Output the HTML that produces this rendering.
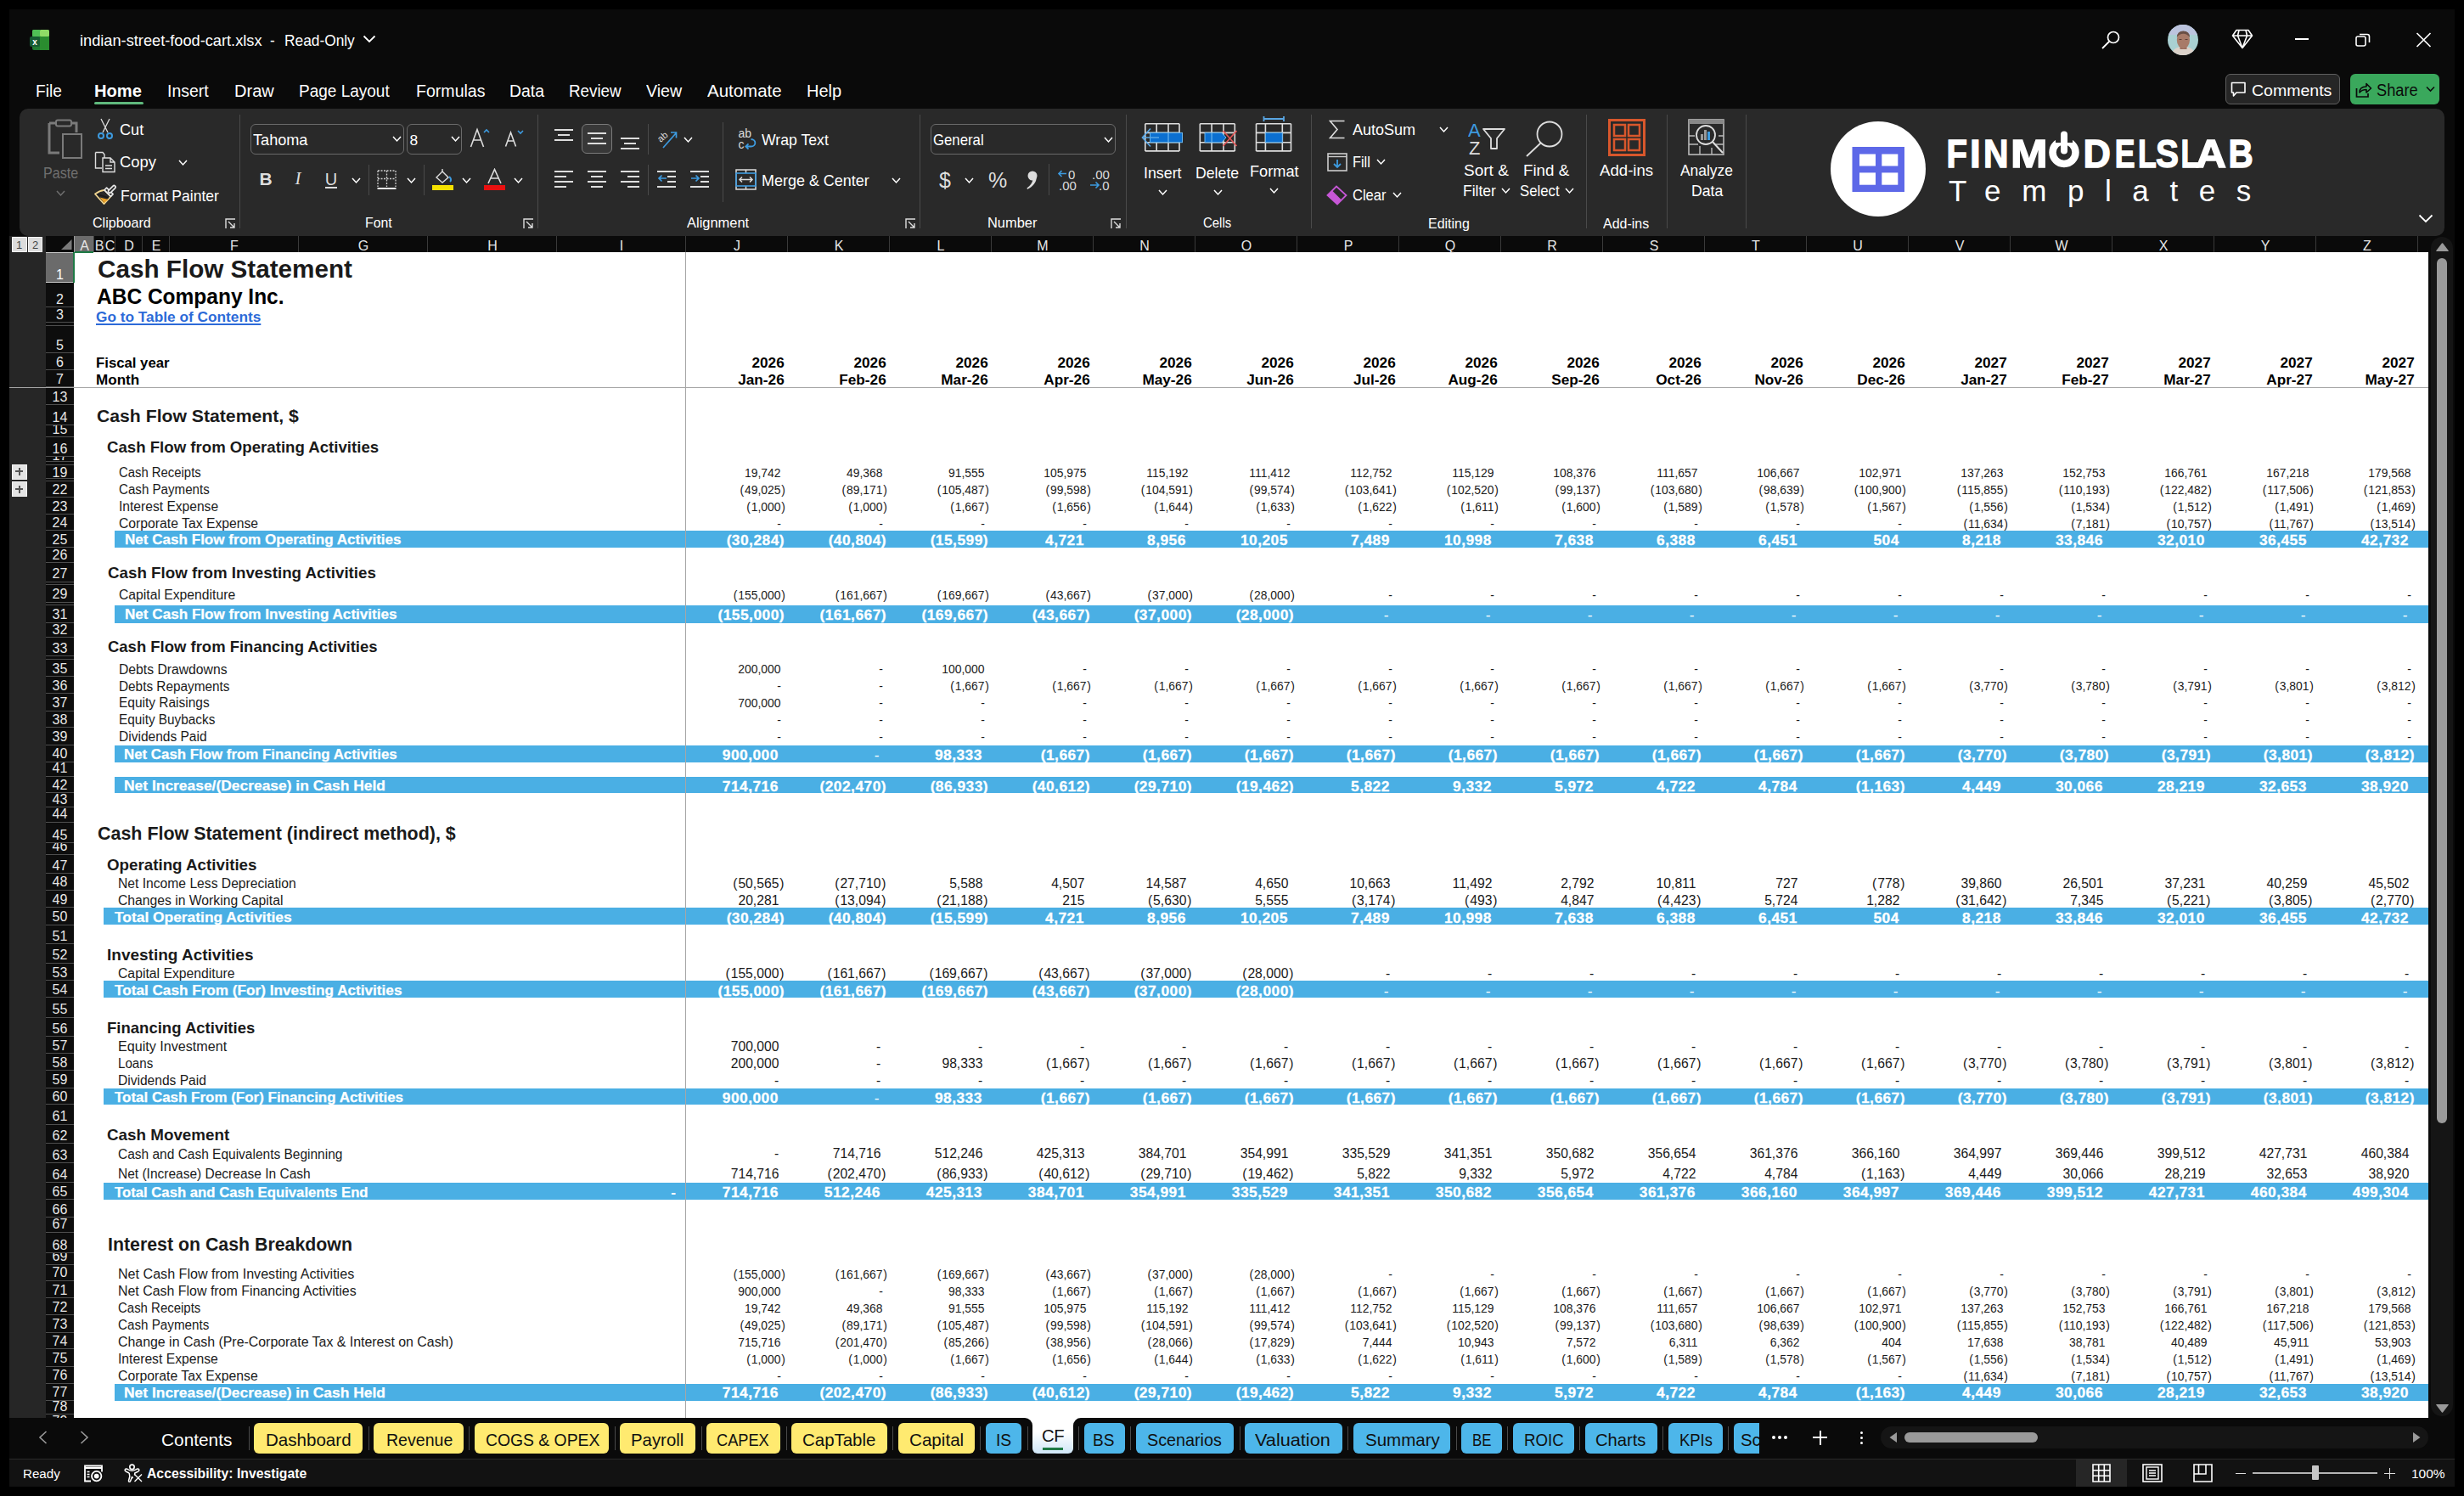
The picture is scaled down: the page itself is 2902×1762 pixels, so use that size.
<!DOCTYPE html>
<html><head><meta charset="utf-8"><title>Cash Flow Statement</title>
<style>
html,body{margin:0;padding:0;}
body{width:2902px;height:1762px;position:relative;overflow:hidden;background:#000;font-family:"Liberation Sans",sans-serif;}
body div, body svg{position:absolute;}
body div div{position:absolute;}
.t{white-space:nowrap;line-height:1;}
.p1{font-weight:400;margin-right:.9px}.p2{font-weight:400;margin-left:.9px}
</style></head><body>
<div style="left:0px;top:0px;width:2902px;height:1762px;background:#000;"></div>
<div style="left:11px;top:11px;width:2880px;height:1740px;background:#0a0a0a;"></div>
<svg style="left:35px;top:35px" width="24" height="24" viewBox="0 0 24 24">
<rect x="3" y="0" width="20" height="24" rx="2" fill="#1f7a32"/>
<rect x="3" y="0" width="10" height="8" rx="1.5" fill="#4fc056"/>
<rect x="12" y="0" width="11" height="8" rx="1.5" fill="#8fdc66"/>
<rect x="12" y="8" width="11" height="16" fill="#2a8c2f"/>
<rect x="0" y="8" width="12" height="12" rx="2" fill="#165c33"/>
<text x="6" y="18" font-family="Liberation Sans" font-weight="700" font-size="10" fill="#fff" text-anchor="middle">x</text>
</svg>
<div class="t" style="left:94.4px;top:39.0px;font-size:18.6px;font-weight:400;color:#fff;font-family:'Liberation Sans', sans-serif;transform:scaleX(0.9793);transform-origin:0 0;">indian-street-food-cart.xlsx</div>
<div class="t" style="left:318.4px;top:39.0px;font-size:18.6px;font-weight:400;color:#fff;font-family:'Liberation Sans', sans-serif;transform:scaleX(0.9204);transform-origin:0 0;">-</div>
<div class="t" style="left:335.0px;top:39.0px;font-size:18.6px;font-weight:400;color:#fff;font-family:'Liberation Sans', sans-serif;transform:scaleX(0.9314);transform-origin:0 0;">Read-Only</div>
<svg style="left:427px;top:41px" width="16" height="10" viewBox="0 0 16 10"><path d="M1.5 1.5 L8 8 L14.5 1.5" stroke="#fff" stroke-width="1.8" fill="none"/></svg>
<svg style="left:2474px;top:35px" width="24" height="24" viewBox="0 0 24 24"><circle cx="15" cy="9" r="6.5" stroke="#fff" stroke-width="1.7" fill="none"/><path d="M10.5 13.5 L2 22" stroke="#fff" stroke-width="1.8"/></svg>
<svg style="left:2553px;top:29px" width="36" height="36" viewBox="0 0 36 36">
<defs><clipPath id="av"><circle cx="18" cy="18" r="18"/></clipPath></defs>
<g clip-path="url(#av)"><rect width="36" height="36" fill="#a9d0d2"/><rect width="36" height="12" fill="#bcc4de"/>
<path d="M4 36 Q6 28 13 26.5 L24 26.5 Q31 28 33 36 Z" fill="#dcd2ca"/>
<rect x="14.5" y="24" width="8" height="5" fill="#9b6e5e"/>
<ellipse cx="18.4" cy="18" rx="7.6" ry="10.2" fill="#a87b69"/>
<path d="M10.8 15 Q11 7.5 18.4 7.5 Q26 7.5 26 15 Q22 10.5 18.4 10.8 Q14 10.8 10.8 15 Z" fill="#6a5046"/>
<path d="M13.5 17.5 H16.5 M20.5 17.5 H23.5" stroke="#5a3d35" stroke-width="1.2"/></g></svg>
<svg style="left:2628px;top:34px" width="26" height="24" viewBox="0 0 26 24"><path d="M6 1.5 H20 L24.5 8 L13 22.5 L1.5 8 Z M1.5 8 H24.5 M9 1.5 L7.5 8 L13 22.5 L18.5 8 L17 1.5" stroke="#fff" stroke-width="1.6" fill="none" stroke-linejoin="round"/></svg>
<div style="left:2703px;top:45px;width:16px;height:2px;background:#fff;"></div>
<svg style="left:2773px;top:38px" width="20" height="18" viewBox="0 0 20 18"><rect x="2" y="5" width="11" height="11" rx="2" stroke="#fff" stroke-width="1.6" fill="none"/><path d="M6 2.5 H15 a2.5 2.5 0 0 1 2.5 2.5 V12" stroke="#fff" stroke-width="1.6" fill="none"/></svg>
<svg style="left:2845px;top:38px" width="19" height="18" viewBox="0 0 19 18"><path d="M1.5 1 L17.5 17 M17.5 1 L1.5 17" stroke="#fff" stroke-width="1.7"/></svg>
<div style="left:2621px;top:87px;width:135px;height:36px;background:#262626;border:1px solid #5e5e5e;border-radius:6px;box-sizing:border-box"></div>
<svg style="left:2627px;top:96px" width="20" height="20" viewBox="0 0 20 20"><path d="M1.5 1.5 H17 V13 H7 L3.5 17 V13 H1.5 Z" stroke="#fff" stroke-width="1.6" fill="none" stroke-linejoin="round"/></svg>
<div class="t" style="left:2652.2px;top:97.0px;font-size:19.2px;font-weight:400;color:#fff;font-family:'Liberation Sans', sans-serif;transform:scaleX(1.0171);transform-origin:0 0;">Comments</div>
<div style="left:2768px;top:87px;width:105px;height:36px;background:#3aa85c;border-radius:6px"></div>
<svg style="left:2774px;top:96px" width="20" height="20" viewBox="0 0 20 20"><path d="M1.5 8 V18 H15 V14" stroke="#0b0b0b" stroke-width="1.7" fill="none"/><path d="M5 13 C5 8 8 6 13 6 V2.5 L18.5 8 L13 13 V9.5 C9 9.5 7 10.5 5 13 Z" stroke="#0b0b0b" stroke-width="1.6" fill="none" stroke-linejoin="round"/></svg>
<div class="t" style="left:2799.4px;top:97.0px;font-size:19.5px;font-weight:400;color:#0b0b0b;font-family:'Liberation Sans', sans-serif;transform:scaleX(0.9340);transform-origin:0 0;">Share</div>
<svg style="left:2857px;top:101px" width="11" height="8" viewBox="0 0 11 8"><path d="M1 1.5 L5.5 6 L10 1.5" stroke="#0b0b0b" stroke-width="1.6" fill="none"/></svg>
<div class="t" style="left:41.6px;top:98.0px;font-size:19.3px;font-weight:400;color:#fff;font-family:'Liberation Sans', sans-serif;transform:scaleX(0.9904);transform-origin:0 0;">File</div>
<div class="t" style="left:111.0px;top:98.0px;font-size:19.3px;font-weight:700;color:#fff;font-family:'Liberation Sans', sans-serif;transform:scaleX(1.0444);transform-origin:0 0;">Home</div>
<div class="t" style="left:197.4px;top:98.0px;font-size:19.3px;font-weight:400;color:#fff;font-family:'Liberation Sans', sans-serif;transform:scaleX(1.0090);transform-origin:0 0;">Insert</div>
<div class="t" style="left:276.4px;top:98.0px;font-size:19.3px;font-weight:400;color:#fff;font-family:'Liberation Sans', sans-serif;transform:scaleX(1.0392);transform-origin:0 0;">Draw</div>
<div class="t" style="left:352.4px;top:98.0px;font-size:19.3px;font-weight:400;color:#fff;font-family:'Liberation Sans', sans-serif;transform:scaleX(0.9855);transform-origin:0 0;">Page Layout</div>
<div class="t" style="left:490.4px;top:98.0px;font-size:19.3px;font-weight:400;color:#fff;font-family:'Liberation Sans', sans-serif;transform:scaleX(1.0146);transform-origin:0 0;">Formulas</div>
<div class="t" style="left:600.0px;top:98.0px;font-size:19.3px;font-weight:400;color:#fff;font-family:'Liberation Sans', sans-serif;transform:scaleX(1.0058);transform-origin:0 0;">Data</div>
<div class="t" style="left:670.3px;top:98.0px;font-size:19.3px;font-weight:400;color:#fff;font-family:'Liberation Sans', sans-serif;transform:scaleX(0.9735);transform-origin:0 0;">Review</div>
<div class="t" style="left:761.2px;top:98.0px;font-size:19.3px;font-weight:400;color:#fff;font-family:'Liberation Sans', sans-serif;transform:scaleX(1.0173);transform-origin:0 0;">View</div>
<div class="t" style="left:833.4px;top:98.0px;font-size:19.3px;font-weight:400;color:#fff;font-family:'Liberation Sans', sans-serif;transform:scaleX(1.0617);transform-origin:0 0;">Automate</div>
<div class="t" style="left:950.4px;top:98.0px;font-size:19.3px;font-weight:400;color:#fff;font-family:'Liberation Sans', sans-serif;transform:scaleX(1.0380);transform-origin:0 0;">Help</div>
<div style="left:111px;top:120px;width:58px;height:3px;background:#5fb97c;border-radius:2px"></div>
<div style="left:23px;top:128px;width:2856px;height:150px;background:#292929;border-radius:10px"></div>
<div style="left:282px;top:135px;width:1px;height:134px;background:#4a4a4a;"></div>
<div style="left:633px;top:135px;width:1px;height:134px;background:#4a4a4a;"></div>
<div style="left:1083px;top:135px;width:1px;height:134px;background:#4a4a4a;"></div>
<div style="left:1326px;top:135px;width:1px;height:134px;background:#4a4a4a;"></div>
<div style="left:1544px;top:135px;width:1px;height:134px;background:#4a4a4a;"></div>
<div style="left:1868px;top:135px;width:1px;height:134px;background:#4a4a4a;"></div>
<div style="left:1963px;top:135px;width:1px;height:134px;background:#4a4a4a;"></div>
<div style="left:2056px;top:135px;width:1px;height:134px;background:#4a4a4a;"></div>
<svg style="left:54px;top:140px" width="44" height="48" viewBox="0 0 44 48">
<path d="M4 5 H12 M30 5 H36 V16" stroke="#7a7a7a" stroke-width="3" fill="none"/>
<path d="M4 5 V40 H16" stroke="#7a7a7a" stroke-width="3" fill="none"/>
<rect x="12" y="1.5" width="18" height="7" rx="2" stroke="#7a7a7a" stroke-width="2" fill="#292929"/>
<rect x="20" y="18" width="22" height="28" stroke="#7a7a7a" stroke-width="2" fill="none"/>
</svg>
<div class="t" style="left:51.4px;top:196.0px;font-size:17.8px;font-weight:400;color:#6f6f6f;font-family:'Liberation Sans', sans-serif;transform:scaleX(0.9052);transform-origin:0 0;">Paste</div>
<svg style="left:66px;top:224px" width="11" height="8" viewBox="0 0 11 8"><path d="M1 1 L5.5 6 L10 1" stroke="#6f6f6f" stroke-width="1.5" fill="none"/></svg>
<svg style="left:114px;top:139px" width="20" height="26" viewBox="0 0 20 26"><path d="M5 1 L13 17 M15 1 L7 17" stroke="#ddd" stroke-width="1.3"/><circle cx="5" cy="21" r="3" stroke="#3d9be0" stroke-width="2" fill="none"/><circle cx="15" cy="21" r="3" stroke="#3d9be0" stroke-width="2" fill="none"/></svg>
<div class="t" style="left:141.4px;top:145.0px;font-size:17.8px;font-weight:400;color:#fff;font-family:'Liberation Sans', sans-serif;transform:scaleX(1.0181);transform-origin:0 0;">Cut</div>
<svg style="left:111px;top:178px" width="26" height="26" viewBox="0 0 26 26"><path d="M1.5 1.5 H10 L12 4 V8 M1.5 1.5 V20 H9" stroke="#ddd" stroke-width="1.4" fill="none"/><path d="M10 8 H19 L24 13 V24.5 H10 Z M19 8 V13 H24 M13 17 H21 M13 20.5 H21" stroke="#ddd" stroke-width="1.4" fill="none"/></svg>
<div class="t" style="left:141.4px;top:183.0px;font-size:17.8px;font-weight:400;color:#fff;font-family:'Liberation Sans', sans-serif;transform:scaleX(1.0349);transform-origin:0 0;">Copy</div>
<svg style="left:210px;top:188px" width="11" height="8" viewBox="0 0 11 8"><path d="M1 1 L5.5 6 L10 1" stroke="#fff" stroke-width="1.5" fill="none"/></svg>
<svg style="left:111px;top:217px" width="26" height="25" viewBox="0 0 26 25"><path d="M1 11.5 Q6 7.5 12 6.8 L19.5 14.3 Q16 18.5 11.5 23.2 Z" stroke="#f2d68f" stroke-width="1.7" fill="none" stroke-linejoin="round"/><path d="M6.5 15.5 L16.5 18 L11.5 22 Z" fill="#e8a028"/><path d="M4 12 L17 16" stroke="#1a1a1a" stroke-width="1.6"/><path d="M12 6.8 L14.6 4.2 L22.1 11.7 L19.5 14.3 Z" stroke="#e6e6e6" stroke-width="1.7" fill="#292929" stroke-linejoin="round"/><path d="M18.3 8.3 L23.3 3.3" stroke="#e6e6e6" stroke-width="5.2" stroke-linecap="round"/><path d="M18.3 8.3 L23.3 3.3" stroke="#292929" stroke-width="1.8" stroke-linecap="round"/></svg>
<div class="t" style="left:142.0px;top:223.0px;font-size:17.8px;font-weight:400;color:#fff;font-family:'Liberation Sans', sans-serif;transform:scaleX(0.9855);transform-origin:0 0;">Format Painter</div>
<div class="t" style="left:109.0px;top:254.0px;font-size:16.2px;font-weight:400;color:#fff;font-family:'Liberation Sans', sans-serif;transform:scaleX(0.9923);transform-origin:0 0;">Clipboard</div>
<svg style="left:265px;top:257px" width="13" height="13" viewBox="0 0 13 13"><path d="M1 12 V1 H12" stroke="#ddd" stroke-width="1.4" fill="none"/><path d="M4 4 L11 11 M6 11 H11 V6" stroke="#ddd" stroke-width="1.4" fill="none"/></svg>
<div style="left:295px;top:146px;width:181px;height:36px;background:transparent;border:1px solid #6a6a6a;border-radius:6px;box-sizing:border-box"></div>
<div class="t" style="left:297.9px;top:157.0px;font-size:17.8px;font-weight:400;color:#fff;font-family:'Liberation Sans', sans-serif;transform:scaleX(1.0186);transform-origin:0 0;">Tahoma</div>
<svg style="left:462px;top:160px" width="11" height="8" viewBox="0 0 11 8"><path d="M1 1 L5.5 6 L10 1" stroke="#fff" stroke-width="1.5" fill="none"/></svg>
<div style="left:479px;top:146px;width:65px;height:36px;background:transparent;border:1px solid #6a6a6a;border-radius:6px;box-sizing:border-box"></div>
<div class="t" style="left:482.5px;top:157.0px;font-size:17.4px;font-weight:400;color:#fff;font-family:'Liberation Sans', sans-serif;">8</div>
<svg style="left:531px;top:160px" width="11" height="8" viewBox="0 0 11 8"><path d="M1 1 L5.5 6 L10 1" stroke="#fff" stroke-width="1.5" fill="none"/></svg>
<svg style="left:553px;top:150px" width="26" height="24" viewBox="0 0 26 24"><path d="M1.5 23 L9 2.5 L16.5 23 M4.5 15 H13.5" stroke="#ddd" stroke-width="1.6" fill="none"/><path d="M17 6 L20 3 L23 6" stroke="#3d9be0" stroke-width="1.6" fill="none"/></svg>
<svg style="left:594px;top:152px" width="24" height="22" viewBox="0 0 24 22"><path d="M1.5 20.5 L7.5 4 L13.5 20.5 M4 14 H11" stroke="#ddd" stroke-width="1.6" fill="none"/><path d="M16 2 L19 5 L22 2" stroke="#3d9be0" stroke-width="1.6" fill="none"/></svg>
<div class="t" style="left:13.0px;width:600px;text-align:center;top:200.0px;font-size:21px;font-weight:700;color:#ddd;font-family:'Liberation Sans', sans-serif;">B</div>
<div class="t" style="left:51.0px;width:600px;text-align:center;top:200.0px;font-size:21px;font-weight:400;color:#ddd;font-family:'Liberation Sans', sans-serif;font-family:'Liberation Serif',serif"><i>I</i></div>
<div class="t" style="left:90.0px;width:600px;text-align:center;top:201.0px;font-size:20px;font-weight:400;color:#ddd;font-family:'Liberation Sans', sans-serif;">U</div>
<div style="left:383px;top:220px;width:14px;height:2px;background:#ddd;"></div>
<svg style="left:414px;top:209px" width="11" height="8" viewBox="0 0 11 8"><path d="M1 1 L5.5 6 L10 1" stroke="#fff" stroke-width="1.5" fill="none"/></svg>
<div style="left:434px;top:194px;width:1px;height:36px;background:#4a4a4a;"></div>
<svg style="left:443px;top:199px" width="25" height="25" viewBox="0 0 25 25"><path d="M2 2 H23 V21 M2 2 V21 M12.5 2 V21 M2 11.5 H23" stroke="#ccc" stroke-width="1.3" stroke-dasharray="2 1.5" fill="none"/><path d="M1.5 23 H23.5" stroke="#eee" stroke-width="2"/></svg>
<svg style="left:479px;top:209px" width="11" height="8" viewBox="0 0 11 8"><path d="M1 1 L5.5 6 L10 1" stroke="#fff" stroke-width="1.5" fill="none"/></svg>
<div style="left:499px;top:194px;width:1px;height:36px;background:#4a4a4a;"></div>
<svg style="left:508px;top:198px" width="27" height="27" viewBox="0 0 27 27"><path d="M6 11 L13 4 L20 11 L13 17 Z" stroke="#ddd" stroke-width="1.4" fill="none"/><path d="M13 4 V1" stroke="#ddd" stroke-width="1.4"/><path d="M21 10 C23 12 24 14 22 16" stroke="#3d9be0" stroke-width="2" fill="none"/><rect x="1" y="20" width="25" height="6" fill="#f5e100"/></svg>
<svg style="left:544px;top:209px" width="11" height="8" viewBox="0 0 11 8"><path d="M1 1 L5.5 6 L10 1" stroke="#fff" stroke-width="1.5" fill="none"/></svg>
<svg style="left:569px;top:198px" width="27" height="27" viewBox="0 0 27 27"><path d="M6 18 L13.5 1.5 L21 18 M9 12 H18" stroke="#ddd" stroke-width="1.6" fill="none"/><rect x="1" y="20" width="25" height="6" fill="#e81010"/></svg>
<svg style="left:605px;top:209px" width="11" height="8" viewBox="0 0 11 8"><path d="M1 1 L5.5 6 L10 1" stroke="#fff" stroke-width="1.5" fill="none"/></svg>
<div class="t" style="left:429.9px;top:254.0px;font-size:16.2px;font-weight:400;color:#fff;font-family:'Liberation Sans', sans-serif;transform:scaleX(0.9780);transform-origin:0 0;">Font</div>
<svg style="left:616px;top:257px" width="13" height="13" viewBox="0 0 13 13"><path d="M1 12 V1 H12" stroke="#ddd" stroke-width="1.4" fill="none"/><path d="M4 4 L11 11 M6 11 H11 V6" stroke="#ddd" stroke-width="1.4" fill="none"/></svg>
<div style="left:653px;top:152px;width:22px;height:2px;background:#ddd;"></div>
<div style="left:657px;top:158px;width:14px;height:2px;background:#ddd;"></div>
<div style="left:653px;top:164px;width:22px;height:2px;background:#ddd;"></div>
<div style="left:685px;top:146px;width:36px;height:35px;background:#383838;border:1px solid #7a7a7a;border-radius:6px;box-sizing:border-box"></div>
<div style="left:692px;top:156px;width:22px;height:2px;background:#ddd;"></div>
<div style="left:696px;top:162px;width:14px;height:2px;background:#ddd;"></div>
<div style="left:692px;top:168px;width:22px;height:2px;background:#ddd;"></div>
<div style="left:731px;top:162px;width:22px;height:2px;background:#ddd;"></div>
<div style="left:735px;top:168px;width:14px;height:2px;background:#ddd;"></div>
<div style="left:731px;top:174px;width:22px;height:2px;background:#ddd;"></div>
<div style="left:763px;top:146px;width:1px;height:36px;background:#4a4a4a;"></div>
<svg style="left:772px;top:151px" width="27" height="25" viewBox="0 0 27 25"><text x="2" y="14" transform="rotate(-40 8 10)" font-family="Liberation Sans" font-size="11" fill="#ddd">ab</text><path d="M9 23 L24 6 M18 5 H24.5 V11.5" stroke="#3d9be0" stroke-width="1.7" fill="none"/></svg>
<svg style="left:805px;top:161px" width="11" height="8" viewBox="0 0 11 8"><path d="M1 1 L5.5 6 L10 1" stroke="#fff" stroke-width="1.5" fill="none"/></svg>
<div style="left:851px;top:144px;width:1px;height:94px;background:#4a4a4a;"></div>
<div style="left:653px;top:201px;width:22px;height:2px;background:#ddd;"></div>
<div style="left:653px;top:207px;width:14px;height:2px;background:#ddd;"></div>
<div style="left:653px;top:213px;width:22px;height:2px;background:#ddd;"></div>
<div style="left:653px;top:219px;width:14px;height:2px;background:#ddd;"></div>
<div style="left:692px;top:201px;width:22px;height:2px;background:#ddd;"></div>
<div style="left:696px;top:207px;width:14px;height:2px;background:#ddd;"></div>
<div style="left:692px;top:213px;width:22px;height:2px;background:#ddd;"></div>
<div style="left:696px;top:219px;width:14px;height:2px;background:#ddd;"></div>
<div style="left:731px;top:201px;width:22px;height:2px;background:#ddd;"></div>
<div style="left:739px;top:207px;width:14px;height:2px;background:#ddd;"></div>
<div style="left:731px;top:213px;width:22px;height:2px;background:#ddd;"></div>
<div style="left:739px;top:219px;width:14px;height:2px;background:#ddd;"></div>
<div style="left:763px;top:194px;width:1px;height:36px;background:#4a4a4a;"></div>
<div style="left:774px;top:201px;width:22px;height:2px;background:#ddd;"></div>
<div style="left:786px;top:207px;width:10px;height:2px;background:#ddd;"></div>
<div style="left:786px;top:213px;width:10px;height:2px;background:#ddd;"></div>
<div style="left:774px;top:219px;width:22px;height:2px;background:#ddd;"></div>
<svg style="left:774px;top:204px" width="12" height="12" viewBox="0 0 12 12"><path d="M11 6 H2 M5.5 2.5 L2 6 L5.5 9.5" stroke="#3d9be0" stroke-width="1.7" fill="none"/></svg>
<div style="left:813px;top:201px;width:22px;height:2px;background:#ddd;"></div>
<div style="left:825px;top:207px;width:10px;height:2px;background:#ddd;"></div>
<div style="left:825px;top:213px;width:10px;height:2px;background:#ddd;"></div>
<div style="left:813px;top:219px;width:22px;height:2px;background:#ddd;"></div>
<svg style="left:813px;top:204px" width="12" height="12" viewBox="0 0 12 12"><path d="M1 6 H10 M6.5 2.5 L10 6 L6.5 9.5" stroke="#3d9be0" stroke-width="1.7" fill="none"/></svg>
<svg style="left:869px;top:151px" width="25" height="26" viewBox="0 0 25 26"><text x="0.5" y="11" font-family="Liberation Sans" font-size="14" fill="#ddd">ab</text><text x="0.5" y="23.5" font-family="Liberation Sans" font-size="14" fill="#ddd">c</text><path d="M15.5 13 C22 13 22 21.5 15.5 21.5 H9.5 M12.5 18.3 L9.3 21.5 L12.5 24.7" stroke="#3d9be0" stroke-width="1.8" fill="none"/></svg>
<div class="t" style="left:896.7px;top:157.0px;font-size:17.8px;font-weight:400;color:#fff;font-family:'Liberation Sans', sans-serif;transform:scaleX(0.9928);transform-origin:0 0;">Wrap Text</div>
<svg style="left:866px;top:199px" width="25" height="25" viewBox="0 0 25 25"><rect x="1" y="1" width="23" height="23" stroke="#ddd" stroke-width="1.5" fill="none"/><path d="M12.5 1 V5 M12.5 20 V24" stroke="#ddd" stroke-width="1.5"/><rect x="1" y="5" width="23" height="15" stroke="#3d9be0" stroke-width="1.6" fill="none"/><path d="M5 12.5 H20 M8 9.5 L5 12.5 L8 15.5 M17 9.5 L20 12.5 L17 15.5" stroke="#ddd" stroke-width="1.5" fill="none"/></svg>
<div class="t" style="left:896.7px;top:205.0px;font-size:17.8px;font-weight:400;color:#fff;font-family:'Liberation Sans', sans-serif;transform:scaleX(1.0101);transform-origin:0 0;">Merge &amp; Center</div>
<svg style="left:1050px;top:209px" width="11" height="8" viewBox="0 0 11 8"><path d="M1 1 L5.5 6 L10 1" stroke="#fff" stroke-width="1.5" fill="none"/></svg>
<div class="t" style="left:809.4px;top:254.0px;font-size:16.2px;font-weight:400;color:#fff;font-family:'Liberation Sans', sans-serif;transform:scaleX(1.0162);transform-origin:0 0;">Alignment</div>
<svg style="left:1066px;top:257px" width="13" height="13" viewBox="0 0 13 13"><path d="M1 12 V1 H12" stroke="#ddd" stroke-width="1.4" fill="none"/><path d="M4 4 L11 11 M6 11 H11 V6" stroke="#ddd" stroke-width="1.4" fill="none"/></svg>
<div style="left:1096px;top:146px;width:218px;height:36px;background:transparent;border:1px solid #6a6a6a;border-radius:6px;box-sizing:border-box"></div>
<div class="t" style="left:1098.9px;top:157.0px;font-size:17.8px;font-weight:400;color:#fff;font-family:'Liberation Sans', sans-serif;transform:scaleX(0.9428);transform-origin:0 0;">General</div>
<svg style="left:1300px;top:161px" width="11" height="8" viewBox="0 0 11 8"><path d="M1 1 L5.5 6 L10 1" stroke="#fff" stroke-width="1.5" fill="none"/></svg>
<div class="t" style="left:813.0px;width:600px;text-align:center;top:200.0px;font-size:25px;font-weight:400;color:#ddd;font-family:'Liberation Sans', sans-serif;">$</div>
<svg style="left:1136px;top:209px" width="11" height="8" viewBox="0 0 11 8"><path d="M1 1 L5.5 6 L10 1" stroke="#fff" stroke-width="1.5" fill="none"/></svg>
<div class="t" style="left:875.0px;width:600px;text-align:center;top:200.0px;font-size:25px;font-weight:400;color:#ddd;font-family:'Liberation Sans', sans-serif;">%</div>
<svg style="left:1208px;top:200px" width="14" height="24" viewBox="0 0 14 24"><circle cx="8" cy="7" r="5.5" fill="#ddd"/><path d="M12.8 8 C13 15 8 20 2 23 L1.5 21.5 C5.5 19 8 15 8.5 11" fill="#ddd"/></svg>
<div style="left:1235px;top:193px;width:1px;height:37px;background:#4a4a4a;"></div>
<svg style="left:1244px;top:199px" width="26" height="26" viewBox="0 0 26 26"><path d="M12 5.5 H3 M6.5 2 L3 5.5 L6.5 9" stroke="#3d9be0" stroke-width="1.6" fill="none"/><text x="14" y="12" font-family="Liberation Sans" font-size="15" fill="#ddd">0</text><text x="3" y="25" font-family="Liberation Sans" font-size="15" fill="#ddd">.00</text></svg>
<svg style="left:1283px;top:199px" width="26" height="26" viewBox="0 0 26 26"><text x="3" y="12" font-family="Liberation Sans" font-size="15" fill="#ddd">.00</text><path d="M1 19 H11 M7.5 15.5 L11 19 L7.5 22.5" stroke="#3d9be0" stroke-width="1.6" fill="none"/><text x="11" y="25" font-family="Liberation Sans" font-size="15" fill="#ddd">.0</text></svg>
<div class="t" style="left:1162.8px;top:254.0px;font-size:16.2px;font-weight:400;color:#fff;font-family:'Liberation Sans', sans-serif;transform:scaleX(1.0154);transform-origin:0 0;">Number</div>
<svg style="left:1308px;top:257px" width="13" height="13" viewBox="0 0 13 13"><path d="M1 12 V1 H12" stroke="#ddd" stroke-width="1.4" fill="none"/><path d="M4 4 L11 11 M6 11 H11 V6" stroke="#ddd" stroke-width="1.4" fill="none"/></svg>
<svg style="left:1335px;top:132px" width="200" height="53" viewBox="0 0 200 53"><path d="M13.8 13.8 V45.9 M27.2 13.8 V45.9 M41.0 13.8 V45.9 M54.0 13.8 V45.9 M13.8 13.8 H54.0 M13.8 24.4 H54.0 M13.8 35.7 H54.0 M13.8 45.9 H54.0 " stroke="#dedede" stroke-width="1.6" fill="none"/><rect x="19.5" y="24.4" width="38" height="11.3" fill="#0b6fd0" stroke="#6bb8f0" stroke-width="1"/><path d="M41 24.4 V35.7" stroke="#6bb8f0" stroke-width="1.2"/><path d="M30 30 H11 M20 19.5 L10.5 30 L20 40.5" stroke="#59a6e4" stroke-width="1.7" fill="none"/><path d="M78.3 13.8 V45.9 M92.1 13.8 V45.9 M106.0 13.8 V45.9 M119.3 13.8 V45.9 M78.3 13.8 H119.3 M78.3 24.4 H119.3 M78.3 35.7 H119.3 M78.3 45.9 H119.3 " stroke="#dedede" stroke-width="1.6" fill="none"/><path d="M84 24.4 H104 L109 30 L104 35.7 H84 Z" fill="#0b6fd0" stroke="#6bb8f0" stroke-width="1"/><path d="M92.1 24.4 V35.7" stroke="#6bb8f0" stroke-width="1.2"/><path d="M105.5 22 L121.5 40 M121.5 22 L105.5 40" stroke="#e25656" stroke-width="1.7"/><path d="M144.5 13.8 V45.9 M155.4 13.8 V45.9 M175.3 13.8 V45.9 M185.5 13.8 V45.9 M144.5 13.8 H185.5 M144.5 24.4 H185.5 M144.5 35.7 H185.5 M144.5 45.9 H185.5 " stroke="#dedede" stroke-width="1.6" fill="none"/><rect x="155.4" y="24.4" width="19.9" height="11.3" fill="#0b6fd0" stroke="#6bb8f0" stroke-width="1"/><path d="M153.5 8 H177 M153.5 5 V11 M177 5 V11" stroke="#59a6e4" stroke-width="1.8"/></svg>
<div class="t" style="left:1346.7px;top:196.0px;font-size:17.8px;font-weight:400;color:#fff;font-family:'Liberation Sans', sans-serif;transform:scaleX(1.0019);transform-origin:0 0;">Insert</div>
<svg style="left:1364px;top:223px" width="11" height="8" viewBox="0 0 11 8"><path d="M1 1 L5.5 6 L10 1" stroke="#fff" stroke-width="1.5" fill="none"/></svg>
<div class="t" style="left:1408.4px;top:196.0px;font-size:17.8px;font-weight:400;color:#fff;font-family:'Liberation Sans', sans-serif;transform:scaleX(0.9951);transform-origin:0 0;">Delete</div>
<svg style="left:1429px;top:223px" width="11" height="8" viewBox="0 0 11 8"><path d="M1 1 L5.5 6 L10 1" stroke="#fff" stroke-width="1.5" fill="none"/></svg>
<div class="t" style="left:1471.9px;top:194.0px;font-size:17.8px;font-weight:400;color:#fff;font-family:'Liberation Sans', sans-serif;transform:scaleX(1.0236);transform-origin:0 0;">Format</div>
<svg style="left:1495px;top:221px" width="11" height="8" viewBox="0 0 11 8"><path d="M1 1 L5.5 6 L10 1" stroke="#fff" stroke-width="1.5" fill="none"/></svg>
<div class="t" style="left:1417.4px;top:254.0px;font-size:16.2px;font-weight:400;color:#fff;font-family:'Liberation Sans', sans-serif;transform:scaleX(0.9220);transform-origin:0 0;">Cells</div>
<svg style="left:1565px;top:141px" width="20" height="23" viewBox="0 0 20 23"><path d="M18.5 1.5 H1.5 L10 11.5 L1.5 21.5 H18.5" stroke="#ddd" stroke-width="1.6" fill="none"/></svg>
<div class="t" style="left:1593.1px;top:145.0px;font-size:17.8px;font-weight:400;color:#fff;font-family:'Liberation Sans', sans-serif;transform:scaleX(1.0135);transform-origin:0 0;">AutoSum</div>
<svg style="left:1695px;top:148.5px" width="11" height="8" viewBox="0 0 11 8"><path d="M1 1 L5.5 6 L10 1" stroke="#fff" stroke-width="1.5" fill="none"/></svg>
<svg style="left:1563px;top:180px" width="24" height="22" viewBox="0 0 24 22"><rect x="1" y="1" width="22" height="20" stroke="#ccc" stroke-width="1.6" fill="none"/><path d="M1 4.5 H23" stroke="#ccc" stroke-width="1.4"/><path d="M12 8 V17 M8 13 L12 17 L16 13" stroke="#3d9be0" stroke-width="1.8" fill="none"/></svg>
<div class="t" style="left:1593.1px;top:183.0px;font-size:17.8px;font-weight:400;color:#fff;font-family:'Liberation Sans', sans-serif;transform:scaleX(0.9192);transform-origin:0 0;">Fill</div>
<svg style="left:1621px;top:186.5px" width="11" height="8" viewBox="0 0 11 8"><path d="M1 1 L5.5 6 L10 1" stroke="#fff" stroke-width="1.5" fill="none"/></svg>
<svg style="left:1562px;top:218px" width="25" height="24" viewBox="0 0 25 24"><path d="M1.5 12 L12 1.5 L23.5 12 L13 22.5 Z" stroke="#c657d6" stroke-width="1.8" fill="none"/><path d="M1.5 12 L7 6.5 L17.5 17 L13 22.5 Z" fill="#c657d6"/></svg>
<div class="t" style="left:1593.1px;top:222.0px;font-size:17.8px;font-weight:400;color:#fff;font-family:'Liberation Sans', sans-serif;transform:scaleX(0.9287);transform-origin:0 0;">Clear</div>
<svg style="left:1640px;top:225.5px" width="11" height="8" viewBox="0 0 11 8"><path d="M1 1 L5.5 6 L10 1" stroke="#fff" stroke-width="1.5" fill="none"/></svg>
<svg style="left:1729px;top:141px" width="45" height="42" viewBox="0 0 45 42"><text x="0" y="20" font-family="Liberation Sans" font-size="22" fill="#3d9be0">A</text><text x="1" y="41" font-family="Liberation Sans" font-size="22" fill="#ddd">Z</text><path d="M18 11 H43 L34 22 V34 H27 V22 Z" stroke="#ddd" stroke-width="1.8" fill="none" stroke-linejoin="round"/></svg>
<div class="t" style="left:1724.4px;top:193.0px;font-size:17.8px;font-weight:400;color:#fff;font-family:'Liberation Sans', sans-serif;transform:scaleX(1.0695);transform-origin:0 0;">Sort &amp;</div>
<div class="t" style="left:1723.4px;top:217.0px;font-size:17.8px;font-weight:400;color:#fff;font-family:'Liberation Sans', sans-serif;transform:scaleX(0.9860);transform-origin:0 0;">Filter</div>
<svg style="left:1768px;top:221px" width="11" height="8" viewBox="0 0 11 8"><path d="M1 1 L5.5 6 L10 1" stroke="#fff" stroke-width="1.5" fill="none"/></svg>
<svg style="left:1796px;top:141px" width="47" height="44" viewBox="0 0 47 44"><circle cx="29" cy="17" r="14.5" stroke="#ddd" stroke-width="1.8" fill="none"/><path d="M18.5 27.5 L2 43" stroke="#ddd" stroke-width="1.8"/></svg>
<div class="t" style="left:1794.4px;top:193.0px;font-size:17.8px;font-weight:400;color:#fff;font-family:'Liberation Sans', sans-serif;transform:scaleX(1.0536);transform-origin:0 0;">Find &amp;</div>
<div class="t" style="left:1789.9px;top:217.0px;font-size:17.8px;font-weight:400;color:#fff;font-family:'Liberation Sans', sans-serif;transform:scaleX(0.9420);transform-origin:0 0;">Select</div>
<svg style="left:1843px;top:221px" width="11" height="8" viewBox="0 0 11 8"><path d="M1 1 L5.5 6 L10 1" stroke="#fff" stroke-width="1.5" fill="none"/></svg>
<div class="t" style="left:1681.8px;top:255.0px;font-size:16.2px;font-weight:400;color:#fff;font-family:'Liberation Sans', sans-serif;transform:scaleX(0.9852);transform-origin:0 0;">Editing</div>
<svg style="left:1894px;top:140px" width="44" height="44" viewBox="0 0 44 44"><rect x="1.5" y="1.5" width="41" height="41" stroke="#d8572c" stroke-width="3" fill="none"/><rect x="7" y="7" width="13" height="13" stroke="#d8572c" stroke-width="2.5" fill="none"/><rect x="24" y="7" width="13" height="13" stroke="#d8572c" stroke-width="2.5" fill="none"/><rect x="7" y="24" width="13" height="13" stroke="#d8572c" stroke-width="2.5" fill="none"/><rect x="24" y="24" width="13" height="13" stroke="#d8572c" stroke-width="2.5" fill="none"/></svg>
<div class="t" style="left:1884.4px;top:193.0px;font-size:17.8px;font-weight:400;color:#fff;font-family:'Liberation Sans', sans-serif;transform:scaleX(1.0472);transform-origin:0 0;">Add-ins</div>
<div class="t" style="left:1887.9px;top:255.0px;font-size:16.2px;font-weight:400;color:#fff;font-family:'Liberation Sans', sans-serif;transform:scaleX(0.9868);transform-origin:0 0;">Add-ins</div>
<svg style="left:1988px;top:140px" width="44" height="44" viewBox="0 0 44 44">
<rect x="1" y="1" width="41" height="41" stroke="#bbb" stroke-width="1.6" fill="none"/><rect x="1" y="1" width="41" height="5" fill="#888"/>
<path d="M1 20 H8 M36 20 H42 M1 30 H12 M32 30 H42 M14 32 V42 M28 34 V42" stroke="#bbb" stroke-width="1.4"/>
<circle cx="21" cy="19" r="11" stroke="#ddd" stroke-width="1.8" fill="#292929"/><path d="M29 27 L41 40" stroke="#ddd" stroke-width="2"/>
<rect x="15" y="18" width="3" height="7" fill="#999"/><rect x="19" y="13" width="3" height="12" fill="#999"/><rect x="23" y="15" width="3" height="10" fill="#3d9be0"/></svg>
<div class="t" style="left:1979.4px;top:193.0px;font-size:17.8px;font-weight:400;color:#fff;font-family:'Liberation Sans', sans-serif;transform:scaleX(0.9791);transform-origin:0 0;">Analyze</div>
<div class="t" style="left:1992.0px;top:217.0px;font-size:17.8px;font-weight:400;color:#fff;font-family:'Liberation Sans', sans-serif;transform:scaleX(0.9921);transform-origin:0 0;">Data</div>
<svg style="left:2155px;top:142px" width="114" height="114" viewBox="0 0 114 114"><circle cx="57" cy="57" r="56" fill="#fff"/>
<rect x="26.5" y="31" width="61.5" height="53" fill="#5d68e8"/>
<rect x="35" y="39.5" width="19" height="14" fill="#fff"/><rect x="61.3" y="39.5" width="19" height="14" fill="#fff"/>
<rect x="35" y="61.4" width="19" height="14.3" fill="#fff"/><rect x="61.3" y="61.4" width="19" height="14.3" fill="#fff"/></svg>
<svg style="left:2280px;top:150px" width="390" height="52" viewBox="0 0 390 52"><text x="12.5" y="46.8" textLength="24.5" lengthAdjust="spacingAndGlyphs" font-family="Liberation Sans" font-weight="700" font-size="47" fill="#fff" stroke="#fff" stroke-width="1.4">F</text><text x="40.0" y="46.8" textLength="12.7" lengthAdjust="spacingAndGlyphs" font-family="Liberation Sans" font-weight="700" font-size="47" fill="#fff" stroke="#fff" stroke-width="1.4">I</text><text x="56.0" y="46.8" textLength="29.5" lengthAdjust="spacingAndGlyphs" font-family="Liberation Sans" font-weight="700" font-size="47" fill="#fff" stroke="#fff" stroke-width="1.4">N</text><text x="88.0" y="46.8" textLength="43.6" lengthAdjust="spacingAndGlyphs" font-family="Liberation Sans" font-weight="700" font-size="47" fill="#fff" stroke="#fff" stroke-width="1.4">M</text><text x="173.6" y="46.8" textLength="32.4" lengthAdjust="spacingAndGlyphs" font-family="Liberation Sans" font-weight="700" font-size="47" fill="#fff" stroke="#fff" stroke-width="1.4">D</text><text x="210.8" y="46.8" textLength="23.8" lengthAdjust="spacingAndGlyphs" font-family="Liberation Sans" font-weight="700" font-size="47" fill="#fff" stroke="#fff" stroke-width="1.4">E</text><text x="238.0" y="46.8" textLength="21.8" lengthAdjust="spacingAndGlyphs" font-family="Liberation Sans" font-weight="700" font-size="47" fill="#fff" stroke="#fff" stroke-width="1.4">L</text><text x="259.0" y="46.8" textLength="27.0" lengthAdjust="spacingAndGlyphs" font-family="Liberation Sans" font-weight="700" font-size="47" fill="#fff" stroke="#fff" stroke-width="1.4">S</text><text x="288.6" y="46.8" textLength="21.4" lengthAdjust="spacingAndGlyphs" font-family="Liberation Sans" font-weight="700" font-size="47" fill="#fff" stroke="#fff" stroke-width="1.4">L</text><text x="306.0" y="46.8" textLength="36.0" lengthAdjust="spacingAndGlyphs" font-family="Liberation Sans" font-weight="700" font-size="47" fill="#fff" stroke="#fff" stroke-width="1.4">A</text><text x="344.5" y="46.8" textLength="29.2" lengthAdjust="spacingAndGlyphs" font-family="Liberation Sans" font-weight="700" font-size="47" fill="#fff" stroke="#fff" stroke-width="1.4">B</text><circle cx="151" cy="29.5" r="13.5" stroke="#fff" stroke-width="8.5" fill="none"/><rect x="141" y="4" width="20" height="14" fill="#292929"/><rect x="147" y="4.5" width="8" height="27" rx="4" fill="#fff"/></svg>
<div class="t" style="left:2295.0px;top:207.0px;font-size:35px;font-weight:400;color:#fff;font-family:'Liberation Sans', sans-serif;letter-spacing:24.6px">Templates</div>
<svg style="left:2848px;top:252px" width="18" height="11" viewBox="0 0 18 11"><path d="M1.5 1.5 L9 9 L16.5 1.5" stroke="#fff" stroke-width="1.8" fill="none"/></svg>
<div style="left:11px;top:278px;width:43px;height:1392px;background:#262626;"></div>
<div style="left:54px;top:278px;width:2806px;height:19px;background:#0a0a0a;"></div>
<div style="left:54px;top:297px;width:33px;height:1373px;background:#0d0d0d;"></div>
<div style="left:87px;top:297px;width:2773px;height:1373px;background:#fff;"></div>
<div style="left:2860px;top:278px;width:31px;height:1392px;background:#0a0a0a;"></div>
<div style="left:2863px;top:279px;width:26px;height:1389px;background:#151515;border-radius:13px"></div>
<svg style="left:2869px;top:286px" width="15" height="10" viewBox="0 0 15 10"><path d="M1 9.5 L7.5 1 L14 9.5 Z" fill="#9a9a9a" stroke="#9a9a9a" stroke-width="1.5" stroke-linejoin="round"/></svg>
<div style="left:2870px;top:304px;width:12px;height:1019px;background:#9a9a9a;border-radius:6px"></div>
<svg style="left:2869px;top:1653.5px" width="15" height="10" viewBox="0 0 15 10"><path d="M1 0.5 L7.5 9 L14 0.5 Z" fill="#9a9a9a" stroke="#9a9a9a" stroke-width="1.5" stroke-linejoin="round"/></svg>
<svg style="left:72px;top:282px" width="13" height="12" viewBox="0 0 13 12"><path d="M12.5 0 V12 H0 Z" fill="#7a7a7a"/></svg>
<div style="left:87px;top:278px;width:23px;height:19px;background:#6b6b6b;"></div>
<div style="left:110px;top:278px;width:1px;height:19px;background:#3a3a3a;"></div>
<div class="t" style="left:-200.5px;width:600px;text-align:center;top:282.0px;font-size:16px;font-weight:400;color:#e6e6e6;font-family:'Liberation Sans', sans-serif;">A</div>
<div style="left:122px;top:278px;width:1px;height:19px;background:#3a3a3a;"></div>
<div class="t" style="left:-183.0px;width:600px;text-align:center;top:282.0px;font-size:16px;font-weight:400;color:#e6e6e6;font-family:'Liberation Sans', sans-serif;">B</div>
<div style="left:135px;top:278px;width:1px;height:19px;background:#3a3a3a;"></div>
<div class="t" style="left:-170.5px;width:600px;text-align:center;top:282.0px;font-size:16px;font-weight:400;color:#e6e6e6;font-family:'Liberation Sans', sans-serif;">C</div>
<div style="left:167px;top:278px;width:1px;height:19px;background:#3a3a3a;"></div>
<div class="t" style="left:-148.0px;width:600px;text-align:center;top:282.0px;font-size:16px;font-weight:400;color:#e6e6e6;font-family:'Liberation Sans', sans-serif;">D</div>
<div style="left:199px;top:278px;width:1px;height:19px;background:#3a3a3a;"></div>
<div class="t" style="left:-116.0px;width:600px;text-align:center;top:282.0px;font-size:16px;font-weight:400;color:#e6e6e6;font-family:'Liberation Sans', sans-serif;">E</div>
<div style="left:351px;top:278px;width:1px;height:19px;background:#3a3a3a;"></div>
<div class="t" style="left:-24.0px;width:600px;text-align:center;top:282.0px;font-size:16px;font-weight:400;color:#e6e6e6;font-family:'Liberation Sans', sans-serif;">F</div>
<div style="left:503px;top:278px;width:1px;height:19px;background:#3a3a3a;"></div>
<div class="t" style="left:128.0px;width:600px;text-align:center;top:282.0px;font-size:16px;font-weight:400;color:#e6e6e6;font-family:'Liberation Sans', sans-serif;">G</div>
<div style="left:655px;top:278px;width:1px;height:19px;background:#3a3a3a;"></div>
<div class="t" style="left:280.0px;width:600px;text-align:center;top:282.0px;font-size:16px;font-weight:400;color:#e6e6e6;font-family:'Liberation Sans', sans-serif;">H</div>
<div style="left:807px;top:278px;width:1px;height:19px;background:#3a3a3a;"></div>
<div class="t" style="left:432.0px;width:600px;text-align:center;top:282.0px;font-size:16px;font-weight:400;color:#e6e6e6;font-family:'Liberation Sans', sans-serif;">I</div>
<div style="left:927px;top:278px;width:1px;height:19px;background:#3a3a3a;"></div>
<div class="t" style="left:568.0px;width:600px;text-align:center;top:282.0px;font-size:16px;font-weight:400;color:#e6e6e6;font-family:'Liberation Sans', sans-serif;">J</div>
<div style="left:1047px;top:278px;width:1px;height:19px;background:#3a3a3a;"></div>
<div class="t" style="left:688.0px;width:600px;text-align:center;top:282.0px;font-size:16px;font-weight:400;color:#e6e6e6;font-family:'Liberation Sans', sans-serif;">K</div>
<div style="left:1167px;top:278px;width:1px;height:19px;background:#3a3a3a;"></div>
<div class="t" style="left:808.0px;width:600px;text-align:center;top:282.0px;font-size:16px;font-weight:400;color:#e6e6e6;font-family:'Liberation Sans', sans-serif;">L</div>
<div style="left:1287px;top:278px;width:1px;height:19px;background:#3a3a3a;"></div>
<div class="t" style="left:928.0px;width:600px;text-align:center;top:282.0px;font-size:16px;font-weight:400;color:#e6e6e6;font-family:'Liberation Sans', sans-serif;">M</div>
<div style="left:1407px;top:278px;width:1px;height:19px;background:#3a3a3a;"></div>
<div class="t" style="left:1048.0px;width:600px;text-align:center;top:282.0px;font-size:16px;font-weight:400;color:#e6e6e6;font-family:'Liberation Sans', sans-serif;">N</div>
<div style="left:1527px;top:278px;width:1px;height:19px;background:#3a3a3a;"></div>
<div class="t" style="left:1168.0px;width:600px;text-align:center;top:282.0px;font-size:16px;font-weight:400;color:#e6e6e6;font-family:'Liberation Sans', sans-serif;">O</div>
<div style="left:1647px;top:278px;width:1px;height:19px;background:#3a3a3a;"></div>
<div class="t" style="left:1288.0px;width:600px;text-align:center;top:282.0px;font-size:16px;font-weight:400;color:#e6e6e6;font-family:'Liberation Sans', sans-serif;">P</div>
<div style="left:1767px;top:278px;width:1px;height:19px;background:#3a3a3a;"></div>
<div class="t" style="left:1408.0px;width:600px;text-align:center;top:282.0px;font-size:16px;font-weight:400;color:#e6e6e6;font-family:'Liberation Sans', sans-serif;">Q</div>
<div style="left:1887px;top:278px;width:1px;height:19px;background:#3a3a3a;"></div>
<div class="t" style="left:1528.0px;width:600px;text-align:center;top:282.0px;font-size:16px;font-weight:400;color:#e6e6e6;font-family:'Liberation Sans', sans-serif;">R</div>
<div style="left:2007px;top:278px;width:1px;height:19px;background:#3a3a3a;"></div>
<div class="t" style="left:1648.0px;width:600px;text-align:center;top:282.0px;font-size:16px;font-weight:400;color:#e6e6e6;font-family:'Liberation Sans', sans-serif;">S</div>
<div style="left:2127px;top:278px;width:1px;height:19px;background:#3a3a3a;"></div>
<div class="t" style="left:1768.0px;width:600px;text-align:center;top:282.0px;font-size:16px;font-weight:400;color:#e6e6e6;font-family:'Liberation Sans', sans-serif;">T</div>
<div style="left:2247px;top:278px;width:1px;height:19px;background:#3a3a3a;"></div>
<div class="t" style="left:1888.0px;width:600px;text-align:center;top:282.0px;font-size:16px;font-weight:400;color:#e6e6e6;font-family:'Liberation Sans', sans-serif;">U</div>
<div style="left:2367px;top:278px;width:1px;height:19px;background:#3a3a3a;"></div>
<div class="t" style="left:2008.0px;width:600px;text-align:center;top:282.0px;font-size:16px;font-weight:400;color:#e6e6e6;font-family:'Liberation Sans', sans-serif;">V</div>
<div style="left:2487px;top:278px;width:1px;height:19px;background:#3a3a3a;"></div>
<div class="t" style="left:2128.0px;width:600px;text-align:center;top:282.0px;font-size:16px;font-weight:400;color:#e6e6e6;font-family:'Liberation Sans', sans-serif;">W</div>
<div style="left:2607px;top:278px;width:1px;height:19px;background:#3a3a3a;"></div>
<div class="t" style="left:2248.0px;width:600px;text-align:center;top:282.0px;font-size:16px;font-weight:400;color:#e6e6e6;font-family:'Liberation Sans', sans-serif;">X</div>
<div style="left:2727px;top:278px;width:1px;height:19px;background:#3a3a3a;"></div>
<div class="t" style="left:2368.0px;width:600px;text-align:center;top:282.0px;font-size:16px;font-weight:400;color:#e6e6e6;font-family:'Liberation Sans', sans-serif;">Y</div>
<div style="left:2847px;top:278px;width:1px;height:19px;background:#3a3a3a;"></div>
<div class="t" style="left:2488.0px;width:600px;text-align:center;top:282.0px;font-size:16px;font-weight:400;color:#e6e6e6;font-family:'Liberation Sans', sans-serif;">Z</div>
<div style="left:87px;top:296px;width:23px;height:2px;background:#1e7a45;"></div>
<div style="left:13.5px;top:279px;width:18.0px;height:17.5px;background:#dcdcdc;border:1px solid #f4f4f4;box-sizing:border-box"></div>
<div style="left:32.8px;top:279px;width:17.700000000000003px;height:17.5px;background:#dcdcdc;border:1px solid #f4f4f4;box-sizing:border-box"></div>
<div class="t" style="left:-277.5px;width:600px;text-align:center;top:282.0px;font-size:13px;font-weight:400;color:#444;font-family:'Liberation Sans', sans-serif;">1</div>
<div class="t" style="left:-258.4px;width:600px;text-align:center;top:282.0px;font-size:13px;font-weight:400;color:#444;font-family:'Liberation Sans', sans-serif;">2</div>
<div style="left:54px;top:297px;width:33px;height:36px;background:#6b6b6b;"></div>
<div style="left:54px;top:297px;width:33px;height:1373px;overflow:hidden">
<div style="left:0;top:35.0px;width:33px;height:1px;background:#4e4e4e"></div>
<div style="left:0;top:0.0px;width:33px;height:36.0px;overflow:hidden"><div class="t" style="left:0;width:33px;text-align:center;top:18.5px;font-size:16px;color:#fff;font-family:'Liberation Sans', sans-serif">1</div></div>
<div style="left:0;top:64.0px;width:33px;height:1px;background:#4e4e4e"></div>
<div style="left:0;top:36.0px;width:33px;height:29.0px;overflow:hidden"><div class="t" style="left:0;width:33px;text-align:center;top:11.5px;font-size:16px;color:#e6e6e6;font-family:'Liberation Sans', sans-serif">2</div></div>
<div style="left:0;top:82.0px;width:33px;height:1px;background:#4e4e4e"></div>
<div style="left:0;top:65.0px;width:33px;height:18.0px;overflow:hidden"><div class="t" style="left:0;width:33px;text-align:center;top:0.5px;font-size:16px;color:#e6e6e6;font-family:'Liberation Sans', sans-serif">3</div></div>
<div style="left:0;top:86.0px;width:33px;height:1px;background:#4e4e4e"></div>
<div style="left:0;top:83.0px;width:33px;height:4.0px;overflow:hidden"><div class="t" style="left:0;width:33px;text-align:center;top:-13.5px;font-size:16px;color:#e6e6e6;font-family:'Liberation Sans', sans-serif">4</div></div>
<div style="left:0;top:118.0px;width:33px;height:1px;background:#4e4e4e"></div>
<div style="left:0;top:87.0px;width:33px;height:32.0px;overflow:hidden"><div class="t" style="left:0;width:33px;text-align:center;top:14.5px;font-size:16px;color:#e6e6e6;font-family:'Liberation Sans', sans-serif">5</div></div>
<div style="left:0;top:138.0px;width:33px;height:1px;background:#4e4e4e"></div>
<div style="left:0;top:119.0px;width:33px;height:20.0px;overflow:hidden"><div class="t" style="left:0;width:33px;text-align:center;top:2.5px;font-size:16px;color:#e6e6e6;font-family:'Liberation Sans', sans-serif">6</div></div>
<div style="left:0;top:158.0px;width:33px;height:1px;background:#4e4e4e"></div>
<div style="left:0;top:139.0px;width:33px;height:20.0px;overflow:hidden"><div class="t" style="left:0;width:33px;text-align:center;top:2.5px;font-size:16px;color:#e6e6e6;font-family:'Liberation Sans', sans-serif">7</div></div>
<div style="left:0;top:179.0px;width:33px;height:1px;background:#4e4e4e"></div>
<div style="left:0;top:160.0px;width:33px;height:20.0px;overflow:hidden"><div class="t" style="left:0;width:33px;text-align:center;top:2.5px;font-size:16px;color:#e6e6e6;font-family:'Liberation Sans', sans-serif">13</div></div>
<div style="left:0;top:203.0px;width:33px;height:1px;background:#4e4e4e"></div>
<div style="left:0;top:180.0px;width:33px;height:24.0px;overflow:hidden"><div class="t" style="left:0;width:33px;text-align:center;top:6.5px;font-size:16px;color:#e6e6e6;font-family:'Liberation Sans', sans-serif">14</div></div>
<div style="left:0;top:217.0px;width:33px;height:1px;background:#4e4e4e"></div>
<div style="left:0;top:204.0px;width:33px;height:14.0px;overflow:hidden"><div class="t" style="left:0;width:33px;text-align:center;top:-3.5px;font-size:16px;color:#e6e6e6;font-family:'Liberation Sans', sans-serif">15</div></div>
<div style="left:0;top:240.0px;width:33px;height:1px;background:#4e4e4e"></div>
<div style="left:0;top:218.0px;width:33px;height:23.0px;overflow:hidden"><div class="t" style="left:0;width:33px;text-align:center;top:5.5px;font-size:16px;color:#e6e6e6;font-family:'Liberation Sans', sans-serif">16</div></div>
<div style="left:0;top:246.0px;width:33px;height:1px;background:#4e4e4e"></div>
<div style="left:0;top:241.0px;width:33px;height:6.0px;overflow:hidden"><div class="t" style="left:0;width:33px;text-align:center;top:-9.5px;font-size:16px;color:#e6e6e6;font-family:'Liberation Sans', sans-serif">17</div></div>
<div style="left:0;top:250.0px;width:33px;height:1px;background:#4e4e4e"></div>
<div style="left:0;top:266.0px;width:33px;height:1px;background:#4e4e4e"></div>
<div style="left:0;top:251.0px;width:33px;height:16.0px;overflow:hidden"><div class="t" style="left:0;width:33px;text-align:center;top:0.5px;font-size:16px;color:#e6e6e6;font-family:'Liberation Sans', sans-serif">19</div></div>
<div style="left:0;top:269.0px;width:33px;height:1px;background:#4e4e4e"></div>
<div style="left:0;top:288.0px;width:33px;height:1px;background:#4e4e4e"></div>
<div style="left:0;top:270.0px;width:33px;height:19.0px;overflow:hidden"><div class="t" style="left:0;width:33px;text-align:center;top:1.5px;font-size:16px;color:#e6e6e6;font-family:'Liberation Sans', sans-serif">22</div></div>
<div style="left:0;top:308.0px;width:33px;height:1px;background:#4e4e4e"></div>
<div style="left:0;top:289.0px;width:33px;height:20.0px;overflow:hidden"><div class="t" style="left:0;width:33px;text-align:center;top:2.5px;font-size:16px;color:#e6e6e6;font-family:'Liberation Sans', sans-serif">23</div></div>
<div style="left:0;top:327.0px;width:33px;height:1px;background:#4e4e4e"></div>
<div style="left:0;top:309.0px;width:33px;height:19.0px;overflow:hidden"><div class="t" style="left:0;width:33px;text-align:center;top:1.5px;font-size:16px;color:#e6e6e6;font-family:'Liberation Sans', sans-serif">24</div></div>
<div style="left:0;top:347.0px;width:33px;height:1px;background:#4e4e4e"></div>
<div style="left:0;top:328.0px;width:33px;height:20.0px;overflow:hidden"><div class="t" style="left:0;width:33px;text-align:center;top:2.5px;font-size:16px;color:#e6e6e6;font-family:'Liberation Sans', sans-serif">25</div></div>
<div style="left:0;top:365.0px;width:33px;height:1px;background:#4e4e4e"></div>
<div style="left:0;top:348.0px;width:33px;height:18.0px;overflow:hidden"><div class="t" style="left:0;width:33px;text-align:center;top:0.5px;font-size:16px;color:#e6e6e6;font-family:'Liberation Sans', sans-serif">26</div></div>
<div style="left:0;top:387.5px;width:33px;height:1px;background:#4e4e4e"></div>
<div style="left:0;top:366.0px;width:33px;height:22.5px;overflow:hidden"><div class="t" style="left:0;width:33px;text-align:center;top:5.0px;font-size:16px;color:#e6e6e6;font-family:'Liberation Sans', sans-serif">27</div></div>
<div style="left:0;top:391.0px;width:33px;height:1px;background:#4e4e4e"></div>
<div style="left:0;top:411.5px;width:33px;height:1px;background:#4e4e4e"></div>
<div style="left:0;top:392.0px;width:33px;height:20.5px;overflow:hidden"><div class="t" style="left:0;width:33px;text-align:center;top:3.0px;font-size:16px;color:#e6e6e6;font-family:'Liberation Sans', sans-serif">29</div></div>
<div style="left:0;top:415.0px;width:33px;height:1px;background:#4e4e4e"></div>
<div style="left:0;top:435.6px;width:33px;height:1px;background:#4e4e4e"></div>
<div style="left:0;top:416.0px;width:33px;height:20.6px;overflow:hidden"><div class="t" style="left:0;width:33px;text-align:center;top:3.1px;font-size:16px;color:#e6e6e6;font-family:'Liberation Sans', sans-serif">31</div></div>
<div style="left:0;top:453.0px;width:33px;height:1px;background:#4e4e4e"></div>
<div style="left:0;top:436.6px;width:33px;height:17.4px;overflow:hidden"><div class="t" style="left:0;width:33px;text-align:center;top:-0.1px;font-size:16px;color:#e6e6e6;font-family:'Liberation Sans', sans-serif">32</div></div>
<div style="left:0;top:475.4px;width:33px;height:1px;background:#4e4e4e"></div>
<div style="left:0;top:454.0px;width:33px;height:22.4px;overflow:hidden"><div class="t" style="left:0;width:33px;text-align:center;top:4.9px;font-size:16px;color:#e6e6e6;font-family:'Liberation Sans', sans-serif">33</div></div>
<div style="left:0;top:479.0px;width:33px;height:1px;background:#4e4e4e"></div>
<div style="left:0;top:499.0px;width:33px;height:1px;background:#4e4e4e"></div>
<div style="left:0;top:480.0px;width:33px;height:20.0px;overflow:hidden"><div class="t" style="left:0;width:33px;text-align:center;top:2.5px;font-size:16px;color:#e6e6e6;font-family:'Liberation Sans', sans-serif">35</div></div>
<div style="left:0;top:519.0px;width:33px;height:1px;background:#4e4e4e"></div>
<div style="left:0;top:500.0px;width:33px;height:20.0px;overflow:hidden"><div class="t" style="left:0;width:33px;text-align:center;top:2.5px;font-size:16px;color:#e6e6e6;font-family:'Liberation Sans', sans-serif">36</div></div>
<div style="left:0;top:539.6px;width:33px;height:1px;background:#4e4e4e"></div>
<div style="left:0;top:520.0px;width:33px;height:20.6px;overflow:hidden"><div class="t" style="left:0;width:33px;text-align:center;top:3.1px;font-size:16px;color:#e6e6e6;font-family:'Liberation Sans', sans-serif">37</div></div>
<div style="left:0;top:559.4px;width:33px;height:1px;background:#4e4e4e"></div>
<div style="left:0;top:540.6px;width:33px;height:19.8px;overflow:hidden"><div class="t" style="left:0;width:33px;text-align:center;top:2.3px;font-size:16px;color:#e6e6e6;font-family:'Liberation Sans', sans-serif">38</div></div>
<div style="left:0;top:579.5px;width:33px;height:1px;background:#4e4e4e"></div>
<div style="left:0;top:560.4px;width:33px;height:20.1px;overflow:hidden"><div class="t" style="left:0;width:33px;text-align:center;top:2.6px;font-size:16px;color:#e6e6e6;font-family:'Liberation Sans', sans-serif">39</div></div>
<div style="left:0;top:599.5px;width:33px;height:1px;background:#4e4e4e"></div>
<div style="left:0;top:580.5px;width:33px;height:20.0px;overflow:hidden"><div class="t" style="left:0;width:33px;text-align:center;top:2.5px;font-size:16px;color:#e6e6e6;font-family:'Liberation Sans', sans-serif">40</div></div>
<div style="left:0;top:616.5px;width:33px;height:1px;background:#4e4e4e"></div>
<div style="left:0;top:600.5px;width:33px;height:17.0px;overflow:hidden"><div class="t" style="left:0;width:33px;text-align:center;top:-0.5px;font-size:16px;color:#e6e6e6;font-family:'Liberation Sans', sans-serif">41</div></div>
<div style="left:0;top:636.3px;width:33px;height:1px;background:#4e4e4e"></div>
<div style="left:0;top:617.5px;width:33px;height:19.8px;overflow:hidden"><div class="t" style="left:0;width:33px;text-align:center;top:2.3px;font-size:16px;color:#e6e6e6;font-family:'Liberation Sans', sans-serif">42</div></div>
<div style="left:0;top:653.4px;width:33px;height:1px;background:#4e4e4e"></div>
<div style="left:0;top:637.3px;width:33px;height:17.1px;overflow:hidden"><div class="t" style="left:0;width:33px;text-align:center;top:-0.4px;font-size:16px;color:#e6e6e6;font-family:'Liberation Sans', sans-serif">43</div></div>
<div style="left:0;top:670.8px;width:33px;height:1px;background:#4e4e4e"></div>
<div style="left:0;top:654.4px;width:33px;height:17.4px;overflow:hidden"><div class="t" style="left:0;width:33px;text-align:center;top:-0.1px;font-size:16px;color:#e6e6e6;font-family:'Liberation Sans', sans-serif">44</div></div>
<div style="left:0;top:695.1px;width:33px;height:1px;background:#4e4e4e"></div>
<div style="left:0;top:671.8px;width:33px;height:24.3px;overflow:hidden"><div class="t" style="left:0;width:33px;text-align:center;top:6.8px;font-size:16px;color:#e6e6e6;font-family:'Liberation Sans', sans-serif">45</div></div>
<div style="left:0;top:708.5px;width:33px;height:1px;background:#4e4e4e"></div>
<div style="left:0;top:696.1px;width:33px;height:13.4px;overflow:hidden"><div class="t" style="left:0;width:33px;text-align:center;top:-4.1px;font-size:16px;color:#e6e6e6;font-family:'Liberation Sans', sans-serif">46</div></div>
<div style="left:0;top:731.4px;width:33px;height:1px;background:#4e4e4e"></div>
<div style="left:0;top:709.5px;width:33px;height:22.9px;overflow:hidden"><div class="t" style="left:0;width:33px;text-align:center;top:5.4px;font-size:16px;color:#e6e6e6;font-family:'Liberation Sans', sans-serif">47</div></div>
<div style="left:0;top:750.7px;width:33px;height:1px;background:#4e4e4e"></div>
<div style="left:0;top:732.4px;width:33px;height:19.3px;overflow:hidden"><div class="t" style="left:0;width:33px;text-align:center;top:1.8px;font-size:16px;color:#e6e6e6;font-family:'Liberation Sans', sans-serif">48</div></div>
<div style="left:0;top:771.2px;width:33px;height:1px;background:#4e4e4e"></div>
<div style="left:0;top:751.7px;width:33px;height:20.5px;overflow:hidden"><div class="t" style="left:0;width:33px;text-align:center;top:3.0px;font-size:16px;color:#e6e6e6;font-family:'Liberation Sans', sans-serif">49</div></div>
<div style="left:0;top:791.5px;width:33px;height:1px;background:#4e4e4e"></div>
<div style="left:0;top:772.2px;width:33px;height:20.3px;overflow:hidden"><div class="t" style="left:0;width:33px;text-align:center;top:2.8px;font-size:16px;color:#e6e6e6;font-family:'Liberation Sans', sans-serif">50</div></div>
<div style="left:0;top:814.2px;width:33px;height:1px;background:#4e4e4e"></div>
<div style="left:0;top:792.5px;width:33px;height:22.7px;overflow:hidden"><div class="t" style="left:0;width:33px;text-align:center;top:5.2px;font-size:16px;color:#e6e6e6;font-family:'Liberation Sans', sans-serif">51</div></div>
<div style="left:0;top:837.0px;width:33px;height:1px;background:#4e4e4e"></div>
<div style="left:0;top:815.2px;width:33px;height:22.8px;overflow:hidden"><div class="t" style="left:0;width:33px;text-align:center;top:5.3px;font-size:16px;color:#e6e6e6;font-family:'Liberation Sans', sans-serif">52</div></div>
<div style="left:0;top:857.3px;width:33px;height:1px;background:#4e4e4e"></div>
<div style="left:0;top:838.0px;width:33px;height:20.3px;overflow:hidden"><div class="t" style="left:0;width:33px;text-align:center;top:2.8px;font-size:16px;color:#e6e6e6;font-family:'Liberation Sans', sans-serif">53</div></div>
<div style="left:0;top:877.3px;width:33px;height:1px;background:#4e4e4e"></div>
<div style="left:0;top:858.3px;width:33px;height:20.0px;overflow:hidden"><div class="t" style="left:0;width:33px;text-align:center;top:2.5px;font-size:16px;color:#e6e6e6;font-family:'Liberation Sans', sans-serif">54</div></div>
<div style="left:0;top:900.5px;width:33px;height:1px;background:#4e4e4e"></div>
<div style="left:0;top:878.3px;width:33px;height:23.2px;overflow:hidden"><div class="t" style="left:0;width:33px;text-align:center;top:5.7px;font-size:16px;color:#e6e6e6;font-family:'Liberation Sans', sans-serif">55</div></div>
<div style="left:0;top:923.4px;width:33px;height:1px;background:#4e4e4e"></div>
<div style="left:0;top:901.5px;width:33px;height:22.9px;overflow:hidden"><div class="t" style="left:0;width:33px;text-align:center;top:5.4px;font-size:16px;color:#e6e6e6;font-family:'Liberation Sans', sans-serif">56</div></div>
<div style="left:0;top:943.1px;width:33px;height:1px;background:#4e4e4e"></div>
<div style="left:0;top:924.4px;width:33px;height:19.7px;overflow:hidden"><div class="t" style="left:0;width:33px;text-align:center;top:2.2px;font-size:16px;color:#e6e6e6;font-family:'Liberation Sans', sans-serif">57</div></div>
<div style="left:0;top:963.2px;width:33px;height:1px;background:#4e4e4e"></div>
<div style="left:0;top:944.1px;width:33px;height:20.1px;overflow:hidden"><div class="t" style="left:0;width:33px;text-align:center;top:2.6px;font-size:16px;color:#e6e6e6;font-family:'Liberation Sans', sans-serif">58</div></div>
<div style="left:0;top:983.5px;width:33px;height:1px;background:#4e4e4e"></div>
<div style="left:0;top:964.2px;width:33px;height:20.3px;overflow:hidden"><div class="t" style="left:0;width:33px;text-align:center;top:2.8px;font-size:16px;color:#e6e6e6;font-family:'Liberation Sans', sans-serif">59</div></div>
<div style="left:0;top:1003.3px;width:33px;height:1px;background:#4e4e4e"></div>
<div style="left:0;top:984.5px;width:33px;height:19.8px;overflow:hidden"><div class="t" style="left:0;width:33px;text-align:center;top:2.3px;font-size:16px;color:#e6e6e6;font-family:'Liberation Sans', sans-serif">60</div></div>
<div style="left:0;top:1026.7px;width:33px;height:1px;background:#4e4e4e"></div>
<div style="left:0;top:1004.3px;width:33px;height:23.4px;overflow:hidden"><div class="t" style="left:0;width:33px;text-align:center;top:5.9px;font-size:16px;color:#e6e6e6;font-family:'Liberation Sans', sans-serif">61</div></div>
<div style="left:0;top:1049.4px;width:33px;height:1px;background:#4e4e4e"></div>
<div style="left:0;top:1027.7px;width:33px;height:22.7px;overflow:hidden"><div class="t" style="left:0;width:33px;text-align:center;top:5.2px;font-size:16px;color:#e6e6e6;font-family:'Liberation Sans', sans-serif">62</div></div>
<div style="left:0;top:1072.2px;width:33px;height:1px;background:#4e4e4e"></div>
<div style="left:0;top:1050.4px;width:33px;height:22.8px;overflow:hidden"><div class="t" style="left:0;width:33px;text-align:center;top:5.3px;font-size:16px;color:#e6e6e6;font-family:'Liberation Sans', sans-serif">63</div></div>
<div style="left:0;top:1095.3px;width:33px;height:1px;background:#4e4e4e"></div>
<div style="left:0;top:1073.2px;width:33px;height:23.1px;overflow:hidden"><div class="t" style="left:0;width:33px;text-align:center;top:5.6px;font-size:16px;color:#e6e6e6;font-family:'Liberation Sans', sans-serif">64</div></div>
<div style="left:0;top:1115.4px;width:33px;height:1px;background:#4e4e4e"></div>
<div style="left:0;top:1096.3px;width:33px;height:20.1px;overflow:hidden"><div class="t" style="left:0;width:33px;text-align:center;top:2.6px;font-size:16px;color:#e6e6e6;font-family:'Liberation Sans', sans-serif">65</div></div>
<div style="left:0;top:1136.1px;width:33px;height:1px;background:#4e4e4e"></div>
<div style="left:0;top:1116.4px;width:33px;height:20.7px;overflow:hidden"><div class="t" style="left:0;width:33px;text-align:center;top:3.2px;font-size:16px;color:#e6e6e6;font-family:'Liberation Sans', sans-serif">66</div></div>
<div style="left:0;top:1153.5px;width:33px;height:1px;background:#4e4e4e"></div>
<div style="left:0;top:1137.1px;width:33px;height:17.4px;overflow:hidden"><div class="t" style="left:0;width:33px;text-align:center;top:-0.1px;font-size:16px;color:#e6e6e6;font-family:'Liberation Sans', sans-serif">67</div></div>
<div style="left:0;top:1178.0px;width:33px;height:1px;background:#4e4e4e"></div>
<div style="left:0;top:1154.5px;width:33px;height:24.5px;overflow:hidden"><div class="t" style="left:0;width:33px;text-align:center;top:7.0px;font-size:16px;color:#e6e6e6;font-family:'Liberation Sans', sans-serif">68</div></div>
<div style="left:0;top:1191.6px;width:33px;height:1px;background:#4e4e4e"></div>
<div style="left:0;top:1179.0px;width:33px;height:13.6px;overflow:hidden"><div class="t" style="left:0;width:33px;text-align:center;top:-3.9px;font-size:16px;color:#e6e6e6;font-family:'Liberation Sans', sans-serif">69</div></div>
<div style="left:0;top:1211.0px;width:33px;height:1px;background:#4e4e4e"></div>
<div style="left:0;top:1192.6px;width:33px;height:19.4px;overflow:hidden"><div class="t" style="left:0;width:33px;text-align:center;top:1.9px;font-size:16px;color:#e6e6e6;font-family:'Liberation Sans', sans-serif">70</div></div>
<div style="left:0;top:1231.4px;width:33px;height:1px;background:#4e4e4e"></div>
<div style="left:0;top:1212.0px;width:33px;height:20.4px;overflow:hidden"><div class="t" style="left:0;width:33px;text-align:center;top:2.9px;font-size:16px;color:#e6e6e6;font-family:'Liberation Sans', sans-serif">71</div></div>
<div style="left:0;top:1251.4px;width:33px;height:1px;background:#4e4e4e"></div>
<div style="left:0;top:1232.4px;width:33px;height:20.0px;overflow:hidden"><div class="t" style="left:0;width:33px;text-align:center;top:2.5px;font-size:16px;color:#e6e6e6;font-family:'Liberation Sans', sans-serif">72</div></div>
<div style="left:0;top:1271.8px;width:33px;height:1px;background:#4e4e4e"></div>
<div style="left:0;top:1252.4px;width:33px;height:20.4px;overflow:hidden"><div class="t" style="left:0;width:33px;text-align:center;top:2.9px;font-size:16px;color:#e6e6e6;font-family:'Liberation Sans', sans-serif">73</div></div>
<div style="left:0;top:1291.2px;width:33px;height:1px;background:#4e4e4e"></div>
<div style="left:0;top:1272.8px;width:33px;height:19.4px;overflow:hidden"><div class="t" style="left:0;width:33px;text-align:center;top:1.9px;font-size:16px;color:#e6e6e6;font-family:'Liberation Sans', sans-serif">74</div></div>
<div style="left:0;top:1311.5px;width:33px;height:1px;background:#4e4e4e"></div>
<div style="left:0;top:1292.2px;width:33px;height:20.3px;overflow:hidden"><div class="t" style="left:0;width:33px;text-align:center;top:2.8px;font-size:16px;color:#e6e6e6;font-family:'Liberation Sans', sans-serif">75</div></div>
<div style="left:0;top:1331.7px;width:33px;height:1px;background:#4e4e4e"></div>
<div style="left:0;top:1312.5px;width:33px;height:20.2px;overflow:hidden"><div class="t" style="left:0;width:33px;text-align:center;top:2.7px;font-size:16px;color:#e6e6e6;font-family:'Liberation Sans', sans-serif">76</div></div>
<div style="left:0;top:1351.6px;width:33px;height:1px;background:#4e4e4e"></div>
<div style="left:0;top:1332.7px;width:33px;height:19.9px;overflow:hidden"><div class="t" style="left:0;width:33px;text-align:center;top:2.4px;font-size:16px;color:#e6e6e6;font-family:'Liberation Sans', sans-serif">77</div></div>
<div style="left:0;top:1368.0px;width:33px;height:1px;background:#4e4e4e"></div>
<div style="left:0;top:1352.6px;width:33px;height:16.4px;overflow:hidden"><div class="t" style="left:0;width:33px;text-align:center;top:-1.1px;font-size:16px;color:#e6e6e6;font-family:'Liberation Sans', sans-serif">78</div></div>
<div style="left:0;top:1385.0px;width:33px;height:1px;background:#4e4e4e"></div>
<div style="left:0;top:1369.0px;width:33px;height:17.0px;overflow:hidden"><div class="t" style="left:0;width:33px;text-align:center;top:-0.5px;font-size:16px;color:#e6e6e6;font-family:'Liberation Sans', sans-serif">79</div></div>
</div>
<div style="left:54px;top:332px;width:33px;height:1px;background:#c8c8c8;"></div>
<div style="left:54px;top:297px;width:33px;height:1px;background:#c8c8c8;"></div>
<div style="left:87px;top:278px;width:1px;height:19px;background:#9a9a9a;"></div>
<div style="left:86px;top:297px;width:2px;height:36px;background:#1e7a45;"></div>
<div style="left:13.5px;top:546.5px;width:18.0px;height:18.0px;background:#e4e4e4;border:1px solid #f6f6f6;box-sizing:border-box"></div>
<div style="left:18px;top:554px;width:9px;height:2px;background:#555;"></div>
<div style="left:21.5px;top:550.5px;width:2.0px;height:9.0px;background:#555;"></div>
<div style="left:13.5px;top:567px;width:18.0px;height:18px;background:#e4e4e4;border:1px solid #f6f6f6;box-sizing:border-box"></div>
<div style="left:18px;top:575px;width:9px;height:2px;background:#555;"></div>
<div style="left:21.5px;top:571.5px;width:2.0px;height:9.0px;background:#555;"></div>
<div style="left:807px;top:297px;width:1px;height:1373px;background:#a6a6a6;"></div>
<div style="left:11px;top:456px;width:2849px;height:1px;background:#a6a6a6;"></div>
<div style="left:135px;top:625px;width:2725px;height:20px;background:#4aafe4;"></div>
<div style="left:135px;top:713px;width:2725px;height:20.600000000000023px;background:#4aafe4;"></div>
<div style="left:135px;top:877.5px;width:2725px;height:20.0px;background:#4aafe4;"></div>
<div style="left:135px;top:914.5px;width:2725px;height:19.799999999999955px;background:#4aafe4;"></div>
<div style="left:135px;top:1629.7px;width:2725px;height:19.899999999999864px;background:#4aafe4;"></div>
<div style="left:122px;top:1069.2px;width:2738px;height:20.299999999999955px;background:#4aafe4;"></div>
<div style="left:122px;top:1155.3px;width:2738px;height:20.0px;background:#4aafe4;"></div>
<div style="left:122px;top:1281.5px;width:2738px;height:19.799999999999955px;background:#4aafe4;"></div>
<div style="left:122px;top:1393.3px;width:2738px;height:20.100000000000136px;background:#4aafe4;"></div>
<div style="left:807px;top:297px;width:1px;height:1373px;background:#a6a6a6;"></div>
<div class="t" style="left:115.0px;top:303.0px;font-size:29.2px;font-weight:700;color:#1a1a1a;font-family:'Liberation Sans', sans-serif;transform:scaleX(1.0163);transform-origin:0 0;">Cash Flow Statement</div>
<div class="t" style="left:114.0px;top:337.0px;font-size:25.6px;font-weight:700;color:#000;font-family:'Liberation Sans', sans-serif;transform:scaleX(0.9574);transform-origin:0 0;">ABC Company Inc.</div>
<div class="t" style="left:113.0px;top:365.0px;font-size:17.2px;font-weight:700;color:#2c6ad8;font-family:'Liberation Sans', sans-serif;text-decoration:underline;text-decoration-thickness:2px;text-underline-offset:1.5px;transform:scaleX(1.0040);transform-origin:0 0;">Go to Table of Contents</div>
<div class="t" style="left:113.0px;top:420.0px;font-size:16.6px;font-weight:700;color:#000;font-family:'Liberation Sans', sans-serif;transform:scaleX(1.0091);transform-origin:0 0;">Fiscal year</div>
<div class="t" style="left:113.0px;top:440.0px;font-size:16.6px;font-weight:700;color:#000;font-family:'Liberation Sans', sans-serif;transform:scaleX(1.0287);transform-origin:0 0;">Month</div>
<div class="t" style="right:1978.3px;top:419.0px;font-size:17.2px;font-weight:700;color:#000;font-family:'Liberation Sans', sans-serif;">2026</div>
<div class="t" style="right:1978.3px;top:439.0px;font-size:17.2px;font-weight:700;color:#000;font-family:'Liberation Sans', sans-serif;">Jan-26</div>
<div class="t" style="right:1858.3px;top:419.0px;font-size:17.2px;font-weight:700;color:#000;font-family:'Liberation Sans', sans-serif;">2026</div>
<div class="t" style="right:1858.3px;top:439.0px;font-size:17.2px;font-weight:700;color:#000;font-family:'Liberation Sans', sans-serif;">Feb-26</div>
<div class="t" style="right:1738.3px;top:419.0px;font-size:17.2px;font-weight:700;color:#000;font-family:'Liberation Sans', sans-serif;">2026</div>
<div class="t" style="right:1738.3px;top:439.0px;font-size:17.2px;font-weight:700;color:#000;font-family:'Liberation Sans', sans-serif;">Mar-26</div>
<div class="t" style="right:1618.3px;top:419.0px;font-size:17.2px;font-weight:700;color:#000;font-family:'Liberation Sans', sans-serif;">2026</div>
<div class="t" style="right:1618.3px;top:439.0px;font-size:17.2px;font-weight:700;color:#000;font-family:'Liberation Sans', sans-serif;">Apr-26</div>
<div class="t" style="right:1498.3px;top:419.0px;font-size:17.2px;font-weight:700;color:#000;font-family:'Liberation Sans', sans-serif;">2026</div>
<div class="t" style="right:1498.3px;top:439.0px;font-size:17.2px;font-weight:700;color:#000;font-family:'Liberation Sans', sans-serif;">May-26</div>
<div class="t" style="right:1378.3px;top:419.0px;font-size:17.2px;font-weight:700;color:#000;font-family:'Liberation Sans', sans-serif;">2026</div>
<div class="t" style="right:1378.3px;top:439.0px;font-size:17.2px;font-weight:700;color:#000;font-family:'Liberation Sans', sans-serif;">Jun-26</div>
<div class="t" style="right:1258.3px;top:419.0px;font-size:17.2px;font-weight:700;color:#000;font-family:'Liberation Sans', sans-serif;">2026</div>
<div class="t" style="right:1258.3px;top:439.0px;font-size:17.2px;font-weight:700;color:#000;font-family:'Liberation Sans', sans-serif;">Jul-26</div>
<div class="t" style="right:1138.3px;top:419.0px;font-size:17.2px;font-weight:700;color:#000;font-family:'Liberation Sans', sans-serif;">2026</div>
<div class="t" style="right:1138.3px;top:439.0px;font-size:17.2px;font-weight:700;color:#000;font-family:'Liberation Sans', sans-serif;">Aug-26</div>
<div class="t" style="right:1018.3px;top:419.0px;font-size:17.2px;font-weight:700;color:#000;font-family:'Liberation Sans', sans-serif;">2026</div>
<div class="t" style="right:1018.3px;top:439.0px;font-size:17.2px;font-weight:700;color:#000;font-family:'Liberation Sans', sans-serif;">Sep-26</div>
<div class="t" style="right:898.3px;top:419.0px;font-size:17.2px;font-weight:700;color:#000;font-family:'Liberation Sans', sans-serif;">2026</div>
<div class="t" style="right:898.3px;top:439.0px;font-size:17.2px;font-weight:700;color:#000;font-family:'Liberation Sans', sans-serif;">Oct-26</div>
<div class="t" style="right:778.3px;top:419.0px;font-size:17.2px;font-weight:700;color:#000;font-family:'Liberation Sans', sans-serif;">2026</div>
<div class="t" style="right:778.3px;top:439.0px;font-size:17.2px;font-weight:700;color:#000;font-family:'Liberation Sans', sans-serif;">Nov-26</div>
<div class="t" style="right:658.3px;top:419.0px;font-size:17.2px;font-weight:700;color:#000;font-family:'Liberation Sans', sans-serif;">2026</div>
<div class="t" style="right:658.3px;top:439.0px;font-size:17.2px;font-weight:700;color:#000;font-family:'Liberation Sans', sans-serif;">Dec-26</div>
<div class="t" style="right:538.3px;top:419.0px;font-size:17.2px;font-weight:700;color:#000;font-family:'Liberation Sans', sans-serif;">2027</div>
<div class="t" style="right:538.3px;top:439.0px;font-size:17.2px;font-weight:700;color:#000;font-family:'Liberation Sans', sans-serif;">Jan-27</div>
<div class="t" style="right:418.3px;top:419.0px;font-size:17.2px;font-weight:700;color:#000;font-family:'Liberation Sans', sans-serif;">2027</div>
<div class="t" style="right:418.3px;top:439.0px;font-size:17.2px;font-weight:700;color:#000;font-family:'Liberation Sans', sans-serif;">Feb-27</div>
<div class="t" style="right:298.3px;top:419.0px;font-size:17.2px;font-weight:700;color:#000;font-family:'Liberation Sans', sans-serif;">2027</div>
<div class="t" style="right:298.3px;top:439.0px;font-size:17.2px;font-weight:700;color:#000;font-family:'Liberation Sans', sans-serif;">Mar-27</div>
<div class="t" style="right:178.3px;top:419.0px;font-size:17.2px;font-weight:700;color:#000;font-family:'Liberation Sans', sans-serif;">2027</div>
<div class="t" style="right:178.3px;top:439.0px;font-size:17.2px;font-weight:700;color:#000;font-family:'Liberation Sans', sans-serif;">Apr-27</div>
<div class="t" style="right:58.3px;top:419.0px;font-size:17.2px;font-weight:700;color:#000;font-family:'Liberation Sans', sans-serif;">2027</div>
<div class="t" style="right:58.3px;top:439.0px;font-size:17.2px;font-weight:700;color:#000;font-family:'Liberation Sans', sans-serif;">May-27</div>
<div class="t" style="left:114.0px;top:479.0px;font-size:21.1px;font-weight:700;color:#1a1a1a;font-family:'Liberation Sans', sans-serif;transform:scaleX(1.0045);transform-origin:0 0;">Cash Flow Statement, $</div>
<div class="t" style="left:126.0px;top:518.0px;font-size:18.6px;font-weight:700;color:#1a1a1a;font-family:'Liberation Sans', sans-serif;transform:scaleX(1.0016);transform-origin:0 0;">Cash Flow from Operating Activities</div>
<div class="t" style="left:139.5px;top:549.0px;font-size:16.0px;font-weight:400;color:#1b1b1b;font-family:'Liberation Sans', sans-serif;transform:scaleX(0.9294);transform-origin:0 0;">Cash Receipts</div>
<div class="t" style="right:1982.5px;top:551.0px;font-size:13.9px;font-weight:400;color:#1b1b1b;font-family:'Liberation Sans', sans-serif;">19,742</div>
<div class="t" style="right:1862.5px;top:551.0px;font-size:13.9px;font-weight:400;color:#1b1b1b;font-family:'Liberation Sans', sans-serif;">49,368</div>
<div class="t" style="right:1742.5px;top:551.0px;font-size:13.9px;font-weight:400;color:#1b1b1b;font-family:'Liberation Sans', sans-serif;">91,555</div>
<div class="t" style="right:1622.5px;top:551.0px;font-size:13.9px;font-weight:400;color:#1b1b1b;font-family:'Liberation Sans', sans-serif;">105,975</div>
<div class="t" style="right:1502.5px;top:551.0px;font-size:13.9px;font-weight:400;color:#1b1b1b;font-family:'Liberation Sans', sans-serif;">115,192</div>
<div class="t" style="right:1382.5px;top:551.0px;font-size:13.9px;font-weight:400;color:#1b1b1b;font-family:'Liberation Sans', sans-serif;">111,412</div>
<div class="t" style="right:1262.5px;top:551.0px;font-size:13.9px;font-weight:400;color:#1b1b1b;font-family:'Liberation Sans', sans-serif;">112,752</div>
<div class="t" style="right:1142.5px;top:551.0px;font-size:13.9px;font-weight:400;color:#1b1b1b;font-family:'Liberation Sans', sans-serif;">115,129</div>
<div class="t" style="right:1022.5px;top:551.0px;font-size:13.9px;font-weight:400;color:#1b1b1b;font-family:'Liberation Sans', sans-serif;">108,376</div>
<div class="t" style="right:902.5px;top:551.0px;font-size:13.9px;font-weight:400;color:#1b1b1b;font-family:'Liberation Sans', sans-serif;">111,657</div>
<div class="t" style="right:782.5px;top:551.0px;font-size:13.9px;font-weight:400;color:#1b1b1b;font-family:'Liberation Sans', sans-serif;">106,667</div>
<div class="t" style="right:662.5px;top:551.0px;font-size:13.9px;font-weight:400;color:#1b1b1b;font-family:'Liberation Sans', sans-serif;">102,971</div>
<div class="t" style="right:542.5px;top:551.0px;font-size:13.9px;font-weight:400;color:#1b1b1b;font-family:'Liberation Sans', sans-serif;">137,263</div>
<div class="t" style="right:422.5px;top:551.0px;font-size:13.9px;font-weight:400;color:#1b1b1b;font-family:'Liberation Sans', sans-serif;">152,753</div>
<div class="t" style="right:302.5px;top:551.0px;font-size:13.9px;font-weight:400;color:#1b1b1b;font-family:'Liberation Sans', sans-serif;">166,761</div>
<div class="t" style="right:182.5px;top:551.0px;font-size:13.9px;font-weight:400;color:#1b1b1b;font-family:'Liberation Sans', sans-serif;">167,218</div>
<div class="t" style="right:62.5px;top:551.0px;font-size:13.9px;font-weight:400;color:#1b1b1b;font-family:'Liberation Sans', sans-serif;">179,568</div>
<div class="t" style="left:139.5px;top:569.0px;font-size:16.0px;font-weight:400;color:#1b1b1b;font-family:'Liberation Sans', sans-serif;transform:scaleX(0.9448);transform-origin:0 0;">Cash Payments</div>
<div class="t" style="right:1977.0px;top:571.0px;font-size:13.9px;font-weight:400;color:#1b1b1b;font-family:'Liberation Sans', sans-serif;"><b class="p1">(</b>49,025<b class="p2">)</b></div>
<div class="t" style="right:1857.0px;top:571.0px;font-size:13.9px;font-weight:400;color:#1b1b1b;font-family:'Liberation Sans', sans-serif;"><b class="p1">(</b>89,171<b class="p2">)</b></div>
<div class="t" style="right:1737.0px;top:571.0px;font-size:13.9px;font-weight:400;color:#1b1b1b;font-family:'Liberation Sans', sans-serif;"><b class="p1">(</b>105,487<b class="p2">)</b></div>
<div class="t" style="right:1617.0px;top:571.0px;font-size:13.9px;font-weight:400;color:#1b1b1b;font-family:'Liberation Sans', sans-serif;"><b class="p1">(</b>99,598<b class="p2">)</b></div>
<div class="t" style="right:1497.0px;top:571.0px;font-size:13.9px;font-weight:400;color:#1b1b1b;font-family:'Liberation Sans', sans-serif;"><b class="p1">(</b>104,591<b class="p2">)</b></div>
<div class="t" style="right:1377.0px;top:571.0px;font-size:13.9px;font-weight:400;color:#1b1b1b;font-family:'Liberation Sans', sans-serif;"><b class="p1">(</b>99,574<b class="p2">)</b></div>
<div class="t" style="right:1257.0px;top:571.0px;font-size:13.9px;font-weight:400;color:#1b1b1b;font-family:'Liberation Sans', sans-serif;"><b class="p1">(</b>103,641<b class="p2">)</b></div>
<div class="t" style="right:1137.0px;top:571.0px;font-size:13.9px;font-weight:400;color:#1b1b1b;font-family:'Liberation Sans', sans-serif;"><b class="p1">(</b>102,520<b class="p2">)</b></div>
<div class="t" style="right:1017.0px;top:571.0px;font-size:13.9px;font-weight:400;color:#1b1b1b;font-family:'Liberation Sans', sans-serif;"><b class="p1">(</b>99,137<b class="p2">)</b></div>
<div class="t" style="right:897.0px;top:571.0px;font-size:13.9px;font-weight:400;color:#1b1b1b;font-family:'Liberation Sans', sans-serif;"><b class="p1">(</b>103,680<b class="p2">)</b></div>
<div class="t" style="right:777.0px;top:571.0px;font-size:13.9px;font-weight:400;color:#1b1b1b;font-family:'Liberation Sans', sans-serif;"><b class="p1">(</b>98,639<b class="p2">)</b></div>
<div class="t" style="right:657.0px;top:571.0px;font-size:13.9px;font-weight:400;color:#1b1b1b;font-family:'Liberation Sans', sans-serif;"><b class="p1">(</b>100,900<b class="p2">)</b></div>
<div class="t" style="right:537.0px;top:571.0px;font-size:13.9px;font-weight:400;color:#1b1b1b;font-family:'Liberation Sans', sans-serif;"><b class="p1">(</b>115,855<b class="p2">)</b></div>
<div class="t" style="right:417.0px;top:571.0px;font-size:13.9px;font-weight:400;color:#1b1b1b;font-family:'Liberation Sans', sans-serif;"><b class="p1">(</b>110,193<b class="p2">)</b></div>
<div class="t" style="right:297.0px;top:571.0px;font-size:13.9px;font-weight:400;color:#1b1b1b;font-family:'Liberation Sans', sans-serif;"><b class="p1">(</b>122,482<b class="p2">)</b></div>
<div class="t" style="right:177.0px;top:571.0px;font-size:13.9px;font-weight:400;color:#1b1b1b;font-family:'Liberation Sans', sans-serif;"><b class="p1">(</b>117,506<b class="p2">)</b></div>
<div class="t" style="right:57.0px;top:571.0px;font-size:13.9px;font-weight:400;color:#1b1b1b;font-family:'Liberation Sans', sans-serif;"><b class="p1">(</b>121,853<b class="p2">)</b></div>
<div class="t" style="left:139.5px;top:589.0px;font-size:16.0px;font-weight:400;color:#1b1b1b;font-family:'Liberation Sans', sans-serif;transform:scaleX(0.9753);transform-origin:0 0;">Interest Expense</div>
<div class="t" style="right:1977.0px;top:591.0px;font-size:13.9px;font-weight:400;color:#1b1b1b;font-family:'Liberation Sans', sans-serif;"><b class="p1">(</b>1,000<b class="p2">)</b></div>
<div class="t" style="right:1857.0px;top:591.0px;font-size:13.9px;font-weight:400;color:#1b1b1b;font-family:'Liberation Sans', sans-serif;"><b class="p1">(</b>1,000<b class="p2">)</b></div>
<div class="t" style="right:1737.0px;top:591.0px;font-size:13.9px;font-weight:400;color:#1b1b1b;font-family:'Liberation Sans', sans-serif;"><b class="p1">(</b>1,667<b class="p2">)</b></div>
<div class="t" style="right:1617.0px;top:591.0px;font-size:13.9px;font-weight:400;color:#1b1b1b;font-family:'Liberation Sans', sans-serif;"><b class="p1">(</b>1,656<b class="p2">)</b></div>
<div class="t" style="right:1497.0px;top:591.0px;font-size:13.9px;font-weight:400;color:#1b1b1b;font-family:'Liberation Sans', sans-serif;"><b class="p1">(</b>1,644<b class="p2">)</b></div>
<div class="t" style="right:1377.0px;top:591.0px;font-size:13.9px;font-weight:400;color:#1b1b1b;font-family:'Liberation Sans', sans-serif;"><b class="p1">(</b>1,633<b class="p2">)</b></div>
<div class="t" style="right:1257.0px;top:591.0px;font-size:13.9px;font-weight:400;color:#1b1b1b;font-family:'Liberation Sans', sans-serif;"><b class="p1">(</b>1,622<b class="p2">)</b></div>
<div class="t" style="right:1137.0px;top:591.0px;font-size:13.9px;font-weight:400;color:#1b1b1b;font-family:'Liberation Sans', sans-serif;"><b class="p1">(</b>1,611<b class="p2">)</b></div>
<div class="t" style="right:1017.0px;top:591.0px;font-size:13.9px;font-weight:400;color:#1b1b1b;font-family:'Liberation Sans', sans-serif;"><b class="p1">(</b>1,600<b class="p2">)</b></div>
<div class="t" style="right:897.0px;top:591.0px;font-size:13.9px;font-weight:400;color:#1b1b1b;font-family:'Liberation Sans', sans-serif;"><b class="p1">(</b>1,589<b class="p2">)</b></div>
<div class="t" style="right:777.0px;top:591.0px;font-size:13.9px;font-weight:400;color:#1b1b1b;font-family:'Liberation Sans', sans-serif;"><b class="p1">(</b>1,578<b class="p2">)</b></div>
<div class="t" style="right:657.0px;top:591.0px;font-size:13.9px;font-weight:400;color:#1b1b1b;font-family:'Liberation Sans', sans-serif;"><b class="p1">(</b>1,567<b class="p2">)</b></div>
<div class="t" style="right:537.0px;top:591.0px;font-size:13.9px;font-weight:400;color:#1b1b1b;font-family:'Liberation Sans', sans-serif;"><b class="p1">(</b>1,556<b class="p2">)</b></div>
<div class="t" style="right:417.0px;top:591.0px;font-size:13.9px;font-weight:400;color:#1b1b1b;font-family:'Liberation Sans', sans-serif;"><b class="p1">(</b>1,534<b class="p2">)</b></div>
<div class="t" style="right:297.0px;top:591.0px;font-size:13.9px;font-weight:400;color:#1b1b1b;font-family:'Liberation Sans', sans-serif;"><b class="p1">(</b>1,512<b class="p2">)</b></div>
<div class="t" style="right:177.0px;top:591.0px;font-size:13.9px;font-weight:400;color:#1b1b1b;font-family:'Liberation Sans', sans-serif;"><b class="p1">(</b>1,491<b class="p2">)</b></div>
<div class="t" style="right:57.0px;top:591.0px;font-size:13.9px;font-weight:400;color:#1b1b1b;font-family:'Liberation Sans', sans-serif;"><b class="p1">(</b>1,469<b class="p2">)</b></div>
<div class="t" style="left:139.5px;top:609.0px;font-size:16.0px;font-weight:400;color:#1b1b1b;font-family:'Liberation Sans', sans-serif;transform:scaleX(0.9832);transform-origin:0 0;">Corporate Tax Expense</div>
<div class="t" style="right:1982.0px;top:611.0px;font-size:13.9px;font-weight:400;color:#1b1b1b;font-family:'Liberation Sans', sans-serif;">-</div>
<div class="t" style="right:1862.0px;top:611.0px;font-size:13.9px;font-weight:400;color:#1b1b1b;font-family:'Liberation Sans', sans-serif;">-</div>
<div class="t" style="right:1742.0px;top:611.0px;font-size:13.9px;font-weight:400;color:#1b1b1b;font-family:'Liberation Sans', sans-serif;">-</div>
<div class="t" style="right:1622.0px;top:611.0px;font-size:13.9px;font-weight:400;color:#1b1b1b;font-family:'Liberation Sans', sans-serif;">-</div>
<div class="t" style="right:1502.0px;top:611.0px;font-size:13.9px;font-weight:400;color:#1b1b1b;font-family:'Liberation Sans', sans-serif;">-</div>
<div class="t" style="right:1382.0px;top:611.0px;font-size:13.9px;font-weight:400;color:#1b1b1b;font-family:'Liberation Sans', sans-serif;">-</div>
<div class="t" style="right:1262.0px;top:611.0px;font-size:13.9px;font-weight:400;color:#1b1b1b;font-family:'Liberation Sans', sans-serif;">-</div>
<div class="t" style="right:1142.0px;top:611.0px;font-size:13.9px;font-weight:400;color:#1b1b1b;font-family:'Liberation Sans', sans-serif;">-</div>
<div class="t" style="right:1022.0px;top:611.0px;font-size:13.9px;font-weight:400;color:#1b1b1b;font-family:'Liberation Sans', sans-serif;">-</div>
<div class="t" style="right:902.0px;top:611.0px;font-size:13.9px;font-weight:400;color:#1b1b1b;font-family:'Liberation Sans', sans-serif;">-</div>
<div class="t" style="right:782.0px;top:611.0px;font-size:13.9px;font-weight:400;color:#1b1b1b;font-family:'Liberation Sans', sans-serif;">-</div>
<div class="t" style="right:662.0px;top:611.0px;font-size:13.9px;font-weight:400;color:#1b1b1b;font-family:'Liberation Sans', sans-serif;">-</div>
<div class="t" style="right:537.0px;top:611.0px;font-size:13.9px;font-weight:400;color:#1b1b1b;font-family:'Liberation Sans', sans-serif;"><b class="p1">(</b>11,634<b class="p2">)</b></div>
<div class="t" style="right:417.0px;top:611.0px;font-size:13.9px;font-weight:400;color:#1b1b1b;font-family:'Liberation Sans', sans-serif;"><b class="p1">(</b>7,181<b class="p2">)</b></div>
<div class="t" style="right:297.0px;top:611.0px;font-size:13.9px;font-weight:400;color:#1b1b1b;font-family:'Liberation Sans', sans-serif;"><b class="p1">(</b>10,757<b class="p2">)</b></div>
<div class="t" style="right:177.0px;top:611.0px;font-size:13.9px;font-weight:400;color:#1b1b1b;font-family:'Liberation Sans', sans-serif;"><b class="p1">(</b>11,767<b class="p2">)</b></div>
<div class="t" style="right:57.0px;top:611.0px;font-size:13.9px;font-weight:400;color:#1b1b1b;font-family:'Liberation Sans', sans-serif;"><b class="p1">(</b>13,514<b class="p2">)</b></div>
<div class="t" style="left:146.6px;top:627.0px;font-size:16.3px;font-weight:700;color:#fff;font-family:'Liberation Sans', sans-serif;-webkit-text-stroke:0.25px #fff;transform:scaleX(1.0481);transform-origin:0 0;">Net Cash Flow from Operating Activities</div>
<div class="t" style="right:1978.0px;top:628.0px;font-size:17.4px;font-weight:700;color:#fff;font-family:'Liberation Sans', sans-serif;letter-spacing:0.45px;-webkit-text-stroke:0.3px #fff">(30,284)</div>
<div class="t" style="right:1858.0px;top:628.0px;font-size:17.4px;font-weight:700;color:#fff;font-family:'Liberation Sans', sans-serif;letter-spacing:0.45px;-webkit-text-stroke:0.3px #fff">(40,804)</div>
<div class="t" style="right:1738.0px;top:628.0px;font-size:17.4px;font-weight:700;color:#fff;font-family:'Liberation Sans', sans-serif;letter-spacing:0.45px;-webkit-text-stroke:0.3px #fff">(15,599)</div>
<div class="t" style="right:1625.2px;top:628.0px;font-size:17.4px;font-weight:700;color:#fff;font-family:'Liberation Sans', sans-serif;letter-spacing:0.45px;-webkit-text-stroke:0.3px #fff">4,721</div>
<div class="t" style="right:1505.2px;top:628.0px;font-size:17.4px;font-weight:700;color:#fff;font-family:'Liberation Sans', sans-serif;letter-spacing:0.45px;-webkit-text-stroke:0.3px #fff">8,956</div>
<div class="t" style="right:1385.2px;top:628.0px;font-size:17.4px;font-weight:700;color:#fff;font-family:'Liberation Sans', sans-serif;letter-spacing:0.45px;-webkit-text-stroke:0.3px #fff">10,205</div>
<div class="t" style="right:1265.2px;top:628.0px;font-size:17.4px;font-weight:700;color:#fff;font-family:'Liberation Sans', sans-serif;letter-spacing:0.45px;-webkit-text-stroke:0.3px #fff">7,489</div>
<div class="t" style="right:1145.2px;top:628.0px;font-size:17.4px;font-weight:700;color:#fff;font-family:'Liberation Sans', sans-serif;letter-spacing:0.45px;-webkit-text-stroke:0.3px #fff">10,998</div>
<div class="t" style="right:1025.2px;top:628.0px;font-size:17.4px;font-weight:700;color:#fff;font-family:'Liberation Sans', sans-serif;letter-spacing:0.45px;-webkit-text-stroke:0.3px #fff">7,638</div>
<div class="t" style="right:905.2px;top:628.0px;font-size:17.4px;font-weight:700;color:#fff;font-family:'Liberation Sans', sans-serif;letter-spacing:0.45px;-webkit-text-stroke:0.3px #fff">6,388</div>
<div class="t" style="right:785.2px;top:628.0px;font-size:17.4px;font-weight:700;color:#fff;font-family:'Liberation Sans', sans-serif;letter-spacing:0.45px;-webkit-text-stroke:0.3px #fff">6,451</div>
<div class="t" style="right:665.2px;top:628.0px;font-size:17.4px;font-weight:700;color:#fff;font-family:'Liberation Sans', sans-serif;letter-spacing:0.45px;-webkit-text-stroke:0.3px #fff">504</div>
<div class="t" style="right:545.2px;top:628.0px;font-size:17.4px;font-weight:700;color:#fff;font-family:'Liberation Sans', sans-serif;letter-spacing:0.45px;-webkit-text-stroke:0.3px #fff">8,218</div>
<div class="t" style="right:425.2px;top:628.0px;font-size:17.4px;font-weight:700;color:#fff;font-family:'Liberation Sans', sans-serif;letter-spacing:0.45px;-webkit-text-stroke:0.3px #fff">33,846</div>
<div class="t" style="right:305.2px;top:628.0px;font-size:17.4px;font-weight:700;color:#fff;font-family:'Liberation Sans', sans-serif;letter-spacing:0.45px;-webkit-text-stroke:0.3px #fff">32,010</div>
<div class="t" style="right:185.2px;top:628.0px;font-size:17.4px;font-weight:700;color:#fff;font-family:'Liberation Sans', sans-serif;letter-spacing:0.45px;-webkit-text-stroke:0.3px #fff">36,455</div>
<div class="t" style="right:65.2px;top:628.0px;font-size:17.4px;font-weight:700;color:#fff;font-family:'Liberation Sans', sans-serif;letter-spacing:0.45px;-webkit-text-stroke:0.3px #fff">42,732</div>
<div class="t" style="left:126.6px;top:666.0px;font-size:18.6px;font-weight:700;color:#1a1a1a;font-family:'Liberation Sans', sans-serif;transform:scaleX(1.0080);transform-origin:0 0;">Cash Flow from Investing Activities</div>
<div class="t" style="left:139.5px;top:693.0px;font-size:16.0px;font-weight:400;color:#1b1b1b;font-family:'Liberation Sans', sans-serif;transform:scaleX(0.9819);transform-origin:0 0;">Capital Expenditure</div>
<div class="t" style="right:1977.0px;top:695.0px;font-size:13.9px;font-weight:400;color:#1b1b1b;font-family:'Liberation Sans', sans-serif;"><b class="p1">(</b>155,000<b class="p2">)</b></div>
<div class="t" style="right:1857.0px;top:695.0px;font-size:13.9px;font-weight:400;color:#1b1b1b;font-family:'Liberation Sans', sans-serif;"><b class="p1">(</b>161,667<b class="p2">)</b></div>
<div class="t" style="right:1737.0px;top:695.0px;font-size:13.9px;font-weight:400;color:#1b1b1b;font-family:'Liberation Sans', sans-serif;"><b class="p1">(</b>169,667<b class="p2">)</b></div>
<div class="t" style="right:1617.0px;top:695.0px;font-size:13.9px;font-weight:400;color:#1b1b1b;font-family:'Liberation Sans', sans-serif;"><b class="p1">(</b>43,667<b class="p2">)</b></div>
<div class="t" style="right:1497.0px;top:695.0px;font-size:13.9px;font-weight:400;color:#1b1b1b;font-family:'Liberation Sans', sans-serif;"><b class="p1">(</b>37,000<b class="p2">)</b></div>
<div class="t" style="right:1377.0px;top:695.0px;font-size:13.9px;font-weight:400;color:#1b1b1b;font-family:'Liberation Sans', sans-serif;"><b class="p1">(</b>28,000<b class="p2">)</b></div>
<div class="t" style="right:1262.0px;top:695.0px;font-size:13.9px;font-weight:400;color:#1b1b1b;font-family:'Liberation Sans', sans-serif;">-</div>
<div class="t" style="right:1142.0px;top:695.0px;font-size:13.9px;font-weight:400;color:#1b1b1b;font-family:'Liberation Sans', sans-serif;">-</div>
<div class="t" style="right:1022.0px;top:695.0px;font-size:13.9px;font-weight:400;color:#1b1b1b;font-family:'Liberation Sans', sans-serif;">-</div>
<div class="t" style="right:902.0px;top:695.0px;font-size:13.9px;font-weight:400;color:#1b1b1b;font-family:'Liberation Sans', sans-serif;">-</div>
<div class="t" style="right:782.0px;top:695.0px;font-size:13.9px;font-weight:400;color:#1b1b1b;font-family:'Liberation Sans', sans-serif;">-</div>
<div class="t" style="right:662.0px;top:695.0px;font-size:13.9px;font-weight:400;color:#1b1b1b;font-family:'Liberation Sans', sans-serif;">-</div>
<div class="t" style="right:542.0px;top:695.0px;font-size:13.9px;font-weight:400;color:#1b1b1b;font-family:'Liberation Sans', sans-serif;">-</div>
<div class="t" style="right:422.0px;top:695.0px;font-size:13.9px;font-weight:400;color:#1b1b1b;font-family:'Liberation Sans', sans-serif;">-</div>
<div class="t" style="right:302.0px;top:695.0px;font-size:13.9px;font-weight:400;color:#1b1b1b;font-family:'Liberation Sans', sans-serif;">-</div>
<div class="t" style="right:182.0px;top:695.0px;font-size:13.9px;font-weight:400;color:#1b1b1b;font-family:'Liberation Sans', sans-serif;">-</div>
<div class="t" style="right:62.0px;top:695.0px;font-size:13.9px;font-weight:400;color:#1b1b1b;font-family:'Liberation Sans', sans-serif;">-</div>
<div class="t" style="left:146.6px;top:715.0px;font-size:16.3px;font-weight:700;color:#fff;font-family:'Liberation Sans', sans-serif;-webkit-text-stroke:0.25px #fff;transform:scaleX(1.0504);transform-origin:0 0;">Net Cash Flow from Investing Activities</div>
<div class="t" style="right:1978.0px;top:716.0px;font-size:17.4px;font-weight:700;color:#fff;font-family:'Liberation Sans', sans-serif;letter-spacing:0.45px;-webkit-text-stroke:0.3px #fff">(155,000)</div>
<div class="t" style="right:1858.0px;top:716.0px;font-size:17.4px;font-weight:700;color:#fff;font-family:'Liberation Sans', sans-serif;letter-spacing:0.45px;-webkit-text-stroke:0.3px #fff">(161,667)</div>
<div class="t" style="right:1738.0px;top:716.0px;font-size:17.4px;font-weight:700;color:#fff;font-family:'Liberation Sans', sans-serif;letter-spacing:0.45px;-webkit-text-stroke:0.3px #fff">(169,667)</div>
<div class="t" style="right:1618.0px;top:716.0px;font-size:17.4px;font-weight:700;color:#fff;font-family:'Liberation Sans', sans-serif;letter-spacing:0.45px;-webkit-text-stroke:0.3px #fff">(43,667)</div>
<div class="t" style="right:1498.0px;top:716.0px;font-size:17.4px;font-weight:700;color:#fff;font-family:'Liberation Sans', sans-serif;letter-spacing:0.45px;-webkit-text-stroke:0.3px #fff">(37,000)</div>
<div class="t" style="right:1378.0px;top:716.0px;font-size:17.4px;font-weight:700;color:#fff;font-family:'Liberation Sans', sans-serif;letter-spacing:0.45px;-webkit-text-stroke:0.3px #fff">(28,000)</div>
<div class="t" style="right:1266.0px;top:716.0px;font-size:17.4px;font-weight:400;color:#fff;font-family:'Liberation Sans', sans-serif;letter-spacing:0.45px">-</div>
<div class="t" style="right:1146.0px;top:716.0px;font-size:17.4px;font-weight:400;color:#fff;font-family:'Liberation Sans', sans-serif;letter-spacing:0.45px">-</div>
<div class="t" style="right:1026.0px;top:716.0px;font-size:17.4px;font-weight:400;color:#fff;font-family:'Liberation Sans', sans-serif;letter-spacing:0.45px">-</div>
<div class="t" style="right:906.0px;top:716.0px;font-size:17.4px;font-weight:400;color:#fff;font-family:'Liberation Sans', sans-serif;letter-spacing:0.45px">-</div>
<div class="t" style="right:786.0px;top:716.0px;font-size:17.4px;font-weight:400;color:#fff;font-family:'Liberation Sans', sans-serif;letter-spacing:0.45px">-</div>
<div class="t" style="right:666.0px;top:716.0px;font-size:17.4px;font-weight:400;color:#fff;font-family:'Liberation Sans', sans-serif;letter-spacing:0.45px">-</div>
<div class="t" style="right:546.0px;top:716.0px;font-size:17.4px;font-weight:400;color:#fff;font-family:'Liberation Sans', sans-serif;letter-spacing:0.45px">-</div>
<div class="t" style="right:426.0px;top:716.0px;font-size:17.4px;font-weight:400;color:#fff;font-family:'Liberation Sans', sans-serif;letter-spacing:0.45px">-</div>
<div class="t" style="right:306.0px;top:716.0px;font-size:17.4px;font-weight:400;color:#fff;font-family:'Liberation Sans', sans-serif;letter-spacing:0.45px">-</div>
<div class="t" style="right:186.0px;top:716.0px;font-size:17.4px;font-weight:400;color:#fff;font-family:'Liberation Sans', sans-serif;letter-spacing:0.45px">-</div>
<div class="t" style="right:66.0px;top:716.0px;font-size:17.4px;font-weight:400;color:#fff;font-family:'Liberation Sans', sans-serif;letter-spacing:0.45px">-</div>
<div class="t" style="left:126.6px;top:753.0px;font-size:18.6px;font-weight:700;color:#1a1a1a;font-family:'Liberation Sans', sans-serif;transform:scaleX(0.9935);transform-origin:0 0;">Cash Flow from Financing Activities</div>
<div class="t" style="left:139.5px;top:781.0px;font-size:16.0px;font-weight:400;color:#1b1b1b;font-family:'Liberation Sans', sans-serif;transform:scaleX(0.9821);transform-origin:0 0;">Debts Drawdowns</div>
<div class="t" style="right:1982.5px;top:782.0px;font-size:13.9px;font-weight:400;color:#1b1b1b;font-family:'Liberation Sans', sans-serif;">200,000</div>
<div class="t" style="right:1862.0px;top:782.0px;font-size:13.9px;font-weight:400;color:#1b1b1b;font-family:'Liberation Sans', sans-serif;">-</div>
<div class="t" style="right:1742.5px;top:782.0px;font-size:13.9px;font-weight:400;color:#1b1b1b;font-family:'Liberation Sans', sans-serif;">100,000</div>
<div class="t" style="right:1622.0px;top:782.0px;font-size:13.9px;font-weight:400;color:#1b1b1b;font-family:'Liberation Sans', sans-serif;">-</div>
<div class="t" style="right:1502.0px;top:782.0px;font-size:13.9px;font-weight:400;color:#1b1b1b;font-family:'Liberation Sans', sans-serif;">-</div>
<div class="t" style="right:1382.0px;top:782.0px;font-size:13.9px;font-weight:400;color:#1b1b1b;font-family:'Liberation Sans', sans-serif;">-</div>
<div class="t" style="right:1262.0px;top:782.0px;font-size:13.9px;font-weight:400;color:#1b1b1b;font-family:'Liberation Sans', sans-serif;">-</div>
<div class="t" style="right:1142.0px;top:782.0px;font-size:13.9px;font-weight:400;color:#1b1b1b;font-family:'Liberation Sans', sans-serif;">-</div>
<div class="t" style="right:1022.0px;top:782.0px;font-size:13.9px;font-weight:400;color:#1b1b1b;font-family:'Liberation Sans', sans-serif;">-</div>
<div class="t" style="right:902.0px;top:782.0px;font-size:13.9px;font-weight:400;color:#1b1b1b;font-family:'Liberation Sans', sans-serif;">-</div>
<div class="t" style="right:782.0px;top:782.0px;font-size:13.9px;font-weight:400;color:#1b1b1b;font-family:'Liberation Sans', sans-serif;">-</div>
<div class="t" style="right:662.0px;top:782.0px;font-size:13.9px;font-weight:400;color:#1b1b1b;font-family:'Liberation Sans', sans-serif;">-</div>
<div class="t" style="right:542.0px;top:782.0px;font-size:13.9px;font-weight:400;color:#1b1b1b;font-family:'Liberation Sans', sans-serif;">-</div>
<div class="t" style="right:422.0px;top:782.0px;font-size:13.9px;font-weight:400;color:#1b1b1b;font-family:'Liberation Sans', sans-serif;">-</div>
<div class="t" style="right:302.0px;top:782.0px;font-size:13.9px;font-weight:400;color:#1b1b1b;font-family:'Liberation Sans', sans-serif;">-</div>
<div class="t" style="right:182.0px;top:782.0px;font-size:13.9px;font-weight:400;color:#1b1b1b;font-family:'Liberation Sans', sans-serif;">-</div>
<div class="t" style="right:62.0px;top:782.0px;font-size:13.9px;font-weight:400;color:#1b1b1b;font-family:'Liberation Sans', sans-serif;">-</div>
<div class="t" style="left:139.5px;top:801.0px;font-size:16.0px;font-weight:400;color:#1b1b1b;font-family:'Liberation Sans', sans-serif;transform:scaleX(0.9592);transform-origin:0 0;">Debts Repayments</div>
<div class="t" style="right:1982.0px;top:802.0px;font-size:13.9px;font-weight:400;color:#1b1b1b;font-family:'Liberation Sans', sans-serif;">-</div>
<div class="t" style="right:1862.0px;top:802.0px;font-size:13.9px;font-weight:400;color:#1b1b1b;font-family:'Liberation Sans', sans-serif;">-</div>
<div class="t" style="right:1737.0px;top:802.0px;font-size:13.9px;font-weight:400;color:#1b1b1b;font-family:'Liberation Sans', sans-serif;"><b class="p1">(</b>1,667<b class="p2">)</b></div>
<div class="t" style="right:1617.0px;top:802.0px;font-size:13.9px;font-weight:400;color:#1b1b1b;font-family:'Liberation Sans', sans-serif;"><b class="p1">(</b>1,667<b class="p2">)</b></div>
<div class="t" style="right:1497.0px;top:802.0px;font-size:13.9px;font-weight:400;color:#1b1b1b;font-family:'Liberation Sans', sans-serif;"><b class="p1">(</b>1,667<b class="p2">)</b></div>
<div class="t" style="right:1377.0px;top:802.0px;font-size:13.9px;font-weight:400;color:#1b1b1b;font-family:'Liberation Sans', sans-serif;"><b class="p1">(</b>1,667<b class="p2">)</b></div>
<div class="t" style="right:1257.0px;top:802.0px;font-size:13.9px;font-weight:400;color:#1b1b1b;font-family:'Liberation Sans', sans-serif;"><b class="p1">(</b>1,667<b class="p2">)</b></div>
<div class="t" style="right:1137.0px;top:802.0px;font-size:13.9px;font-weight:400;color:#1b1b1b;font-family:'Liberation Sans', sans-serif;"><b class="p1">(</b>1,667<b class="p2">)</b></div>
<div class="t" style="right:1017.0px;top:802.0px;font-size:13.9px;font-weight:400;color:#1b1b1b;font-family:'Liberation Sans', sans-serif;"><b class="p1">(</b>1,667<b class="p2">)</b></div>
<div class="t" style="right:897.0px;top:802.0px;font-size:13.9px;font-weight:400;color:#1b1b1b;font-family:'Liberation Sans', sans-serif;"><b class="p1">(</b>1,667<b class="p2">)</b></div>
<div class="t" style="right:777.0px;top:802.0px;font-size:13.9px;font-weight:400;color:#1b1b1b;font-family:'Liberation Sans', sans-serif;"><b class="p1">(</b>1,667<b class="p2">)</b></div>
<div class="t" style="right:657.0px;top:802.0px;font-size:13.9px;font-weight:400;color:#1b1b1b;font-family:'Liberation Sans', sans-serif;"><b class="p1">(</b>1,667<b class="p2">)</b></div>
<div class="t" style="right:537.0px;top:802.0px;font-size:13.9px;font-weight:400;color:#1b1b1b;font-family:'Liberation Sans', sans-serif;"><b class="p1">(</b>3,770<b class="p2">)</b></div>
<div class="t" style="right:417.0px;top:802.0px;font-size:13.9px;font-weight:400;color:#1b1b1b;font-family:'Liberation Sans', sans-serif;"><b class="p1">(</b>3,780<b class="p2">)</b></div>
<div class="t" style="right:297.0px;top:802.0px;font-size:13.9px;font-weight:400;color:#1b1b1b;font-family:'Liberation Sans', sans-serif;"><b class="p1">(</b>3,791<b class="p2">)</b></div>
<div class="t" style="right:177.0px;top:802.0px;font-size:13.9px;font-weight:400;color:#1b1b1b;font-family:'Liberation Sans', sans-serif;"><b class="p1">(</b>3,801<b class="p2">)</b></div>
<div class="t" style="right:57.0px;top:802.0px;font-size:13.9px;font-weight:400;color:#1b1b1b;font-family:'Liberation Sans', sans-serif;"><b class="p1">(</b>3,812<b class="p2">)</b></div>
<div class="t" style="left:139.5px;top:820.0px;font-size:16.0px;font-weight:400;color:#1b1b1b;font-family:'Liberation Sans', sans-serif;transform:scaleX(0.9676);transform-origin:0 0;">Equity Raisings</div>
<div class="t" style="right:1982.5px;top:822.0px;font-size:13.9px;font-weight:400;color:#1b1b1b;font-family:'Liberation Sans', sans-serif;">700,000</div>
<div class="t" style="right:1862.0px;top:822.0px;font-size:13.9px;font-weight:400;color:#1b1b1b;font-family:'Liberation Sans', sans-serif;">-</div>
<div class="t" style="right:1742.0px;top:822.0px;font-size:13.9px;font-weight:400;color:#1b1b1b;font-family:'Liberation Sans', sans-serif;">-</div>
<div class="t" style="right:1622.0px;top:822.0px;font-size:13.9px;font-weight:400;color:#1b1b1b;font-family:'Liberation Sans', sans-serif;">-</div>
<div class="t" style="right:1502.0px;top:822.0px;font-size:13.9px;font-weight:400;color:#1b1b1b;font-family:'Liberation Sans', sans-serif;">-</div>
<div class="t" style="right:1382.0px;top:822.0px;font-size:13.9px;font-weight:400;color:#1b1b1b;font-family:'Liberation Sans', sans-serif;">-</div>
<div class="t" style="right:1262.0px;top:822.0px;font-size:13.9px;font-weight:400;color:#1b1b1b;font-family:'Liberation Sans', sans-serif;">-</div>
<div class="t" style="right:1142.0px;top:822.0px;font-size:13.9px;font-weight:400;color:#1b1b1b;font-family:'Liberation Sans', sans-serif;">-</div>
<div class="t" style="right:1022.0px;top:822.0px;font-size:13.9px;font-weight:400;color:#1b1b1b;font-family:'Liberation Sans', sans-serif;">-</div>
<div class="t" style="right:902.0px;top:822.0px;font-size:13.9px;font-weight:400;color:#1b1b1b;font-family:'Liberation Sans', sans-serif;">-</div>
<div class="t" style="right:782.0px;top:822.0px;font-size:13.9px;font-weight:400;color:#1b1b1b;font-family:'Liberation Sans', sans-serif;">-</div>
<div class="t" style="right:662.0px;top:822.0px;font-size:13.9px;font-weight:400;color:#1b1b1b;font-family:'Liberation Sans', sans-serif;">-</div>
<div class="t" style="right:542.0px;top:822.0px;font-size:13.9px;font-weight:400;color:#1b1b1b;font-family:'Liberation Sans', sans-serif;">-</div>
<div class="t" style="right:422.0px;top:822.0px;font-size:13.9px;font-weight:400;color:#1b1b1b;font-family:'Liberation Sans', sans-serif;">-</div>
<div class="t" style="right:302.0px;top:822.0px;font-size:13.9px;font-weight:400;color:#1b1b1b;font-family:'Liberation Sans', sans-serif;">-</div>
<div class="t" style="right:182.0px;top:822.0px;font-size:13.9px;font-weight:400;color:#1b1b1b;font-family:'Liberation Sans', sans-serif;">-</div>
<div class="t" style="right:62.0px;top:822.0px;font-size:13.9px;font-weight:400;color:#1b1b1b;font-family:'Liberation Sans', sans-serif;">-</div>
<div class="t" style="left:139.5px;top:840.0px;font-size:16.0px;font-weight:400;color:#1b1b1b;font-family:'Liberation Sans', sans-serif;transform:scaleX(0.9579);transform-origin:0 0;">Equity Buybacks</div>
<div class="t" style="right:1982.0px;top:842.0px;font-size:13.9px;font-weight:400;color:#1b1b1b;font-family:'Liberation Sans', sans-serif;">-</div>
<div class="t" style="right:1862.0px;top:842.0px;font-size:13.9px;font-weight:400;color:#1b1b1b;font-family:'Liberation Sans', sans-serif;">-</div>
<div class="t" style="right:1742.0px;top:842.0px;font-size:13.9px;font-weight:400;color:#1b1b1b;font-family:'Liberation Sans', sans-serif;">-</div>
<div class="t" style="right:1622.0px;top:842.0px;font-size:13.9px;font-weight:400;color:#1b1b1b;font-family:'Liberation Sans', sans-serif;">-</div>
<div class="t" style="right:1502.0px;top:842.0px;font-size:13.9px;font-weight:400;color:#1b1b1b;font-family:'Liberation Sans', sans-serif;">-</div>
<div class="t" style="right:1382.0px;top:842.0px;font-size:13.9px;font-weight:400;color:#1b1b1b;font-family:'Liberation Sans', sans-serif;">-</div>
<div class="t" style="right:1262.0px;top:842.0px;font-size:13.9px;font-weight:400;color:#1b1b1b;font-family:'Liberation Sans', sans-serif;">-</div>
<div class="t" style="right:1142.0px;top:842.0px;font-size:13.9px;font-weight:400;color:#1b1b1b;font-family:'Liberation Sans', sans-serif;">-</div>
<div class="t" style="right:1022.0px;top:842.0px;font-size:13.9px;font-weight:400;color:#1b1b1b;font-family:'Liberation Sans', sans-serif;">-</div>
<div class="t" style="right:902.0px;top:842.0px;font-size:13.9px;font-weight:400;color:#1b1b1b;font-family:'Liberation Sans', sans-serif;">-</div>
<div class="t" style="right:782.0px;top:842.0px;font-size:13.9px;font-weight:400;color:#1b1b1b;font-family:'Liberation Sans', sans-serif;">-</div>
<div class="t" style="right:662.0px;top:842.0px;font-size:13.9px;font-weight:400;color:#1b1b1b;font-family:'Liberation Sans', sans-serif;">-</div>
<div class="t" style="right:542.0px;top:842.0px;font-size:13.9px;font-weight:400;color:#1b1b1b;font-family:'Liberation Sans', sans-serif;">-</div>
<div class="t" style="right:422.0px;top:842.0px;font-size:13.9px;font-weight:400;color:#1b1b1b;font-family:'Liberation Sans', sans-serif;">-</div>
<div class="t" style="right:302.0px;top:842.0px;font-size:13.9px;font-weight:400;color:#1b1b1b;font-family:'Liberation Sans', sans-serif;">-</div>
<div class="t" style="right:182.0px;top:842.0px;font-size:13.9px;font-weight:400;color:#1b1b1b;font-family:'Liberation Sans', sans-serif;">-</div>
<div class="t" style="right:62.0px;top:842.0px;font-size:13.9px;font-weight:400;color:#1b1b1b;font-family:'Liberation Sans', sans-serif;">-</div>
<div class="t" style="left:139.5px;top:860.0px;font-size:16.0px;font-weight:400;color:#1b1b1b;font-family:'Liberation Sans', sans-serif;transform:scaleX(0.9707);transform-origin:0 0;">Dividends Paid</div>
<div class="t" style="right:1982.0px;top:862.0px;font-size:13.9px;font-weight:400;color:#1b1b1b;font-family:'Liberation Sans', sans-serif;">-</div>
<div class="t" style="right:1862.0px;top:862.0px;font-size:13.9px;font-weight:400;color:#1b1b1b;font-family:'Liberation Sans', sans-serif;">-</div>
<div class="t" style="right:1742.0px;top:862.0px;font-size:13.9px;font-weight:400;color:#1b1b1b;font-family:'Liberation Sans', sans-serif;">-</div>
<div class="t" style="right:1622.0px;top:862.0px;font-size:13.9px;font-weight:400;color:#1b1b1b;font-family:'Liberation Sans', sans-serif;">-</div>
<div class="t" style="right:1502.0px;top:862.0px;font-size:13.9px;font-weight:400;color:#1b1b1b;font-family:'Liberation Sans', sans-serif;">-</div>
<div class="t" style="right:1382.0px;top:862.0px;font-size:13.9px;font-weight:400;color:#1b1b1b;font-family:'Liberation Sans', sans-serif;">-</div>
<div class="t" style="right:1262.0px;top:862.0px;font-size:13.9px;font-weight:400;color:#1b1b1b;font-family:'Liberation Sans', sans-serif;">-</div>
<div class="t" style="right:1142.0px;top:862.0px;font-size:13.9px;font-weight:400;color:#1b1b1b;font-family:'Liberation Sans', sans-serif;">-</div>
<div class="t" style="right:1022.0px;top:862.0px;font-size:13.9px;font-weight:400;color:#1b1b1b;font-family:'Liberation Sans', sans-serif;">-</div>
<div class="t" style="right:902.0px;top:862.0px;font-size:13.9px;font-weight:400;color:#1b1b1b;font-family:'Liberation Sans', sans-serif;">-</div>
<div class="t" style="right:782.0px;top:862.0px;font-size:13.9px;font-weight:400;color:#1b1b1b;font-family:'Liberation Sans', sans-serif;">-</div>
<div class="t" style="right:662.0px;top:862.0px;font-size:13.9px;font-weight:400;color:#1b1b1b;font-family:'Liberation Sans', sans-serif;">-</div>
<div class="t" style="right:542.0px;top:862.0px;font-size:13.9px;font-weight:400;color:#1b1b1b;font-family:'Liberation Sans', sans-serif;">-</div>
<div class="t" style="right:422.0px;top:862.0px;font-size:13.9px;font-weight:400;color:#1b1b1b;font-family:'Liberation Sans', sans-serif;">-</div>
<div class="t" style="right:302.0px;top:862.0px;font-size:13.9px;font-weight:400;color:#1b1b1b;font-family:'Liberation Sans', sans-serif;">-</div>
<div class="t" style="right:182.0px;top:862.0px;font-size:13.9px;font-weight:400;color:#1b1b1b;font-family:'Liberation Sans', sans-serif;">-</div>
<div class="t" style="right:62.0px;top:862.0px;font-size:13.9px;font-weight:400;color:#1b1b1b;font-family:'Liberation Sans', sans-serif;">-</div>
<div class="t" style="left:146.3px;top:880.0px;font-size:16.3px;font-weight:700;color:#fff;font-family:'Liberation Sans', sans-serif;-webkit-text-stroke:0.25px #fff;transform:scaleX(1.0356);transform-origin:0 0;">Net Cash Flow from Financing Activities</div>
<div class="t" style="right:1985.2px;top:881.0px;font-size:17.4px;font-weight:700;color:#fff;font-family:'Liberation Sans', sans-serif;letter-spacing:0.45px;-webkit-text-stroke:0.3px #fff">900,000</div>
<div class="t" style="right:1866.0px;top:881.0px;font-size:17.4px;font-weight:400;color:#fff;font-family:'Liberation Sans', sans-serif;letter-spacing:0.45px">-</div>
<div class="t" style="right:1745.2px;top:881.0px;font-size:17.4px;font-weight:700;color:#fff;font-family:'Liberation Sans', sans-serif;letter-spacing:0.45px;-webkit-text-stroke:0.3px #fff">98,333</div>
<div class="t" style="right:1618.0px;top:881.0px;font-size:17.4px;font-weight:700;color:#fff;font-family:'Liberation Sans', sans-serif;letter-spacing:0.45px;-webkit-text-stroke:0.3px #fff">(1,667)</div>
<div class="t" style="right:1498.0px;top:881.0px;font-size:17.4px;font-weight:700;color:#fff;font-family:'Liberation Sans', sans-serif;letter-spacing:0.45px;-webkit-text-stroke:0.3px #fff">(1,667)</div>
<div class="t" style="right:1378.0px;top:881.0px;font-size:17.4px;font-weight:700;color:#fff;font-family:'Liberation Sans', sans-serif;letter-spacing:0.45px;-webkit-text-stroke:0.3px #fff">(1,667)</div>
<div class="t" style="right:1258.0px;top:881.0px;font-size:17.4px;font-weight:700;color:#fff;font-family:'Liberation Sans', sans-serif;letter-spacing:0.45px;-webkit-text-stroke:0.3px #fff">(1,667)</div>
<div class="t" style="right:1138.0px;top:881.0px;font-size:17.4px;font-weight:700;color:#fff;font-family:'Liberation Sans', sans-serif;letter-spacing:0.45px;-webkit-text-stroke:0.3px #fff">(1,667)</div>
<div class="t" style="right:1018.0px;top:881.0px;font-size:17.4px;font-weight:700;color:#fff;font-family:'Liberation Sans', sans-serif;letter-spacing:0.45px;-webkit-text-stroke:0.3px #fff">(1,667)</div>
<div class="t" style="right:898.0px;top:881.0px;font-size:17.4px;font-weight:700;color:#fff;font-family:'Liberation Sans', sans-serif;letter-spacing:0.45px;-webkit-text-stroke:0.3px #fff">(1,667)</div>
<div class="t" style="right:778.0px;top:881.0px;font-size:17.4px;font-weight:700;color:#fff;font-family:'Liberation Sans', sans-serif;letter-spacing:0.45px;-webkit-text-stroke:0.3px #fff">(1,667)</div>
<div class="t" style="right:658.0px;top:881.0px;font-size:17.4px;font-weight:700;color:#fff;font-family:'Liberation Sans', sans-serif;letter-spacing:0.45px;-webkit-text-stroke:0.3px #fff">(1,667)</div>
<div class="t" style="right:538.0px;top:881.0px;font-size:17.4px;font-weight:700;color:#fff;font-family:'Liberation Sans', sans-serif;letter-spacing:0.45px;-webkit-text-stroke:0.3px #fff">(3,770)</div>
<div class="t" style="right:418.0px;top:881.0px;font-size:17.4px;font-weight:700;color:#fff;font-family:'Liberation Sans', sans-serif;letter-spacing:0.45px;-webkit-text-stroke:0.3px #fff">(3,780)</div>
<div class="t" style="right:298.0px;top:881.0px;font-size:17.4px;font-weight:700;color:#fff;font-family:'Liberation Sans', sans-serif;letter-spacing:0.45px;-webkit-text-stroke:0.3px #fff">(3,791)</div>
<div class="t" style="right:178.0px;top:881.0px;font-size:17.4px;font-weight:700;color:#fff;font-family:'Liberation Sans', sans-serif;letter-spacing:0.45px;-webkit-text-stroke:0.3px #fff">(3,801)</div>
<div class="t" style="right:58.0px;top:881.0px;font-size:17.4px;font-weight:700;color:#fff;font-family:'Liberation Sans', sans-serif;letter-spacing:0.45px;-webkit-text-stroke:0.3px #fff">(3,812)</div>
<div class="t" style="left:146.3px;top:917.0px;font-size:16.3px;font-weight:700;color:#fff;font-family:'Liberation Sans', sans-serif;-webkit-text-stroke:0.25px #fff;transform:scaleX(1.0699);transform-origin:0 0;">Net Increase/(Decrease) in Cash Held</div>
<div class="t" style="right:1985.2px;top:918.0px;font-size:17.4px;font-weight:700;color:#fff;font-family:'Liberation Sans', sans-serif;letter-spacing:0.45px;-webkit-text-stroke:0.3px #fff">714,716</div>
<div class="t" style="right:1858.0px;top:918.0px;font-size:17.4px;font-weight:700;color:#fff;font-family:'Liberation Sans', sans-serif;letter-spacing:0.45px;-webkit-text-stroke:0.3px #fff">(202,470)</div>
<div class="t" style="right:1738.0px;top:918.0px;font-size:17.4px;font-weight:700;color:#fff;font-family:'Liberation Sans', sans-serif;letter-spacing:0.45px;-webkit-text-stroke:0.3px #fff">(86,933)</div>
<div class="t" style="right:1618.0px;top:918.0px;font-size:17.4px;font-weight:700;color:#fff;font-family:'Liberation Sans', sans-serif;letter-spacing:0.45px;-webkit-text-stroke:0.3px #fff">(40,612)</div>
<div class="t" style="right:1498.0px;top:918.0px;font-size:17.4px;font-weight:700;color:#fff;font-family:'Liberation Sans', sans-serif;letter-spacing:0.45px;-webkit-text-stroke:0.3px #fff">(29,710)</div>
<div class="t" style="right:1378.0px;top:918.0px;font-size:17.4px;font-weight:700;color:#fff;font-family:'Liberation Sans', sans-serif;letter-spacing:0.45px;-webkit-text-stroke:0.3px #fff">(19,462)</div>
<div class="t" style="right:1265.2px;top:918.0px;font-size:17.4px;font-weight:700;color:#fff;font-family:'Liberation Sans', sans-serif;letter-spacing:0.45px;-webkit-text-stroke:0.3px #fff">5,822</div>
<div class="t" style="right:1145.2px;top:918.0px;font-size:17.4px;font-weight:700;color:#fff;font-family:'Liberation Sans', sans-serif;letter-spacing:0.45px;-webkit-text-stroke:0.3px #fff">9,332</div>
<div class="t" style="right:1025.2px;top:918.0px;font-size:17.4px;font-weight:700;color:#fff;font-family:'Liberation Sans', sans-serif;letter-spacing:0.45px;-webkit-text-stroke:0.3px #fff">5,972</div>
<div class="t" style="right:905.2px;top:918.0px;font-size:17.4px;font-weight:700;color:#fff;font-family:'Liberation Sans', sans-serif;letter-spacing:0.45px;-webkit-text-stroke:0.3px #fff">4,722</div>
<div class="t" style="right:785.2px;top:918.0px;font-size:17.4px;font-weight:700;color:#fff;font-family:'Liberation Sans', sans-serif;letter-spacing:0.45px;-webkit-text-stroke:0.3px #fff">4,784</div>
<div class="t" style="right:658.0px;top:918.0px;font-size:17.4px;font-weight:700;color:#fff;font-family:'Liberation Sans', sans-serif;letter-spacing:0.45px;-webkit-text-stroke:0.3px #fff">(1,163)</div>
<div class="t" style="right:545.2px;top:918.0px;font-size:17.4px;font-weight:700;color:#fff;font-family:'Liberation Sans', sans-serif;letter-spacing:0.45px;-webkit-text-stroke:0.3px #fff">4,449</div>
<div class="t" style="right:425.2px;top:918.0px;font-size:17.4px;font-weight:700;color:#fff;font-family:'Liberation Sans', sans-serif;letter-spacing:0.45px;-webkit-text-stroke:0.3px #fff">30,066</div>
<div class="t" style="right:305.2px;top:918.0px;font-size:17.4px;font-weight:700;color:#fff;font-family:'Liberation Sans', sans-serif;letter-spacing:0.45px;-webkit-text-stroke:0.3px #fff">28,219</div>
<div class="t" style="right:185.2px;top:918.0px;font-size:17.4px;font-weight:700;color:#fff;font-family:'Liberation Sans', sans-serif;letter-spacing:0.45px;-webkit-text-stroke:0.3px #fff">32,653</div>
<div class="t" style="right:65.2px;top:918.0px;font-size:17.4px;font-weight:700;color:#fff;font-family:'Liberation Sans', sans-serif;letter-spacing:0.45px;-webkit-text-stroke:0.3px #fff">38,920</div>
<div class="t" style="left:114.6px;top:972.0px;font-size:21.4px;font-weight:700;color:#1a1a1a;font-family:'Liberation Sans', sans-serif;transform:scaleX(1.0024);transform-origin:0 0;">Cash Flow Statement (indirect method), $</div>
<div class="t" style="left:126.3px;top:1010.0px;font-size:18.6px;font-weight:700;color:#1a1a1a;font-family:'Liberation Sans', sans-serif;transform:scaleX(1.0085);transform-origin:0 0;">Operating Activities</div>
<div class="t" style="left:139.2px;top:1033.0px;font-size:16.0px;font-weight:400;color:#1b1b1b;font-family:'Liberation Sans', sans-serif;transform:scaleX(0.9785);transform-origin:0 0;">Net Income Less Depreciation</div>
<div class="t" style="right:1978.5px;top:1033.0px;font-size:15.7px;font-weight:400;color:#1b1b1b;font-family:'Liberation Sans', sans-serif;"><b class="p1">(</b>50,565<b class="p2">)</b></div>
<div class="t" style="right:1858.5px;top:1033.0px;font-size:15.7px;font-weight:400;color:#1b1b1b;font-family:'Liberation Sans', sans-serif;"><b class="p1">(</b>27,710<b class="p2">)</b></div>
<div class="t" style="right:1744.6px;top:1033.0px;font-size:15.7px;font-weight:400;color:#1b1b1b;font-family:'Liberation Sans', sans-serif;">5,588</div>
<div class="t" style="right:1624.6px;top:1033.0px;font-size:15.7px;font-weight:400;color:#1b1b1b;font-family:'Liberation Sans', sans-serif;">4,507</div>
<div class="t" style="right:1504.6px;top:1033.0px;font-size:15.7px;font-weight:400;color:#1b1b1b;font-family:'Liberation Sans', sans-serif;">14,587</div>
<div class="t" style="right:1384.6px;top:1033.0px;font-size:15.7px;font-weight:400;color:#1b1b1b;font-family:'Liberation Sans', sans-serif;">4,650</div>
<div class="t" style="right:1264.6px;top:1033.0px;font-size:15.7px;font-weight:400;color:#1b1b1b;font-family:'Liberation Sans', sans-serif;">10,663</div>
<div class="t" style="right:1144.6px;top:1033.0px;font-size:15.7px;font-weight:400;color:#1b1b1b;font-family:'Liberation Sans', sans-serif;">11,492</div>
<div class="t" style="right:1024.6px;top:1033.0px;font-size:15.7px;font-weight:400;color:#1b1b1b;font-family:'Liberation Sans', sans-serif;">2,792</div>
<div class="t" style="right:904.6px;top:1033.0px;font-size:15.7px;font-weight:400;color:#1b1b1b;font-family:'Liberation Sans', sans-serif;">10,811</div>
<div class="t" style="right:784.6px;top:1033.0px;font-size:15.7px;font-weight:400;color:#1b1b1b;font-family:'Liberation Sans', sans-serif;">727</div>
<div class="t" style="right:658.5px;top:1033.0px;font-size:15.7px;font-weight:400;color:#1b1b1b;font-family:'Liberation Sans', sans-serif;"><b class="p1">(</b>778<b class="p2">)</b></div>
<div class="t" style="right:544.6px;top:1033.0px;font-size:15.7px;font-weight:400;color:#1b1b1b;font-family:'Liberation Sans', sans-serif;">39,860</div>
<div class="t" style="right:424.6px;top:1033.0px;font-size:15.7px;font-weight:400;color:#1b1b1b;font-family:'Liberation Sans', sans-serif;">26,501</div>
<div class="t" style="right:304.6px;top:1033.0px;font-size:15.7px;font-weight:400;color:#1b1b1b;font-family:'Liberation Sans', sans-serif;">37,231</div>
<div class="t" style="right:184.6px;top:1033.0px;font-size:15.7px;font-weight:400;color:#1b1b1b;font-family:'Liberation Sans', sans-serif;">40,259</div>
<div class="t" style="right:64.6px;top:1033.0px;font-size:15.7px;font-weight:400;color:#1b1b1b;font-family:'Liberation Sans', sans-serif;">45,502</div>
<div class="t" style="left:139.2px;top:1053.0px;font-size:16.0px;font-weight:400;color:#1b1b1b;font-family:'Liberation Sans', sans-serif;transform:scaleX(0.9817);transform-origin:0 0;">Changes in Working Capital</div>
<div class="t" style="right:1984.6px;top:1053.0px;font-size:15.7px;font-weight:400;color:#1b1b1b;font-family:'Liberation Sans', sans-serif;">20,281</div>
<div class="t" style="right:1858.5px;top:1053.0px;font-size:15.7px;font-weight:400;color:#1b1b1b;font-family:'Liberation Sans', sans-serif;"><b class="p1">(</b>13,094<b class="p2">)</b></div>
<div class="t" style="right:1738.5px;top:1053.0px;font-size:15.7px;font-weight:400;color:#1b1b1b;font-family:'Liberation Sans', sans-serif;"><b class="p1">(</b>21,188<b class="p2">)</b></div>
<div class="t" style="right:1624.6px;top:1053.0px;font-size:15.7px;font-weight:400;color:#1b1b1b;font-family:'Liberation Sans', sans-serif;">215</div>
<div class="t" style="right:1498.5px;top:1053.0px;font-size:15.7px;font-weight:400;color:#1b1b1b;font-family:'Liberation Sans', sans-serif;"><b class="p1">(</b>5,630<b class="p2">)</b></div>
<div class="t" style="right:1384.6px;top:1053.0px;font-size:15.7px;font-weight:400;color:#1b1b1b;font-family:'Liberation Sans', sans-serif;">5,555</div>
<div class="t" style="right:1258.5px;top:1053.0px;font-size:15.7px;font-weight:400;color:#1b1b1b;font-family:'Liberation Sans', sans-serif;"><b class="p1">(</b>3,174<b class="p2">)</b></div>
<div class="t" style="right:1138.5px;top:1053.0px;font-size:15.7px;font-weight:400;color:#1b1b1b;font-family:'Liberation Sans', sans-serif;"><b class="p1">(</b>493<b class="p2">)</b></div>
<div class="t" style="right:1024.6px;top:1053.0px;font-size:15.7px;font-weight:400;color:#1b1b1b;font-family:'Liberation Sans', sans-serif;">4,847</div>
<div class="t" style="right:898.5px;top:1053.0px;font-size:15.7px;font-weight:400;color:#1b1b1b;font-family:'Liberation Sans', sans-serif;"><b class="p1">(</b>4,423<b class="p2">)</b></div>
<div class="t" style="right:784.6px;top:1053.0px;font-size:15.7px;font-weight:400;color:#1b1b1b;font-family:'Liberation Sans', sans-serif;">5,724</div>
<div class="t" style="right:664.6px;top:1053.0px;font-size:15.7px;font-weight:400;color:#1b1b1b;font-family:'Liberation Sans', sans-serif;">1,282</div>
<div class="t" style="right:538.5px;top:1053.0px;font-size:15.7px;font-weight:400;color:#1b1b1b;font-family:'Liberation Sans', sans-serif;"><b class="p1">(</b>31,642<b class="p2">)</b></div>
<div class="t" style="right:424.6px;top:1053.0px;font-size:15.7px;font-weight:400;color:#1b1b1b;font-family:'Liberation Sans', sans-serif;">7,345</div>
<div class="t" style="right:298.5px;top:1053.0px;font-size:15.7px;font-weight:400;color:#1b1b1b;font-family:'Liberation Sans', sans-serif;"><b class="p1">(</b>5,221<b class="p2">)</b></div>
<div class="t" style="right:178.5px;top:1053.0px;font-size:15.7px;font-weight:400;color:#1b1b1b;font-family:'Liberation Sans', sans-serif;"><b class="p1">(</b>3,805<b class="p2">)</b></div>
<div class="t" style="right:58.5px;top:1053.0px;font-size:15.7px;font-weight:400;color:#1b1b1b;font-family:'Liberation Sans', sans-serif;"><b class="p1">(</b>2,770<b class="p2">)</b></div>
<div class="t" style="left:134.6px;top:1072.0px;font-size:16.3px;font-weight:700;color:#fff;font-family:'Liberation Sans', sans-serif;-webkit-text-stroke:0.25px #fff;transform:scaleX(1.0674);transform-origin:0 0;">Total Operating Activities</div>
<div class="t" style="right:1978.0px;top:1073.0px;font-size:17.4px;font-weight:700;color:#fff;font-family:'Liberation Sans', sans-serif;letter-spacing:0.45px;-webkit-text-stroke:0.3px #fff">(30,284)</div>
<div class="t" style="right:1858.0px;top:1073.0px;font-size:17.4px;font-weight:700;color:#fff;font-family:'Liberation Sans', sans-serif;letter-spacing:0.45px;-webkit-text-stroke:0.3px #fff">(40,804)</div>
<div class="t" style="right:1738.0px;top:1073.0px;font-size:17.4px;font-weight:700;color:#fff;font-family:'Liberation Sans', sans-serif;letter-spacing:0.45px;-webkit-text-stroke:0.3px #fff">(15,599)</div>
<div class="t" style="right:1625.2px;top:1073.0px;font-size:17.4px;font-weight:700;color:#fff;font-family:'Liberation Sans', sans-serif;letter-spacing:0.45px;-webkit-text-stroke:0.3px #fff">4,721</div>
<div class="t" style="right:1505.2px;top:1073.0px;font-size:17.4px;font-weight:700;color:#fff;font-family:'Liberation Sans', sans-serif;letter-spacing:0.45px;-webkit-text-stroke:0.3px #fff">8,956</div>
<div class="t" style="right:1385.2px;top:1073.0px;font-size:17.4px;font-weight:700;color:#fff;font-family:'Liberation Sans', sans-serif;letter-spacing:0.45px;-webkit-text-stroke:0.3px #fff">10,205</div>
<div class="t" style="right:1265.2px;top:1073.0px;font-size:17.4px;font-weight:700;color:#fff;font-family:'Liberation Sans', sans-serif;letter-spacing:0.45px;-webkit-text-stroke:0.3px #fff">7,489</div>
<div class="t" style="right:1145.2px;top:1073.0px;font-size:17.4px;font-weight:700;color:#fff;font-family:'Liberation Sans', sans-serif;letter-spacing:0.45px;-webkit-text-stroke:0.3px #fff">10,998</div>
<div class="t" style="right:1025.2px;top:1073.0px;font-size:17.4px;font-weight:700;color:#fff;font-family:'Liberation Sans', sans-serif;letter-spacing:0.45px;-webkit-text-stroke:0.3px #fff">7,638</div>
<div class="t" style="right:905.2px;top:1073.0px;font-size:17.4px;font-weight:700;color:#fff;font-family:'Liberation Sans', sans-serif;letter-spacing:0.45px;-webkit-text-stroke:0.3px #fff">6,388</div>
<div class="t" style="right:785.2px;top:1073.0px;font-size:17.4px;font-weight:700;color:#fff;font-family:'Liberation Sans', sans-serif;letter-spacing:0.45px;-webkit-text-stroke:0.3px #fff">6,451</div>
<div class="t" style="right:665.2px;top:1073.0px;font-size:17.4px;font-weight:700;color:#fff;font-family:'Liberation Sans', sans-serif;letter-spacing:0.45px;-webkit-text-stroke:0.3px #fff">504</div>
<div class="t" style="right:545.2px;top:1073.0px;font-size:17.4px;font-weight:700;color:#fff;font-family:'Liberation Sans', sans-serif;letter-spacing:0.45px;-webkit-text-stroke:0.3px #fff">8,218</div>
<div class="t" style="right:425.2px;top:1073.0px;font-size:17.4px;font-weight:700;color:#fff;font-family:'Liberation Sans', sans-serif;letter-spacing:0.45px;-webkit-text-stroke:0.3px #fff">33,846</div>
<div class="t" style="right:305.2px;top:1073.0px;font-size:17.4px;font-weight:700;color:#fff;font-family:'Liberation Sans', sans-serif;letter-spacing:0.45px;-webkit-text-stroke:0.3px #fff">32,010</div>
<div class="t" style="right:185.2px;top:1073.0px;font-size:17.4px;font-weight:700;color:#fff;font-family:'Liberation Sans', sans-serif;letter-spacing:0.45px;-webkit-text-stroke:0.3px #fff">36,455</div>
<div class="t" style="right:65.2px;top:1073.0px;font-size:17.4px;font-weight:700;color:#fff;font-family:'Liberation Sans', sans-serif;letter-spacing:0.45px;-webkit-text-stroke:0.3px #fff">42,732</div>
<div class="t" style="left:126.3px;top:1116.0px;font-size:18.6px;font-weight:700;color:#1a1a1a;font-family:'Liberation Sans', sans-serif;transform:scaleX(1.0218);transform-origin:0 0;">Investing Activities</div>
<div class="t" style="left:139.2px;top:1139.0px;font-size:16.0px;font-weight:400;color:#1b1b1b;font-family:'Liberation Sans', sans-serif;transform:scaleX(0.9840);transform-origin:0 0;">Capital Expenditure</div>
<div class="t" style="right:1978.5px;top:1139.0px;font-size:15.7px;font-weight:400;color:#1b1b1b;font-family:'Liberation Sans', sans-serif;"><b class="p1">(</b>155,000<b class="p2">)</b></div>
<div class="t" style="right:1858.5px;top:1139.0px;font-size:15.7px;font-weight:400;color:#1b1b1b;font-family:'Liberation Sans', sans-serif;"><b class="p1">(</b>161,667<b class="p2">)</b></div>
<div class="t" style="right:1738.5px;top:1139.0px;font-size:15.7px;font-weight:400;color:#1b1b1b;font-family:'Liberation Sans', sans-serif;"><b class="p1">(</b>169,667<b class="p2">)</b></div>
<div class="t" style="right:1618.5px;top:1139.0px;font-size:15.7px;font-weight:400;color:#1b1b1b;font-family:'Liberation Sans', sans-serif;"><b class="p1">(</b>43,667<b class="p2">)</b></div>
<div class="t" style="right:1498.5px;top:1139.0px;font-size:15.7px;font-weight:400;color:#1b1b1b;font-family:'Liberation Sans', sans-serif;"><b class="p1">(</b>37,000<b class="p2">)</b></div>
<div class="t" style="right:1378.5px;top:1139.0px;font-size:15.7px;font-weight:400;color:#1b1b1b;font-family:'Liberation Sans', sans-serif;"><b class="p1">(</b>28,000<b class="p2">)</b></div>
<div class="t" style="right:1264.8px;top:1139.0px;font-size:15.7px;font-weight:400;color:#1b1b1b;font-family:'Liberation Sans', sans-serif;">-</div>
<div class="t" style="right:1144.8px;top:1139.0px;font-size:15.7px;font-weight:400;color:#1b1b1b;font-family:'Liberation Sans', sans-serif;">-</div>
<div class="t" style="right:1024.8px;top:1139.0px;font-size:15.7px;font-weight:400;color:#1b1b1b;font-family:'Liberation Sans', sans-serif;">-</div>
<div class="t" style="right:904.8px;top:1139.0px;font-size:15.7px;font-weight:400;color:#1b1b1b;font-family:'Liberation Sans', sans-serif;">-</div>
<div class="t" style="right:784.8px;top:1139.0px;font-size:15.7px;font-weight:400;color:#1b1b1b;font-family:'Liberation Sans', sans-serif;">-</div>
<div class="t" style="right:664.8px;top:1139.0px;font-size:15.7px;font-weight:400;color:#1b1b1b;font-family:'Liberation Sans', sans-serif;">-</div>
<div class="t" style="right:544.8px;top:1139.0px;font-size:15.7px;font-weight:400;color:#1b1b1b;font-family:'Liberation Sans', sans-serif;">-</div>
<div class="t" style="right:424.8px;top:1139.0px;font-size:15.7px;font-weight:400;color:#1b1b1b;font-family:'Liberation Sans', sans-serif;">-</div>
<div class="t" style="right:304.8px;top:1139.0px;font-size:15.7px;font-weight:400;color:#1b1b1b;font-family:'Liberation Sans', sans-serif;">-</div>
<div class="t" style="right:184.8px;top:1139.0px;font-size:15.7px;font-weight:400;color:#1b1b1b;font-family:'Liberation Sans', sans-serif;">-</div>
<div class="t" style="right:64.8px;top:1139.0px;font-size:15.7px;font-weight:400;color:#1b1b1b;font-family:'Liberation Sans', sans-serif;">-</div>
<div class="t" style="left:134.6px;top:1158.0px;font-size:16.3px;font-weight:700;color:#fff;font-family:'Liberation Sans', sans-serif;-webkit-text-stroke:0.25px #fff;transform:scaleX(1.0538);transform-origin:0 0;">Total Cash From (For) Investing Activities</div>
<div class="t" style="right:1978.0px;top:1159.0px;font-size:17.4px;font-weight:700;color:#fff;font-family:'Liberation Sans', sans-serif;letter-spacing:0.45px;-webkit-text-stroke:0.3px #fff">(155,000)</div>
<div class="t" style="right:1858.0px;top:1159.0px;font-size:17.4px;font-weight:700;color:#fff;font-family:'Liberation Sans', sans-serif;letter-spacing:0.45px;-webkit-text-stroke:0.3px #fff">(161,667)</div>
<div class="t" style="right:1738.0px;top:1159.0px;font-size:17.4px;font-weight:700;color:#fff;font-family:'Liberation Sans', sans-serif;letter-spacing:0.45px;-webkit-text-stroke:0.3px #fff">(169,667)</div>
<div class="t" style="right:1618.0px;top:1159.0px;font-size:17.4px;font-weight:700;color:#fff;font-family:'Liberation Sans', sans-serif;letter-spacing:0.45px;-webkit-text-stroke:0.3px #fff">(43,667)</div>
<div class="t" style="right:1498.0px;top:1159.0px;font-size:17.4px;font-weight:700;color:#fff;font-family:'Liberation Sans', sans-serif;letter-spacing:0.45px;-webkit-text-stroke:0.3px #fff">(37,000)</div>
<div class="t" style="right:1378.0px;top:1159.0px;font-size:17.4px;font-weight:700;color:#fff;font-family:'Liberation Sans', sans-serif;letter-spacing:0.45px;-webkit-text-stroke:0.3px #fff">(28,000)</div>
<div class="t" style="right:1266.0px;top:1159.0px;font-size:17.4px;font-weight:400;color:#fff;font-family:'Liberation Sans', sans-serif;letter-spacing:0.45px">-</div>
<div class="t" style="right:1146.0px;top:1159.0px;font-size:17.4px;font-weight:400;color:#fff;font-family:'Liberation Sans', sans-serif;letter-spacing:0.45px">-</div>
<div class="t" style="right:1026.0px;top:1159.0px;font-size:17.4px;font-weight:400;color:#fff;font-family:'Liberation Sans', sans-serif;letter-spacing:0.45px">-</div>
<div class="t" style="right:906.0px;top:1159.0px;font-size:17.4px;font-weight:400;color:#fff;font-family:'Liberation Sans', sans-serif;letter-spacing:0.45px">-</div>
<div class="t" style="right:786.0px;top:1159.0px;font-size:17.4px;font-weight:400;color:#fff;font-family:'Liberation Sans', sans-serif;letter-spacing:0.45px">-</div>
<div class="t" style="right:666.0px;top:1159.0px;font-size:17.4px;font-weight:400;color:#fff;font-family:'Liberation Sans', sans-serif;letter-spacing:0.45px">-</div>
<div class="t" style="right:546.0px;top:1159.0px;font-size:17.4px;font-weight:400;color:#fff;font-family:'Liberation Sans', sans-serif;letter-spacing:0.45px">-</div>
<div class="t" style="right:426.0px;top:1159.0px;font-size:17.4px;font-weight:400;color:#fff;font-family:'Liberation Sans', sans-serif;letter-spacing:0.45px">-</div>
<div class="t" style="right:306.0px;top:1159.0px;font-size:17.4px;font-weight:400;color:#fff;font-family:'Liberation Sans', sans-serif;letter-spacing:0.45px">-</div>
<div class="t" style="right:186.0px;top:1159.0px;font-size:17.4px;font-weight:400;color:#fff;font-family:'Liberation Sans', sans-serif;letter-spacing:0.45px">-</div>
<div class="t" style="right:66.0px;top:1159.0px;font-size:17.4px;font-weight:400;color:#fff;font-family:'Liberation Sans', sans-serif;letter-spacing:0.45px">-</div>
<div class="t" style="left:126.3px;top:1202.0px;font-size:18.6px;font-weight:700;color:#1a1a1a;font-family:'Liberation Sans', sans-serif;transform:scaleX(0.9960);transform-origin:0 0;">Financing Activities</div>
<div class="t" style="left:139.2px;top:1225.0px;font-size:16.0px;font-weight:400;color:#1b1b1b;font-family:'Liberation Sans', sans-serif;transform:scaleX(1.0081);transform-origin:0 0;">Equity Investment</div>
<div class="t" style="right:1984.6px;top:1225.0px;font-size:15.7px;font-weight:400;color:#1b1b1b;font-family:'Liberation Sans', sans-serif;">700,000</div>
<div class="t" style="right:1864.8px;top:1225.0px;font-size:15.7px;font-weight:400;color:#1b1b1b;font-family:'Liberation Sans', sans-serif;">-</div>
<div class="t" style="right:1744.8px;top:1225.0px;font-size:15.7px;font-weight:400;color:#1b1b1b;font-family:'Liberation Sans', sans-serif;">-</div>
<div class="t" style="right:1624.8px;top:1225.0px;font-size:15.7px;font-weight:400;color:#1b1b1b;font-family:'Liberation Sans', sans-serif;">-</div>
<div class="t" style="right:1504.8px;top:1225.0px;font-size:15.7px;font-weight:400;color:#1b1b1b;font-family:'Liberation Sans', sans-serif;">-</div>
<div class="t" style="right:1384.8px;top:1225.0px;font-size:15.7px;font-weight:400;color:#1b1b1b;font-family:'Liberation Sans', sans-serif;">-</div>
<div class="t" style="right:1264.8px;top:1225.0px;font-size:15.7px;font-weight:400;color:#1b1b1b;font-family:'Liberation Sans', sans-serif;">-</div>
<div class="t" style="right:1144.8px;top:1225.0px;font-size:15.7px;font-weight:400;color:#1b1b1b;font-family:'Liberation Sans', sans-serif;">-</div>
<div class="t" style="right:1024.8px;top:1225.0px;font-size:15.7px;font-weight:400;color:#1b1b1b;font-family:'Liberation Sans', sans-serif;">-</div>
<div class="t" style="right:904.8px;top:1225.0px;font-size:15.7px;font-weight:400;color:#1b1b1b;font-family:'Liberation Sans', sans-serif;">-</div>
<div class="t" style="right:784.8px;top:1225.0px;font-size:15.7px;font-weight:400;color:#1b1b1b;font-family:'Liberation Sans', sans-serif;">-</div>
<div class="t" style="right:664.8px;top:1225.0px;font-size:15.7px;font-weight:400;color:#1b1b1b;font-family:'Liberation Sans', sans-serif;">-</div>
<div class="t" style="right:544.8px;top:1225.0px;font-size:15.7px;font-weight:400;color:#1b1b1b;font-family:'Liberation Sans', sans-serif;">-</div>
<div class="t" style="right:424.8px;top:1225.0px;font-size:15.7px;font-weight:400;color:#1b1b1b;font-family:'Liberation Sans', sans-serif;">-</div>
<div class="t" style="right:304.8px;top:1225.0px;font-size:15.7px;font-weight:400;color:#1b1b1b;font-family:'Liberation Sans', sans-serif;">-</div>
<div class="t" style="right:184.8px;top:1225.0px;font-size:15.7px;font-weight:400;color:#1b1b1b;font-family:'Liberation Sans', sans-serif;">-</div>
<div class="t" style="right:64.8px;top:1225.0px;font-size:15.7px;font-weight:400;color:#1b1b1b;font-family:'Liberation Sans', sans-serif;">-</div>
<div class="t" style="left:139.2px;top:1245.0px;font-size:16.0px;font-weight:400;color:#1b1b1b;font-family:'Liberation Sans', sans-serif;transform:scaleX(0.9452);transform-origin:0 0;">Loans</div>
<div class="t" style="right:1984.6px;top:1245.0px;font-size:15.7px;font-weight:400;color:#1b1b1b;font-family:'Liberation Sans', sans-serif;">200,000</div>
<div class="t" style="right:1864.8px;top:1245.0px;font-size:15.7px;font-weight:400;color:#1b1b1b;font-family:'Liberation Sans', sans-serif;">-</div>
<div class="t" style="right:1744.6px;top:1245.0px;font-size:15.7px;font-weight:400;color:#1b1b1b;font-family:'Liberation Sans', sans-serif;">98,333</div>
<div class="t" style="right:1618.5px;top:1245.0px;font-size:15.7px;font-weight:400;color:#1b1b1b;font-family:'Liberation Sans', sans-serif;"><b class="p1">(</b>1,667<b class="p2">)</b></div>
<div class="t" style="right:1498.5px;top:1245.0px;font-size:15.7px;font-weight:400;color:#1b1b1b;font-family:'Liberation Sans', sans-serif;"><b class="p1">(</b>1,667<b class="p2">)</b></div>
<div class="t" style="right:1378.5px;top:1245.0px;font-size:15.7px;font-weight:400;color:#1b1b1b;font-family:'Liberation Sans', sans-serif;"><b class="p1">(</b>1,667<b class="p2">)</b></div>
<div class="t" style="right:1258.5px;top:1245.0px;font-size:15.7px;font-weight:400;color:#1b1b1b;font-family:'Liberation Sans', sans-serif;"><b class="p1">(</b>1,667<b class="p2">)</b></div>
<div class="t" style="right:1138.5px;top:1245.0px;font-size:15.7px;font-weight:400;color:#1b1b1b;font-family:'Liberation Sans', sans-serif;"><b class="p1">(</b>1,667<b class="p2">)</b></div>
<div class="t" style="right:1018.5px;top:1245.0px;font-size:15.7px;font-weight:400;color:#1b1b1b;font-family:'Liberation Sans', sans-serif;"><b class="p1">(</b>1,667<b class="p2">)</b></div>
<div class="t" style="right:898.5px;top:1245.0px;font-size:15.7px;font-weight:400;color:#1b1b1b;font-family:'Liberation Sans', sans-serif;"><b class="p1">(</b>1,667<b class="p2">)</b></div>
<div class="t" style="right:778.5px;top:1245.0px;font-size:15.7px;font-weight:400;color:#1b1b1b;font-family:'Liberation Sans', sans-serif;"><b class="p1">(</b>1,667<b class="p2">)</b></div>
<div class="t" style="right:658.5px;top:1245.0px;font-size:15.7px;font-weight:400;color:#1b1b1b;font-family:'Liberation Sans', sans-serif;"><b class="p1">(</b>1,667<b class="p2">)</b></div>
<div class="t" style="right:538.5px;top:1245.0px;font-size:15.7px;font-weight:400;color:#1b1b1b;font-family:'Liberation Sans', sans-serif;"><b class="p1">(</b>3,770<b class="p2">)</b></div>
<div class="t" style="right:418.5px;top:1245.0px;font-size:15.7px;font-weight:400;color:#1b1b1b;font-family:'Liberation Sans', sans-serif;"><b class="p1">(</b>3,780<b class="p2">)</b></div>
<div class="t" style="right:298.5px;top:1245.0px;font-size:15.7px;font-weight:400;color:#1b1b1b;font-family:'Liberation Sans', sans-serif;"><b class="p1">(</b>3,791<b class="p2">)</b></div>
<div class="t" style="right:178.5px;top:1245.0px;font-size:15.7px;font-weight:400;color:#1b1b1b;font-family:'Liberation Sans', sans-serif;"><b class="p1">(</b>3,801<b class="p2">)</b></div>
<div class="t" style="right:58.5px;top:1245.0px;font-size:15.7px;font-weight:400;color:#1b1b1b;font-family:'Liberation Sans', sans-serif;"><b class="p1">(</b>3,812<b class="p2">)</b></div>
<div class="t" style="left:139.2px;top:1265.0px;font-size:16.0px;font-weight:400;color:#1b1b1b;font-family:'Liberation Sans', sans-serif;transform:scaleX(0.9736);transform-origin:0 0;">Dividends Paid</div>
<div class="t" style="right:1984.8px;top:1265.0px;font-size:15.7px;font-weight:400;color:#1b1b1b;font-family:'Liberation Sans', sans-serif;">-</div>
<div class="t" style="right:1864.8px;top:1265.0px;font-size:15.7px;font-weight:400;color:#1b1b1b;font-family:'Liberation Sans', sans-serif;">-</div>
<div class="t" style="right:1744.8px;top:1265.0px;font-size:15.7px;font-weight:400;color:#1b1b1b;font-family:'Liberation Sans', sans-serif;">-</div>
<div class="t" style="right:1624.8px;top:1265.0px;font-size:15.7px;font-weight:400;color:#1b1b1b;font-family:'Liberation Sans', sans-serif;">-</div>
<div class="t" style="right:1504.8px;top:1265.0px;font-size:15.7px;font-weight:400;color:#1b1b1b;font-family:'Liberation Sans', sans-serif;">-</div>
<div class="t" style="right:1384.8px;top:1265.0px;font-size:15.7px;font-weight:400;color:#1b1b1b;font-family:'Liberation Sans', sans-serif;">-</div>
<div class="t" style="right:1264.8px;top:1265.0px;font-size:15.7px;font-weight:400;color:#1b1b1b;font-family:'Liberation Sans', sans-serif;">-</div>
<div class="t" style="right:1144.8px;top:1265.0px;font-size:15.7px;font-weight:400;color:#1b1b1b;font-family:'Liberation Sans', sans-serif;">-</div>
<div class="t" style="right:1024.8px;top:1265.0px;font-size:15.7px;font-weight:400;color:#1b1b1b;font-family:'Liberation Sans', sans-serif;">-</div>
<div class="t" style="right:904.8px;top:1265.0px;font-size:15.7px;font-weight:400;color:#1b1b1b;font-family:'Liberation Sans', sans-serif;">-</div>
<div class="t" style="right:784.8px;top:1265.0px;font-size:15.7px;font-weight:400;color:#1b1b1b;font-family:'Liberation Sans', sans-serif;">-</div>
<div class="t" style="right:664.8px;top:1265.0px;font-size:15.7px;font-weight:400;color:#1b1b1b;font-family:'Liberation Sans', sans-serif;">-</div>
<div class="t" style="right:544.8px;top:1265.0px;font-size:15.7px;font-weight:400;color:#1b1b1b;font-family:'Liberation Sans', sans-serif;">-</div>
<div class="t" style="right:424.8px;top:1265.0px;font-size:15.7px;font-weight:400;color:#1b1b1b;font-family:'Liberation Sans', sans-serif;">-</div>
<div class="t" style="right:304.8px;top:1265.0px;font-size:15.7px;font-weight:400;color:#1b1b1b;font-family:'Liberation Sans', sans-serif;">-</div>
<div class="t" style="right:184.8px;top:1265.0px;font-size:15.7px;font-weight:400;color:#1b1b1b;font-family:'Liberation Sans', sans-serif;">-</div>
<div class="t" style="right:64.8px;top:1265.0px;font-size:15.7px;font-weight:400;color:#1b1b1b;font-family:'Liberation Sans', sans-serif;">-</div>
<div class="t" style="left:134.6px;top:1284.0px;font-size:16.3px;font-weight:700;color:#fff;font-family:'Liberation Sans', sans-serif;-webkit-text-stroke:0.25px #fff;transform:scaleX(1.0413);transform-origin:0 0;">Total Cash From (For) Financing Activities</div>
<div class="t" style="right:1985.2px;top:1285.0px;font-size:17.4px;font-weight:700;color:#fff;font-family:'Liberation Sans', sans-serif;letter-spacing:0.45px;-webkit-text-stroke:0.3px #fff">900,000</div>
<div class="t" style="right:1866.0px;top:1285.0px;font-size:17.4px;font-weight:400;color:#fff;font-family:'Liberation Sans', sans-serif;letter-spacing:0.45px">-</div>
<div class="t" style="right:1745.2px;top:1285.0px;font-size:17.4px;font-weight:700;color:#fff;font-family:'Liberation Sans', sans-serif;letter-spacing:0.45px;-webkit-text-stroke:0.3px #fff">98,333</div>
<div class="t" style="right:1618.0px;top:1285.0px;font-size:17.4px;font-weight:700;color:#fff;font-family:'Liberation Sans', sans-serif;letter-spacing:0.45px;-webkit-text-stroke:0.3px #fff">(1,667)</div>
<div class="t" style="right:1498.0px;top:1285.0px;font-size:17.4px;font-weight:700;color:#fff;font-family:'Liberation Sans', sans-serif;letter-spacing:0.45px;-webkit-text-stroke:0.3px #fff">(1,667)</div>
<div class="t" style="right:1378.0px;top:1285.0px;font-size:17.4px;font-weight:700;color:#fff;font-family:'Liberation Sans', sans-serif;letter-spacing:0.45px;-webkit-text-stroke:0.3px #fff">(1,667)</div>
<div class="t" style="right:1258.0px;top:1285.0px;font-size:17.4px;font-weight:700;color:#fff;font-family:'Liberation Sans', sans-serif;letter-spacing:0.45px;-webkit-text-stroke:0.3px #fff">(1,667)</div>
<div class="t" style="right:1138.0px;top:1285.0px;font-size:17.4px;font-weight:700;color:#fff;font-family:'Liberation Sans', sans-serif;letter-spacing:0.45px;-webkit-text-stroke:0.3px #fff">(1,667)</div>
<div class="t" style="right:1018.0px;top:1285.0px;font-size:17.4px;font-weight:700;color:#fff;font-family:'Liberation Sans', sans-serif;letter-spacing:0.45px;-webkit-text-stroke:0.3px #fff">(1,667)</div>
<div class="t" style="right:898.0px;top:1285.0px;font-size:17.4px;font-weight:700;color:#fff;font-family:'Liberation Sans', sans-serif;letter-spacing:0.45px;-webkit-text-stroke:0.3px #fff">(1,667)</div>
<div class="t" style="right:778.0px;top:1285.0px;font-size:17.4px;font-weight:700;color:#fff;font-family:'Liberation Sans', sans-serif;letter-spacing:0.45px;-webkit-text-stroke:0.3px #fff">(1,667)</div>
<div class="t" style="right:658.0px;top:1285.0px;font-size:17.4px;font-weight:700;color:#fff;font-family:'Liberation Sans', sans-serif;letter-spacing:0.45px;-webkit-text-stroke:0.3px #fff">(1,667)</div>
<div class="t" style="right:538.0px;top:1285.0px;font-size:17.4px;font-weight:700;color:#fff;font-family:'Liberation Sans', sans-serif;letter-spacing:0.45px;-webkit-text-stroke:0.3px #fff">(3,770)</div>
<div class="t" style="right:418.0px;top:1285.0px;font-size:17.4px;font-weight:700;color:#fff;font-family:'Liberation Sans', sans-serif;letter-spacing:0.45px;-webkit-text-stroke:0.3px #fff">(3,780)</div>
<div class="t" style="right:298.0px;top:1285.0px;font-size:17.4px;font-weight:700;color:#fff;font-family:'Liberation Sans', sans-serif;letter-spacing:0.45px;-webkit-text-stroke:0.3px #fff">(3,791)</div>
<div class="t" style="right:178.0px;top:1285.0px;font-size:17.4px;font-weight:700;color:#fff;font-family:'Liberation Sans', sans-serif;letter-spacing:0.45px;-webkit-text-stroke:0.3px #fff">(3,801)</div>
<div class="t" style="right:58.0px;top:1285.0px;font-size:17.4px;font-weight:700;color:#fff;font-family:'Liberation Sans', sans-serif;letter-spacing:0.45px;-webkit-text-stroke:0.3px #fff">(3,812)</div>
<div class="t" style="left:126.3px;top:1328.0px;font-size:18.6px;font-weight:700;color:#1a1a1a;font-family:'Liberation Sans', sans-serif;transform:scaleX(1.0117);transform-origin:0 0;">Cash Movement</div>
<div class="t" style="left:139.2px;top:1352.0px;font-size:16.0px;font-weight:400;color:#1b1b1b;font-family:'Liberation Sans', sans-serif;transform:scaleX(0.9683);transform-origin:0 0;">Cash and Cash Equivalents Beginning</div>
<div class="t" style="right:1984.8px;top:1351.0px;font-size:15.7px;font-weight:400;color:#1b1b1b;font-family:'Liberation Sans', sans-serif;">-</div>
<div class="t" style="right:1864.6px;top:1351.0px;font-size:15.7px;font-weight:400;color:#1b1b1b;font-family:'Liberation Sans', sans-serif;">714,716</div>
<div class="t" style="right:1744.6px;top:1351.0px;font-size:15.7px;font-weight:400;color:#1b1b1b;font-family:'Liberation Sans', sans-serif;">512,246</div>
<div class="t" style="right:1624.6px;top:1351.0px;font-size:15.7px;font-weight:400;color:#1b1b1b;font-family:'Liberation Sans', sans-serif;">425,313</div>
<div class="t" style="right:1504.6px;top:1351.0px;font-size:15.7px;font-weight:400;color:#1b1b1b;font-family:'Liberation Sans', sans-serif;">384,701</div>
<div class="t" style="right:1384.6px;top:1351.0px;font-size:15.7px;font-weight:400;color:#1b1b1b;font-family:'Liberation Sans', sans-serif;">354,991</div>
<div class="t" style="right:1264.6px;top:1351.0px;font-size:15.7px;font-weight:400;color:#1b1b1b;font-family:'Liberation Sans', sans-serif;">335,529</div>
<div class="t" style="right:1144.6px;top:1351.0px;font-size:15.7px;font-weight:400;color:#1b1b1b;font-family:'Liberation Sans', sans-serif;">341,351</div>
<div class="t" style="right:1024.6px;top:1351.0px;font-size:15.7px;font-weight:400;color:#1b1b1b;font-family:'Liberation Sans', sans-serif;">350,682</div>
<div class="t" style="right:904.6px;top:1351.0px;font-size:15.7px;font-weight:400;color:#1b1b1b;font-family:'Liberation Sans', sans-serif;">356,654</div>
<div class="t" style="right:784.6px;top:1351.0px;font-size:15.7px;font-weight:400;color:#1b1b1b;font-family:'Liberation Sans', sans-serif;">361,376</div>
<div class="t" style="right:664.6px;top:1351.0px;font-size:15.7px;font-weight:400;color:#1b1b1b;font-family:'Liberation Sans', sans-serif;">366,160</div>
<div class="t" style="right:544.6px;top:1351.0px;font-size:15.7px;font-weight:400;color:#1b1b1b;font-family:'Liberation Sans', sans-serif;">364,997</div>
<div class="t" style="right:424.6px;top:1351.0px;font-size:15.7px;font-weight:400;color:#1b1b1b;font-family:'Liberation Sans', sans-serif;">369,446</div>
<div class="t" style="right:304.6px;top:1351.0px;font-size:15.7px;font-weight:400;color:#1b1b1b;font-family:'Liberation Sans', sans-serif;">399,512</div>
<div class="t" style="right:184.6px;top:1351.0px;font-size:15.7px;font-weight:400;color:#1b1b1b;font-family:'Liberation Sans', sans-serif;">427,731</div>
<div class="t" style="right:64.6px;top:1351.0px;font-size:15.7px;font-weight:400;color:#1b1b1b;font-family:'Liberation Sans', sans-serif;">460,384</div>
<div class="t" style="left:139.2px;top:1375.0px;font-size:16.0px;font-weight:400;color:#1b1b1b;font-family:'Liberation Sans', sans-serif;transform:scaleX(0.9690);transform-origin:0 0;">Net (Increase) Decrease In Cash</div>
<div class="t" style="right:1984.6px;top:1375.0px;font-size:15.7px;font-weight:400;color:#1b1b1b;font-family:'Liberation Sans', sans-serif;">714,716</div>
<div class="t" style="right:1858.5px;top:1375.0px;font-size:15.7px;font-weight:400;color:#1b1b1b;font-family:'Liberation Sans', sans-serif;"><b class="p1">(</b>202,470<b class="p2">)</b></div>
<div class="t" style="right:1738.5px;top:1375.0px;font-size:15.7px;font-weight:400;color:#1b1b1b;font-family:'Liberation Sans', sans-serif;"><b class="p1">(</b>86,933<b class="p2">)</b></div>
<div class="t" style="right:1618.5px;top:1375.0px;font-size:15.7px;font-weight:400;color:#1b1b1b;font-family:'Liberation Sans', sans-serif;"><b class="p1">(</b>40,612<b class="p2">)</b></div>
<div class="t" style="right:1498.5px;top:1375.0px;font-size:15.7px;font-weight:400;color:#1b1b1b;font-family:'Liberation Sans', sans-serif;"><b class="p1">(</b>29,710<b class="p2">)</b></div>
<div class="t" style="right:1378.5px;top:1375.0px;font-size:15.7px;font-weight:400;color:#1b1b1b;font-family:'Liberation Sans', sans-serif;"><b class="p1">(</b>19,462<b class="p2">)</b></div>
<div class="t" style="right:1264.6px;top:1375.0px;font-size:15.7px;font-weight:400;color:#1b1b1b;font-family:'Liberation Sans', sans-serif;">5,822</div>
<div class="t" style="right:1144.6px;top:1375.0px;font-size:15.7px;font-weight:400;color:#1b1b1b;font-family:'Liberation Sans', sans-serif;">9,332</div>
<div class="t" style="right:1024.6px;top:1375.0px;font-size:15.7px;font-weight:400;color:#1b1b1b;font-family:'Liberation Sans', sans-serif;">5,972</div>
<div class="t" style="right:904.6px;top:1375.0px;font-size:15.7px;font-weight:400;color:#1b1b1b;font-family:'Liberation Sans', sans-serif;">4,722</div>
<div class="t" style="right:784.6px;top:1375.0px;font-size:15.7px;font-weight:400;color:#1b1b1b;font-family:'Liberation Sans', sans-serif;">4,784</div>
<div class="t" style="right:658.5px;top:1375.0px;font-size:15.7px;font-weight:400;color:#1b1b1b;font-family:'Liberation Sans', sans-serif;"><b class="p1">(</b>1,163<b class="p2">)</b></div>
<div class="t" style="right:544.6px;top:1375.0px;font-size:15.7px;font-weight:400;color:#1b1b1b;font-family:'Liberation Sans', sans-serif;">4,449</div>
<div class="t" style="right:424.6px;top:1375.0px;font-size:15.7px;font-weight:400;color:#1b1b1b;font-family:'Liberation Sans', sans-serif;">30,066</div>
<div class="t" style="right:304.6px;top:1375.0px;font-size:15.7px;font-weight:400;color:#1b1b1b;font-family:'Liberation Sans', sans-serif;">28,219</div>
<div class="t" style="right:184.6px;top:1375.0px;font-size:15.7px;font-weight:400;color:#1b1b1b;font-family:'Liberation Sans', sans-serif;">32,653</div>
<div class="t" style="right:64.6px;top:1375.0px;font-size:15.7px;font-weight:400;color:#1b1b1b;font-family:'Liberation Sans', sans-serif;">38,920</div>
<div class="t" style="left:134.6px;top:1396.0px;font-size:16.3px;font-weight:700;color:#fff;font-family:'Liberation Sans', sans-serif;-webkit-text-stroke:0.25px #fff;transform:scaleX(1.0260);transform-origin:0 0;">Total Cash and Cash Equivalents End</div>
<div class="t" style="right:1985.2px;top:1396.0px;font-size:17.4px;font-weight:700;color:#fff;font-family:'Liberation Sans', sans-serif;letter-spacing:0.45px;-webkit-text-stroke:0.3px #fff">714,716</div>
<div class="t" style="right:1865.2px;top:1396.0px;font-size:17.4px;font-weight:700;color:#fff;font-family:'Liberation Sans', sans-serif;letter-spacing:0.45px;-webkit-text-stroke:0.3px #fff">512,246</div>
<div class="t" style="right:1745.2px;top:1396.0px;font-size:17.4px;font-weight:700;color:#fff;font-family:'Liberation Sans', sans-serif;letter-spacing:0.45px;-webkit-text-stroke:0.3px #fff">425,313</div>
<div class="t" style="right:1625.2px;top:1396.0px;font-size:17.4px;font-weight:700;color:#fff;font-family:'Liberation Sans', sans-serif;letter-spacing:0.45px;-webkit-text-stroke:0.3px #fff">384,701</div>
<div class="t" style="right:1505.2px;top:1396.0px;font-size:17.4px;font-weight:700;color:#fff;font-family:'Liberation Sans', sans-serif;letter-spacing:0.45px;-webkit-text-stroke:0.3px #fff">354,991</div>
<div class="t" style="right:1385.2px;top:1396.0px;font-size:17.4px;font-weight:700;color:#fff;font-family:'Liberation Sans', sans-serif;letter-spacing:0.45px;-webkit-text-stroke:0.3px #fff">335,529</div>
<div class="t" style="right:1265.2px;top:1396.0px;font-size:17.4px;font-weight:700;color:#fff;font-family:'Liberation Sans', sans-serif;letter-spacing:0.45px;-webkit-text-stroke:0.3px #fff">341,351</div>
<div class="t" style="right:1145.2px;top:1396.0px;font-size:17.4px;font-weight:700;color:#fff;font-family:'Liberation Sans', sans-serif;letter-spacing:0.45px;-webkit-text-stroke:0.3px #fff">350,682</div>
<div class="t" style="right:1025.2px;top:1396.0px;font-size:17.4px;font-weight:700;color:#fff;font-family:'Liberation Sans', sans-serif;letter-spacing:0.45px;-webkit-text-stroke:0.3px #fff">356,654</div>
<div class="t" style="right:905.2px;top:1396.0px;font-size:17.4px;font-weight:700;color:#fff;font-family:'Liberation Sans', sans-serif;letter-spacing:0.45px;-webkit-text-stroke:0.3px #fff">361,376</div>
<div class="t" style="right:785.2px;top:1396.0px;font-size:17.4px;font-weight:700;color:#fff;font-family:'Liberation Sans', sans-serif;letter-spacing:0.45px;-webkit-text-stroke:0.3px #fff">366,160</div>
<div class="t" style="right:665.2px;top:1396.0px;font-size:17.4px;font-weight:700;color:#fff;font-family:'Liberation Sans', sans-serif;letter-spacing:0.45px;-webkit-text-stroke:0.3px #fff">364,997</div>
<div class="t" style="right:545.2px;top:1396.0px;font-size:17.4px;font-weight:700;color:#fff;font-family:'Liberation Sans', sans-serif;letter-spacing:0.45px;-webkit-text-stroke:0.3px #fff">369,446</div>
<div class="t" style="right:425.2px;top:1396.0px;font-size:17.4px;font-weight:700;color:#fff;font-family:'Liberation Sans', sans-serif;letter-spacing:0.45px;-webkit-text-stroke:0.3px #fff">399,512</div>
<div class="t" style="right:305.2px;top:1396.0px;font-size:17.4px;font-weight:700;color:#fff;font-family:'Liberation Sans', sans-serif;letter-spacing:0.45px;-webkit-text-stroke:0.3px #fff">427,731</div>
<div class="t" style="right:185.2px;top:1396.0px;font-size:17.4px;font-weight:700;color:#fff;font-family:'Liberation Sans', sans-serif;letter-spacing:0.45px;-webkit-text-stroke:0.3px #fff">460,384</div>
<div class="t" style="right:65.2px;top:1396.0px;font-size:17.4px;font-weight:700;color:#fff;font-family:'Liberation Sans', sans-serif;letter-spacing:0.45px;-webkit-text-stroke:0.3px #fff">499,304</div>
<div class="t" style="right:2106.0px;top:1396.0px;font-size:17.4px;font-weight:700;color:#fff;font-family:'Liberation Sans', sans-serif;">-</div>
<div class="t" style="left:127.0px;top:1456.0px;font-size:21.3px;font-weight:700;color:#1a1a1a;font-family:'Liberation Sans', sans-serif;transform:scaleX(1.0014);transform-origin:0 0;">Interest on Cash Breakdown</div>
<div class="t" style="left:138.9px;top:1493.0px;font-size:16.0px;font-weight:400;color:#1b1b1b;font-family:'Liberation Sans', sans-serif;transform:scaleX(1.0060);transform-origin:0 0;">Net Cash Flow from Investing Activities</div>
<div class="t" style="right:1977.0px;top:1495.0px;font-size:13.9px;font-weight:400;color:#1b1b1b;font-family:'Liberation Sans', sans-serif;"><b class="p1">(</b>155,000<b class="p2">)</b></div>
<div class="t" style="right:1857.0px;top:1495.0px;font-size:13.9px;font-weight:400;color:#1b1b1b;font-family:'Liberation Sans', sans-serif;"><b class="p1">(</b>161,667<b class="p2">)</b></div>
<div class="t" style="right:1737.0px;top:1495.0px;font-size:13.9px;font-weight:400;color:#1b1b1b;font-family:'Liberation Sans', sans-serif;"><b class="p1">(</b>169,667<b class="p2">)</b></div>
<div class="t" style="right:1617.0px;top:1495.0px;font-size:13.9px;font-weight:400;color:#1b1b1b;font-family:'Liberation Sans', sans-serif;"><b class="p1">(</b>43,667<b class="p2">)</b></div>
<div class="t" style="right:1497.0px;top:1495.0px;font-size:13.9px;font-weight:400;color:#1b1b1b;font-family:'Liberation Sans', sans-serif;"><b class="p1">(</b>37,000<b class="p2">)</b></div>
<div class="t" style="right:1377.0px;top:1495.0px;font-size:13.9px;font-weight:400;color:#1b1b1b;font-family:'Liberation Sans', sans-serif;"><b class="p1">(</b>28,000<b class="p2">)</b></div>
<div class="t" style="right:1262.0px;top:1495.0px;font-size:13.9px;font-weight:400;color:#1b1b1b;font-family:'Liberation Sans', sans-serif;">-</div>
<div class="t" style="right:1142.0px;top:1495.0px;font-size:13.9px;font-weight:400;color:#1b1b1b;font-family:'Liberation Sans', sans-serif;">-</div>
<div class="t" style="right:1022.0px;top:1495.0px;font-size:13.9px;font-weight:400;color:#1b1b1b;font-family:'Liberation Sans', sans-serif;">-</div>
<div class="t" style="right:902.0px;top:1495.0px;font-size:13.9px;font-weight:400;color:#1b1b1b;font-family:'Liberation Sans', sans-serif;">-</div>
<div class="t" style="right:782.0px;top:1495.0px;font-size:13.9px;font-weight:400;color:#1b1b1b;font-family:'Liberation Sans', sans-serif;">-</div>
<div class="t" style="right:662.0px;top:1495.0px;font-size:13.9px;font-weight:400;color:#1b1b1b;font-family:'Liberation Sans', sans-serif;">-</div>
<div class="t" style="right:542.0px;top:1495.0px;font-size:13.9px;font-weight:400;color:#1b1b1b;font-family:'Liberation Sans', sans-serif;">-</div>
<div class="t" style="right:422.0px;top:1495.0px;font-size:13.9px;font-weight:400;color:#1b1b1b;font-family:'Liberation Sans', sans-serif;">-</div>
<div class="t" style="right:302.0px;top:1495.0px;font-size:13.9px;font-weight:400;color:#1b1b1b;font-family:'Liberation Sans', sans-serif;">-</div>
<div class="t" style="right:182.0px;top:1495.0px;font-size:13.9px;font-weight:400;color:#1b1b1b;font-family:'Liberation Sans', sans-serif;">-</div>
<div class="t" style="right:62.0px;top:1495.0px;font-size:13.9px;font-weight:400;color:#1b1b1b;font-family:'Liberation Sans', sans-serif;">-</div>
<div class="t" style="left:138.9px;top:1513.0px;font-size:16.0px;font-weight:400;color:#1b1b1b;font-family:'Liberation Sans', sans-serif;transform:scaleX(0.9955);transform-origin:0 0;">Net Cash Flow from Financing Activities</div>
<div class="t" style="right:1982.5px;top:1515.0px;font-size:13.9px;font-weight:400;color:#1b1b1b;font-family:'Liberation Sans', sans-serif;">900,000</div>
<div class="t" style="right:1862.0px;top:1515.0px;font-size:13.9px;font-weight:400;color:#1b1b1b;font-family:'Liberation Sans', sans-serif;">-</div>
<div class="t" style="right:1742.5px;top:1515.0px;font-size:13.9px;font-weight:400;color:#1b1b1b;font-family:'Liberation Sans', sans-serif;">98,333</div>
<div class="t" style="right:1617.0px;top:1515.0px;font-size:13.9px;font-weight:400;color:#1b1b1b;font-family:'Liberation Sans', sans-serif;"><b class="p1">(</b>1,667<b class="p2">)</b></div>
<div class="t" style="right:1497.0px;top:1515.0px;font-size:13.9px;font-weight:400;color:#1b1b1b;font-family:'Liberation Sans', sans-serif;"><b class="p1">(</b>1,667<b class="p2">)</b></div>
<div class="t" style="right:1377.0px;top:1515.0px;font-size:13.9px;font-weight:400;color:#1b1b1b;font-family:'Liberation Sans', sans-serif;"><b class="p1">(</b>1,667<b class="p2">)</b></div>
<div class="t" style="right:1257.0px;top:1515.0px;font-size:13.9px;font-weight:400;color:#1b1b1b;font-family:'Liberation Sans', sans-serif;"><b class="p1">(</b>1,667<b class="p2">)</b></div>
<div class="t" style="right:1137.0px;top:1515.0px;font-size:13.9px;font-weight:400;color:#1b1b1b;font-family:'Liberation Sans', sans-serif;"><b class="p1">(</b>1,667<b class="p2">)</b></div>
<div class="t" style="right:1017.0px;top:1515.0px;font-size:13.9px;font-weight:400;color:#1b1b1b;font-family:'Liberation Sans', sans-serif;"><b class="p1">(</b>1,667<b class="p2">)</b></div>
<div class="t" style="right:897.0px;top:1515.0px;font-size:13.9px;font-weight:400;color:#1b1b1b;font-family:'Liberation Sans', sans-serif;"><b class="p1">(</b>1,667<b class="p2">)</b></div>
<div class="t" style="right:777.0px;top:1515.0px;font-size:13.9px;font-weight:400;color:#1b1b1b;font-family:'Liberation Sans', sans-serif;"><b class="p1">(</b>1,667<b class="p2">)</b></div>
<div class="t" style="right:657.0px;top:1515.0px;font-size:13.9px;font-weight:400;color:#1b1b1b;font-family:'Liberation Sans', sans-serif;"><b class="p1">(</b>1,667<b class="p2">)</b></div>
<div class="t" style="right:537.0px;top:1515.0px;font-size:13.9px;font-weight:400;color:#1b1b1b;font-family:'Liberation Sans', sans-serif;"><b class="p1">(</b>3,770<b class="p2">)</b></div>
<div class="t" style="right:417.0px;top:1515.0px;font-size:13.9px;font-weight:400;color:#1b1b1b;font-family:'Liberation Sans', sans-serif;"><b class="p1">(</b>3,780<b class="p2">)</b></div>
<div class="t" style="right:297.0px;top:1515.0px;font-size:13.9px;font-weight:400;color:#1b1b1b;font-family:'Liberation Sans', sans-serif;"><b class="p1">(</b>3,791<b class="p2">)</b></div>
<div class="t" style="right:177.0px;top:1515.0px;font-size:13.9px;font-weight:400;color:#1b1b1b;font-family:'Liberation Sans', sans-serif;"><b class="p1">(</b>3,801<b class="p2">)</b></div>
<div class="t" style="right:57.0px;top:1515.0px;font-size:13.9px;font-weight:400;color:#1b1b1b;font-family:'Liberation Sans', sans-serif;"><b class="p1">(</b>3,812<b class="p2">)</b></div>
<div class="t" style="left:138.9px;top:1533.0px;font-size:16.0px;font-weight:400;color:#1b1b1b;font-family:'Liberation Sans', sans-serif;transform:scaleX(0.9352);transform-origin:0 0;">Cash Receipts</div>
<div class="t" style="right:1982.5px;top:1535.0px;font-size:13.9px;font-weight:400;color:#1b1b1b;font-family:'Liberation Sans', sans-serif;">19,742</div>
<div class="t" style="right:1862.5px;top:1535.0px;font-size:13.9px;font-weight:400;color:#1b1b1b;font-family:'Liberation Sans', sans-serif;">49,368</div>
<div class="t" style="right:1742.5px;top:1535.0px;font-size:13.9px;font-weight:400;color:#1b1b1b;font-family:'Liberation Sans', sans-serif;">91,555</div>
<div class="t" style="right:1622.5px;top:1535.0px;font-size:13.9px;font-weight:400;color:#1b1b1b;font-family:'Liberation Sans', sans-serif;">105,975</div>
<div class="t" style="right:1502.5px;top:1535.0px;font-size:13.9px;font-weight:400;color:#1b1b1b;font-family:'Liberation Sans', sans-serif;">115,192</div>
<div class="t" style="right:1382.5px;top:1535.0px;font-size:13.9px;font-weight:400;color:#1b1b1b;font-family:'Liberation Sans', sans-serif;">111,412</div>
<div class="t" style="right:1262.5px;top:1535.0px;font-size:13.9px;font-weight:400;color:#1b1b1b;font-family:'Liberation Sans', sans-serif;">112,752</div>
<div class="t" style="right:1142.5px;top:1535.0px;font-size:13.9px;font-weight:400;color:#1b1b1b;font-family:'Liberation Sans', sans-serif;">115,129</div>
<div class="t" style="right:1022.5px;top:1535.0px;font-size:13.9px;font-weight:400;color:#1b1b1b;font-family:'Liberation Sans', sans-serif;">108,376</div>
<div class="t" style="right:902.5px;top:1535.0px;font-size:13.9px;font-weight:400;color:#1b1b1b;font-family:'Liberation Sans', sans-serif;">111,657</div>
<div class="t" style="right:782.5px;top:1535.0px;font-size:13.9px;font-weight:400;color:#1b1b1b;font-family:'Liberation Sans', sans-serif;">106,667</div>
<div class="t" style="right:662.5px;top:1535.0px;font-size:13.9px;font-weight:400;color:#1b1b1b;font-family:'Liberation Sans', sans-serif;">102,971</div>
<div class="t" style="right:542.5px;top:1535.0px;font-size:13.9px;font-weight:400;color:#1b1b1b;font-family:'Liberation Sans', sans-serif;">137,263</div>
<div class="t" style="right:422.5px;top:1535.0px;font-size:13.9px;font-weight:400;color:#1b1b1b;font-family:'Liberation Sans', sans-serif;">152,753</div>
<div class="t" style="right:302.5px;top:1535.0px;font-size:13.9px;font-weight:400;color:#1b1b1b;font-family:'Liberation Sans', sans-serif;">166,761</div>
<div class="t" style="right:182.5px;top:1535.0px;font-size:13.9px;font-weight:400;color:#1b1b1b;font-family:'Liberation Sans', sans-serif;">167,218</div>
<div class="t" style="right:62.5px;top:1535.0px;font-size:13.9px;font-weight:400;color:#1b1b1b;font-family:'Liberation Sans', sans-serif;">179,568</div>
<div class="t" style="left:138.9px;top:1553.0px;font-size:16.0px;font-weight:400;color:#1b1b1b;font-family:'Liberation Sans', sans-serif;transform:scaleX(0.9501);transform-origin:0 0;">Cash Payments</div>
<div class="t" style="right:1977.0px;top:1555.0px;font-size:13.9px;font-weight:400;color:#1b1b1b;font-family:'Liberation Sans', sans-serif;"><b class="p1">(</b>49,025<b class="p2">)</b></div>
<div class="t" style="right:1857.0px;top:1555.0px;font-size:13.9px;font-weight:400;color:#1b1b1b;font-family:'Liberation Sans', sans-serif;"><b class="p1">(</b>89,171<b class="p2">)</b></div>
<div class="t" style="right:1737.0px;top:1555.0px;font-size:13.9px;font-weight:400;color:#1b1b1b;font-family:'Liberation Sans', sans-serif;"><b class="p1">(</b>105,487<b class="p2">)</b></div>
<div class="t" style="right:1617.0px;top:1555.0px;font-size:13.9px;font-weight:400;color:#1b1b1b;font-family:'Liberation Sans', sans-serif;"><b class="p1">(</b>99,598<b class="p2">)</b></div>
<div class="t" style="right:1497.0px;top:1555.0px;font-size:13.9px;font-weight:400;color:#1b1b1b;font-family:'Liberation Sans', sans-serif;"><b class="p1">(</b>104,591<b class="p2">)</b></div>
<div class="t" style="right:1377.0px;top:1555.0px;font-size:13.9px;font-weight:400;color:#1b1b1b;font-family:'Liberation Sans', sans-serif;"><b class="p1">(</b>99,574<b class="p2">)</b></div>
<div class="t" style="right:1257.0px;top:1555.0px;font-size:13.9px;font-weight:400;color:#1b1b1b;font-family:'Liberation Sans', sans-serif;"><b class="p1">(</b>103,641<b class="p2">)</b></div>
<div class="t" style="right:1137.0px;top:1555.0px;font-size:13.9px;font-weight:400;color:#1b1b1b;font-family:'Liberation Sans', sans-serif;"><b class="p1">(</b>102,520<b class="p2">)</b></div>
<div class="t" style="right:1017.0px;top:1555.0px;font-size:13.9px;font-weight:400;color:#1b1b1b;font-family:'Liberation Sans', sans-serif;"><b class="p1">(</b>99,137<b class="p2">)</b></div>
<div class="t" style="right:897.0px;top:1555.0px;font-size:13.9px;font-weight:400;color:#1b1b1b;font-family:'Liberation Sans', sans-serif;"><b class="p1">(</b>103,680<b class="p2">)</b></div>
<div class="t" style="right:777.0px;top:1555.0px;font-size:13.9px;font-weight:400;color:#1b1b1b;font-family:'Liberation Sans', sans-serif;"><b class="p1">(</b>98,639<b class="p2">)</b></div>
<div class="t" style="right:657.0px;top:1555.0px;font-size:13.9px;font-weight:400;color:#1b1b1b;font-family:'Liberation Sans', sans-serif;"><b class="p1">(</b>100,900<b class="p2">)</b></div>
<div class="t" style="right:537.0px;top:1555.0px;font-size:13.9px;font-weight:400;color:#1b1b1b;font-family:'Liberation Sans', sans-serif;"><b class="p1">(</b>115,855<b class="p2">)</b></div>
<div class="t" style="right:417.0px;top:1555.0px;font-size:13.9px;font-weight:400;color:#1b1b1b;font-family:'Liberation Sans', sans-serif;"><b class="p1">(</b>110,193<b class="p2">)</b></div>
<div class="t" style="right:297.0px;top:1555.0px;font-size:13.9px;font-weight:400;color:#1b1b1b;font-family:'Liberation Sans', sans-serif;"><b class="p1">(</b>122,482<b class="p2">)</b></div>
<div class="t" style="right:177.0px;top:1555.0px;font-size:13.9px;font-weight:400;color:#1b1b1b;font-family:'Liberation Sans', sans-serif;"><b class="p1">(</b>117,506<b class="p2">)</b></div>
<div class="t" style="right:57.0px;top:1555.0px;font-size:13.9px;font-weight:400;color:#1b1b1b;font-family:'Liberation Sans', sans-serif;"><b class="p1">(</b>121,853<b class="p2">)</b></div>
<div class="t" style="left:138.9px;top:1573.0px;font-size:16.0px;font-weight:400;color:#1b1b1b;font-family:'Liberation Sans', sans-serif;transform:scaleX(0.9937);transform-origin:0 0;">Change in Cash (Pre-Corporate Tax &amp; Interest on Cash)</div>
<div class="t" style="right:1982.5px;top:1575.0px;font-size:13.9px;font-weight:400;color:#1b1b1b;font-family:'Liberation Sans', sans-serif;">715,716</div>
<div class="t" style="right:1857.0px;top:1575.0px;font-size:13.9px;font-weight:400;color:#1b1b1b;font-family:'Liberation Sans', sans-serif;"><b class="p1">(</b>201,470<b class="p2">)</b></div>
<div class="t" style="right:1737.0px;top:1575.0px;font-size:13.9px;font-weight:400;color:#1b1b1b;font-family:'Liberation Sans', sans-serif;"><b class="p1">(</b>85,266<b class="p2">)</b></div>
<div class="t" style="right:1617.0px;top:1575.0px;font-size:13.9px;font-weight:400;color:#1b1b1b;font-family:'Liberation Sans', sans-serif;"><b class="p1">(</b>38,956<b class="p2">)</b></div>
<div class="t" style="right:1497.0px;top:1575.0px;font-size:13.9px;font-weight:400;color:#1b1b1b;font-family:'Liberation Sans', sans-serif;"><b class="p1">(</b>28,066<b class="p2">)</b></div>
<div class="t" style="right:1377.0px;top:1575.0px;font-size:13.9px;font-weight:400;color:#1b1b1b;font-family:'Liberation Sans', sans-serif;"><b class="p1">(</b>17,829<b class="p2">)</b></div>
<div class="t" style="right:1262.5px;top:1575.0px;font-size:13.9px;font-weight:400;color:#1b1b1b;font-family:'Liberation Sans', sans-serif;">7,444</div>
<div class="t" style="right:1142.5px;top:1575.0px;font-size:13.9px;font-weight:400;color:#1b1b1b;font-family:'Liberation Sans', sans-serif;">10,943</div>
<div class="t" style="right:1022.5px;top:1575.0px;font-size:13.9px;font-weight:400;color:#1b1b1b;font-family:'Liberation Sans', sans-serif;">7,572</div>
<div class="t" style="right:902.5px;top:1575.0px;font-size:13.9px;font-weight:400;color:#1b1b1b;font-family:'Liberation Sans', sans-serif;">6,311</div>
<div class="t" style="right:782.5px;top:1575.0px;font-size:13.9px;font-weight:400;color:#1b1b1b;font-family:'Liberation Sans', sans-serif;">6,362</div>
<div class="t" style="right:662.5px;top:1575.0px;font-size:13.9px;font-weight:400;color:#1b1b1b;font-family:'Liberation Sans', sans-serif;">404</div>
<div class="t" style="right:542.5px;top:1575.0px;font-size:13.9px;font-weight:400;color:#1b1b1b;font-family:'Liberation Sans', sans-serif;">17,638</div>
<div class="t" style="right:422.5px;top:1575.0px;font-size:13.9px;font-weight:400;color:#1b1b1b;font-family:'Liberation Sans', sans-serif;">38,781</div>
<div class="t" style="right:302.5px;top:1575.0px;font-size:13.9px;font-weight:400;color:#1b1b1b;font-family:'Liberation Sans', sans-serif;">40,489</div>
<div class="t" style="right:182.5px;top:1575.0px;font-size:13.9px;font-weight:400;color:#1b1b1b;font-family:'Liberation Sans', sans-serif;">45,911</div>
<div class="t" style="right:62.5px;top:1575.0px;font-size:13.9px;font-weight:400;color:#1b1b1b;font-family:'Liberation Sans', sans-serif;">53,903</div>
<div class="t" style="left:138.9px;top:1593.0px;font-size:16.0px;font-weight:400;color:#1b1b1b;font-family:'Liberation Sans', sans-serif;transform:scaleX(0.9803);transform-origin:0 0;">Interest Expense</div>
<div class="t" style="right:1977.0px;top:1595.0px;font-size:13.9px;font-weight:400;color:#1b1b1b;font-family:'Liberation Sans', sans-serif;"><b class="p1">(</b>1,000<b class="p2">)</b></div>
<div class="t" style="right:1857.0px;top:1595.0px;font-size:13.9px;font-weight:400;color:#1b1b1b;font-family:'Liberation Sans', sans-serif;"><b class="p1">(</b>1,000<b class="p2">)</b></div>
<div class="t" style="right:1737.0px;top:1595.0px;font-size:13.9px;font-weight:400;color:#1b1b1b;font-family:'Liberation Sans', sans-serif;"><b class="p1">(</b>1,667<b class="p2">)</b></div>
<div class="t" style="right:1617.0px;top:1595.0px;font-size:13.9px;font-weight:400;color:#1b1b1b;font-family:'Liberation Sans', sans-serif;"><b class="p1">(</b>1,656<b class="p2">)</b></div>
<div class="t" style="right:1497.0px;top:1595.0px;font-size:13.9px;font-weight:400;color:#1b1b1b;font-family:'Liberation Sans', sans-serif;"><b class="p1">(</b>1,644<b class="p2">)</b></div>
<div class="t" style="right:1377.0px;top:1595.0px;font-size:13.9px;font-weight:400;color:#1b1b1b;font-family:'Liberation Sans', sans-serif;"><b class="p1">(</b>1,633<b class="p2">)</b></div>
<div class="t" style="right:1257.0px;top:1595.0px;font-size:13.9px;font-weight:400;color:#1b1b1b;font-family:'Liberation Sans', sans-serif;"><b class="p1">(</b>1,622<b class="p2">)</b></div>
<div class="t" style="right:1137.0px;top:1595.0px;font-size:13.9px;font-weight:400;color:#1b1b1b;font-family:'Liberation Sans', sans-serif;"><b class="p1">(</b>1,611<b class="p2">)</b></div>
<div class="t" style="right:1017.0px;top:1595.0px;font-size:13.9px;font-weight:400;color:#1b1b1b;font-family:'Liberation Sans', sans-serif;"><b class="p1">(</b>1,600<b class="p2">)</b></div>
<div class="t" style="right:897.0px;top:1595.0px;font-size:13.9px;font-weight:400;color:#1b1b1b;font-family:'Liberation Sans', sans-serif;"><b class="p1">(</b>1,589<b class="p2">)</b></div>
<div class="t" style="right:777.0px;top:1595.0px;font-size:13.9px;font-weight:400;color:#1b1b1b;font-family:'Liberation Sans', sans-serif;"><b class="p1">(</b>1,578<b class="p2">)</b></div>
<div class="t" style="right:657.0px;top:1595.0px;font-size:13.9px;font-weight:400;color:#1b1b1b;font-family:'Liberation Sans', sans-serif;"><b class="p1">(</b>1,567<b class="p2">)</b></div>
<div class="t" style="right:537.0px;top:1595.0px;font-size:13.9px;font-weight:400;color:#1b1b1b;font-family:'Liberation Sans', sans-serif;"><b class="p1">(</b>1,556<b class="p2">)</b></div>
<div class="t" style="right:417.0px;top:1595.0px;font-size:13.9px;font-weight:400;color:#1b1b1b;font-family:'Liberation Sans', sans-serif;"><b class="p1">(</b>1,534<b class="p2">)</b></div>
<div class="t" style="right:297.0px;top:1595.0px;font-size:13.9px;font-weight:400;color:#1b1b1b;font-family:'Liberation Sans', sans-serif;"><b class="p1">(</b>1,512<b class="p2">)</b></div>
<div class="t" style="right:177.0px;top:1595.0px;font-size:13.9px;font-weight:400;color:#1b1b1b;font-family:'Liberation Sans', sans-serif;"><b class="p1">(</b>1,491<b class="p2">)</b></div>
<div class="t" style="right:57.0px;top:1595.0px;font-size:13.9px;font-weight:400;color:#1b1b1b;font-family:'Liberation Sans', sans-serif;"><b class="p1">(</b>1,469<b class="p2">)</b></div>
<div class="t" style="left:138.9px;top:1613.0px;font-size:16.0px;font-weight:400;color:#1b1b1b;font-family:'Liberation Sans', sans-serif;transform:scaleX(0.9868);transform-origin:0 0;">Corporate Tax Expense</div>
<div class="t" style="right:1982.0px;top:1615.0px;font-size:13.9px;font-weight:400;color:#1b1b1b;font-family:'Liberation Sans', sans-serif;">-</div>
<div class="t" style="right:1862.0px;top:1615.0px;font-size:13.9px;font-weight:400;color:#1b1b1b;font-family:'Liberation Sans', sans-serif;">-</div>
<div class="t" style="right:1742.0px;top:1615.0px;font-size:13.9px;font-weight:400;color:#1b1b1b;font-family:'Liberation Sans', sans-serif;">-</div>
<div class="t" style="right:1622.0px;top:1615.0px;font-size:13.9px;font-weight:400;color:#1b1b1b;font-family:'Liberation Sans', sans-serif;">-</div>
<div class="t" style="right:1502.0px;top:1615.0px;font-size:13.9px;font-weight:400;color:#1b1b1b;font-family:'Liberation Sans', sans-serif;">-</div>
<div class="t" style="right:1382.0px;top:1615.0px;font-size:13.9px;font-weight:400;color:#1b1b1b;font-family:'Liberation Sans', sans-serif;">-</div>
<div class="t" style="right:1262.0px;top:1615.0px;font-size:13.9px;font-weight:400;color:#1b1b1b;font-family:'Liberation Sans', sans-serif;">-</div>
<div class="t" style="right:1142.0px;top:1615.0px;font-size:13.9px;font-weight:400;color:#1b1b1b;font-family:'Liberation Sans', sans-serif;">-</div>
<div class="t" style="right:1022.0px;top:1615.0px;font-size:13.9px;font-weight:400;color:#1b1b1b;font-family:'Liberation Sans', sans-serif;">-</div>
<div class="t" style="right:902.0px;top:1615.0px;font-size:13.9px;font-weight:400;color:#1b1b1b;font-family:'Liberation Sans', sans-serif;">-</div>
<div class="t" style="right:782.0px;top:1615.0px;font-size:13.9px;font-weight:400;color:#1b1b1b;font-family:'Liberation Sans', sans-serif;">-</div>
<div class="t" style="right:662.0px;top:1615.0px;font-size:13.9px;font-weight:400;color:#1b1b1b;font-family:'Liberation Sans', sans-serif;">-</div>
<div class="t" style="right:537.0px;top:1615.0px;font-size:13.9px;font-weight:400;color:#1b1b1b;font-family:'Liberation Sans', sans-serif;"><b class="p1">(</b>11,634<b class="p2">)</b></div>
<div class="t" style="right:417.0px;top:1615.0px;font-size:13.9px;font-weight:400;color:#1b1b1b;font-family:'Liberation Sans', sans-serif;"><b class="p1">(</b>7,181<b class="p2">)</b></div>
<div class="t" style="right:297.0px;top:1615.0px;font-size:13.9px;font-weight:400;color:#1b1b1b;font-family:'Liberation Sans', sans-serif;"><b class="p1">(</b>10,757<b class="p2">)</b></div>
<div class="t" style="right:177.0px;top:1615.0px;font-size:13.9px;font-weight:400;color:#1b1b1b;font-family:'Liberation Sans', sans-serif;"><b class="p1">(</b>11,767<b class="p2">)</b></div>
<div class="t" style="right:57.0px;top:1615.0px;font-size:13.9px;font-weight:400;color:#1b1b1b;font-family:'Liberation Sans', sans-serif;"><b class="p1">(</b>13,514<b class="p2">)</b></div>
<div class="t" style="left:146.3px;top:1632.0px;font-size:16.3px;font-weight:700;color:#fff;font-family:'Liberation Sans', sans-serif;-webkit-text-stroke:0.25px #fff;transform:scaleX(1.0699);transform-origin:0 0;">Net Increase/(Decrease) in Cash Held</div>
<div class="t" style="right:1985.2px;top:1632.0px;font-size:17.4px;font-weight:700;color:#fff;font-family:'Liberation Sans', sans-serif;letter-spacing:0.45px;-webkit-text-stroke:0.3px #fff">714,716</div>
<div class="t" style="right:1858.0px;top:1632.0px;font-size:17.4px;font-weight:700;color:#fff;font-family:'Liberation Sans', sans-serif;letter-spacing:0.45px;-webkit-text-stroke:0.3px #fff">(202,470)</div>
<div class="t" style="right:1738.0px;top:1632.0px;font-size:17.4px;font-weight:700;color:#fff;font-family:'Liberation Sans', sans-serif;letter-spacing:0.45px;-webkit-text-stroke:0.3px #fff">(86,933)</div>
<div class="t" style="right:1618.0px;top:1632.0px;font-size:17.4px;font-weight:700;color:#fff;font-family:'Liberation Sans', sans-serif;letter-spacing:0.45px;-webkit-text-stroke:0.3px #fff">(40,612)</div>
<div class="t" style="right:1498.0px;top:1632.0px;font-size:17.4px;font-weight:700;color:#fff;font-family:'Liberation Sans', sans-serif;letter-spacing:0.45px;-webkit-text-stroke:0.3px #fff">(29,710)</div>
<div class="t" style="right:1378.0px;top:1632.0px;font-size:17.4px;font-weight:700;color:#fff;font-family:'Liberation Sans', sans-serif;letter-spacing:0.45px;-webkit-text-stroke:0.3px #fff">(19,462)</div>
<div class="t" style="right:1265.2px;top:1632.0px;font-size:17.4px;font-weight:700;color:#fff;font-family:'Liberation Sans', sans-serif;letter-spacing:0.45px;-webkit-text-stroke:0.3px #fff">5,822</div>
<div class="t" style="right:1145.2px;top:1632.0px;font-size:17.4px;font-weight:700;color:#fff;font-family:'Liberation Sans', sans-serif;letter-spacing:0.45px;-webkit-text-stroke:0.3px #fff">9,332</div>
<div class="t" style="right:1025.2px;top:1632.0px;font-size:17.4px;font-weight:700;color:#fff;font-family:'Liberation Sans', sans-serif;letter-spacing:0.45px;-webkit-text-stroke:0.3px #fff">5,972</div>
<div class="t" style="right:905.2px;top:1632.0px;font-size:17.4px;font-weight:700;color:#fff;font-family:'Liberation Sans', sans-serif;letter-spacing:0.45px;-webkit-text-stroke:0.3px #fff">4,722</div>
<div class="t" style="right:785.2px;top:1632.0px;font-size:17.4px;font-weight:700;color:#fff;font-family:'Liberation Sans', sans-serif;letter-spacing:0.45px;-webkit-text-stroke:0.3px #fff">4,784</div>
<div class="t" style="right:658.0px;top:1632.0px;font-size:17.4px;font-weight:700;color:#fff;font-family:'Liberation Sans', sans-serif;letter-spacing:0.45px;-webkit-text-stroke:0.3px #fff">(1,163)</div>
<div class="t" style="right:545.2px;top:1632.0px;font-size:17.4px;font-weight:700;color:#fff;font-family:'Liberation Sans', sans-serif;letter-spacing:0.45px;-webkit-text-stroke:0.3px #fff">4,449</div>
<div class="t" style="right:425.2px;top:1632.0px;font-size:17.4px;font-weight:700;color:#fff;font-family:'Liberation Sans', sans-serif;letter-spacing:0.45px;-webkit-text-stroke:0.3px #fff">30,066</div>
<div class="t" style="right:305.2px;top:1632.0px;font-size:17.4px;font-weight:700;color:#fff;font-family:'Liberation Sans', sans-serif;letter-spacing:0.45px;-webkit-text-stroke:0.3px #fff">28,219</div>
<div class="t" style="right:185.2px;top:1632.0px;font-size:17.4px;font-weight:700;color:#fff;font-family:'Liberation Sans', sans-serif;letter-spacing:0.45px;-webkit-text-stroke:0.3px #fff">32,653</div>
<div class="t" style="right:65.2px;top:1632.0px;font-size:17.4px;font-weight:700;color:#fff;font-family:'Liberation Sans', sans-serif;letter-spacing:0.45px;-webkit-text-stroke:0.3px #fff">38,920</div>
<div style="left:11px;top:1670px;width:2880px;height:48px;background:#0a0a0a;"></div>
<div style="left:11px;top:1718px;width:2880px;height:1px;background:#2a2a2a;"></div>
<div style="left:11px;top:1719px;width:2880px;height:32px;background:#121212;"></div>
<svg style="left:45px;top:1685px" width="11" height="16" viewBox="0 0 11 16"><path d="M9.5 1 L2 8 L9.5 15" stroke="#9a9a9a" stroke-width="1.6" fill="none"/></svg>
<svg style="left:94px;top:1685px" width="11" height="16" viewBox="0 0 11 16"><path d="M1.5 1 L9 8 L1.5 15" stroke="#9a9a9a" stroke-width="1.6" fill="none"/></svg>
<div class="t" style="left:190.0px;top:1686.0px;font-size:20.4px;font-weight:400;color:#fff;font-family:'Liberation Sans', sans-serif;transform:scaleX(1.0215);transform-origin:0 0;">Contents</div>
<div style="left:1200px;top:1670px;width:80px;height:12px;background:#ffffff;"></div>
<div style="left:1140px;top:1670px;width:76px;height:44px;background:#0a0a0a;border-top-right-radius:9px"></div>
<div style="left:1264px;top:1670px;width:76px;height:44px;background:#0a0a0a;border-top-left-radius:9px"></div>
<div style="left:292.7px;top:1680px;width:1.0px;height:28px;background:#4a4a4a;"></div>
<div style="left:433.5px;top:1680px;width:1.0px;height:28px;background:#4a4a4a;"></div>
<div style="left:552px;top:1680px;width:1px;height:28px;background:#4a4a4a;"></div>
<div style="left:723.8px;top:1680px;width:1.0px;height:28px;background:#4a4a4a;"></div>
<div style="left:826px;top:1680px;width:1px;height:28px;background:#4a4a4a;"></div>
<div style="left:925.5px;top:1680px;width:1.0px;height:28px;background:#4a4a4a;"></div>
<div style="left:1051px;top:1680px;width:1px;height:28px;background:#4a4a4a;"></div>
<div style="left:1154px;top:1680px;width:1px;height:28px;background:#4a4a4a;"></div>
<div style="left:1210px;top:1680px;width:1px;height:28px;background:#4a4a4a;"></div>
<div style="left:1270px;top:1680px;width:1px;height:28px;background:#4a4a4a;"></div>
<div style="left:1331.4px;top:1680px;width:1.0px;height:28px;background:#4a4a4a;"></div>
<div style="left:1460px;top:1680px;width:1px;height:28px;background:#4a4a4a;"></div>
<div style="left:1587px;top:1680px;width:1px;height:28px;background:#4a4a4a;"></div>
<div style="left:1714.6px;top:1680px;width:1.0px;height:28px;background:#4a4a4a;"></div>
<div style="left:1775px;top:1680px;width:1px;height:28px;background:#4a4a4a;"></div>
<div style="left:1860px;top:1680px;width:1px;height:28px;background:#4a4a4a;"></div>
<div style="left:1958px;top:1680px;width:1px;height:28px;background:#4a4a4a;"></div>
<div style="left:2035px;top:1680px;width:1px;height:28px;background:#4a4a4a;"></div>
<div style="left:299px;top:1676px;width:128px;height:36px;background:#ffea70;border-radius:6px"></div>
<div class="t" style="left:313.4px;top:1686.0px;font-size:20.6px;font-weight:400;color:#111;font-family:'Liberation Sans', sans-serif;transform:scaleX(0.9983);transform-origin:0 0;">Dashboard</div>
<div style="left:440px;top:1676px;width:106px;height:36px;background:#ffea70;border-radius:6px"></div>
<div class="t" style="left:454.8px;top:1686.0px;font-size:20.6px;font-weight:400;color:#111;font-family:'Liberation Sans', sans-serif;transform:scaleX(0.9496);transform-origin:0 0;">Revenue</div>
<div style="left:559px;top:1676px;width:158px;height:36px;background:#ffea70;border-radius:6px"></div>
<div class="t" style="left:571.6px;top:1686.0px;font-size:20.6px;font-weight:400;color:#111;font-family:'Liberation Sans', sans-serif;transform:scaleX(0.9392);transform-origin:0 0;">COGS &amp; OPEX</div>
<div style="left:730px;top:1676px;width:89px;height:36px;background:#ffea70;border-radius:6px"></div>
<div class="t" style="left:743.1px;top:1686.0px;font-size:20.6px;font-weight:400;color:#111;font-family:'Liberation Sans', sans-serif;transform:scaleX(0.9894);transform-origin:0 0;">Payroll</div>
<div style="left:832px;top:1676px;width:87px;height:36px;background:#ffea70;border-radius:6px"></div>
<div class="t" style="left:844.4px;top:1686.0px;font-size:20.6px;font-weight:400;color:#111;font-family:'Liberation Sans', sans-serif;transform:scaleX(0.8849);transform-origin:0 0;">CAPEX</div>
<div style="left:932px;top:1676px;width:113px;height:36px;background:#ffea70;border-radius:6px"></div>
<div class="t" style="left:944.8px;top:1686.0px;font-size:20.6px;font-weight:400;color:#111;font-family:'Liberation Sans', sans-serif;transform:scaleX(0.9927);transform-origin:0 0;">CapTable</div>
<div style="left:1058px;top:1676px;width:90px;height:36px;background:#ffea70;border-radius:6px"></div>
<div class="t" style="left:1070.7px;top:1686.0px;font-size:20.6px;font-weight:400;color:#111;font-family:'Liberation Sans', sans-serif;transform:scaleX(1.0012);transform-origin:0 0;">Capital</div>
<div style="left:1161px;top:1676px;width:42px;height:36px;background:#4db6ea;border-radius:6px"></div>
<div class="t" style="left:1173.4px;top:1686.0px;font-size:20.6px;font-weight:400;color:#111;font-family:'Liberation Sans', sans-serif;transform:scaleX(0.9351);transform-origin:0 0;">IS</div>
<div style="left:1277px;top:1676px;width:48px;height:36px;background:#4db6ea;border-radius:6px"></div>
<div class="t" style="left:1287.1px;top:1686.0px;font-size:20.6px;font-weight:400;color:#111;font-family:'Liberation Sans', sans-serif;transform:scaleX(0.9243);transform-origin:0 0;">BS</div>
<div style="left:1338px;top:1676px;width:115px;height:36px;background:#4db6ea;border-radius:6px"></div>
<div class="t" style="left:1350.7px;top:1686.0px;font-size:20.6px;font-weight:400;color:#111;font-family:'Liberation Sans', sans-serif;transform:scaleX(0.9585);transform-origin:0 0;">Scenarios</div>
<div style="left:1466px;top:1676px;width:115px;height:36px;background:#4db6ea;border-radius:6px"></div>
<div class="t" style="left:1478.4px;top:1686.0px;font-size:20.6px;font-weight:400;color:#111;font-family:'Liberation Sans', sans-serif;transform:scaleX(1.0525);transform-origin:0 0;">Valuation</div>
<div style="left:1594px;top:1676px;width:114px;height:36px;background:#4db6ea;border-radius:6px"></div>
<div class="t" style="left:1607.8px;top:1686.0px;font-size:20.6px;font-weight:400;color:#111;font-family:'Liberation Sans', sans-serif;transform:scaleX(0.9963);transform-origin:0 0;">Summary</div>
<div style="left:1721px;top:1676px;width:48px;height:36px;background:#4db6ea;border-radius:6px"></div>
<div class="t" style="left:1734.2px;top:1686.0px;font-size:20.6px;font-weight:400;color:#111;font-family:'Liberation Sans', sans-serif;transform:scaleX(0.8151);transform-origin:0 0;">BE</div>
<div style="left:1782px;top:1676px;width:72px;height:36px;background:#4db6ea;border-radius:6px"></div>
<div class="t" style="left:1795.3px;top:1686.0px;font-size:20.6px;font-weight:400;color:#111;font-family:'Liberation Sans', sans-serif;transform:scaleX(0.9049);transform-origin:0 0;">ROIC</div>
<div style="left:1867px;top:1676px;width:85px;height:36px;background:#4db6ea;border-radius:6px"></div>
<div class="t" style="left:1879.1px;top:1686.0px;font-size:20.6px;font-weight:400;color:#111;font-family:'Liberation Sans', sans-serif;transform:scaleX(0.9791);transform-origin:0 0;">Charts</div>
<div style="left:1965px;top:1676px;width:64px;height:36px;background:#4db6ea;border-radius:6px"></div>
<div class="t" style="left:1977.7px;top:1686.0px;font-size:20.6px;font-weight:400;color:#111;font-family:'Liberation Sans', sans-serif;transform:scaleX(0.8942);transform-origin:0 0;">KPIs</div>
<div style="left:2042px;top:1676px;width:30px;height:36px;overflow:hidden"><div style="left:0;top:0;width:60px;height:36px;background:#4db6ea;border-radius:6px"></div><div class="t" style="left:8px;top:9.7px;font-size:20.4px;color:#111;font-family:'Liberation Sans', sans-serif">Scenarios</div></div>
<div style="left:1216px;top:1670px;width:48px;height:42px;background:linear-gradient(#ffffff 40%,#cfe6f7);border-radius:0 0 6px 6px"></div>
<div class="t" style="left:940.0px;width:600px;text-align:center;top:1681.0px;font-size:20.4px;font-weight:400;color:#111;font-family:'Liberation Sans', sans-serif;letter-spacing:-0.5px">CF</div>
<div style="left:1228px;top:1705px;width:24px;height:3px;background:#1e7a45;"></div>
<div style="left:2087px;top:1691px;width:4px;height:4px;background:#fff;border-radius:2px"></div>
<div style="left:2094px;top:1691px;width:4px;height:4px;background:#fff;border-radius:2px"></div>
<div style="left:2101px;top:1691px;width:4px;height:4px;background:#fff;border-radius:2px"></div>
<div style="left:2135px;top:1692px;width:17px;height:2px;background:#fff;"></div>
<div style="left:2142.5px;top:1684.5px;width:2.0px;height:17.0px;background:#fff;"></div>
<div style="left:2191px;top:1686px;width:3px;height:3px;background:#fff;border-radius:2px"></div>
<div style="left:2191px;top:1692px;width:3px;height:3px;background:#fff;border-radius:2px"></div>
<div style="left:2191px;top:1698px;width:3px;height:3px;background:#fff;border-radius:2px"></div>
<div style="left:2215px;top:1680px;width:645px;height:26px;background:#151515;border-radius:13px"></div>
<svg style="left:2224px;top:1686px" width="11" height="14" viewBox="0 0 11 14"><path d="M10 1 L1.5 7 L10 13 Z" fill="#9a9a9a"/></svg>
<div style="left:2243px;top:1686.5px;width:157px;height:12.5px;background:#9a9a9a;border-radius:6px"></div>
<svg style="left:2841px;top:1686px" width="11" height="14" viewBox="0 0 11 14"><path d="M1 1 L9.5 7 L1 13 Z" fill="#9a9a9a"/></svg>
<div class="t" style="left:26.6px;top:1728.0px;font-size:15.2px;font-weight:400;color:#fff;font-family:'Liberation Sans', sans-serif;transform:scaleX(0.9969);transform-origin:0 0;">Ready</div>
<svg style="left:98px;top:1725px" width="24" height="21" viewBox="0 0 24 21"><path d="M9 19.5 H2 V1.5 H22 V8.5 M2 4 H22" stroke="#fff" stroke-width="1.8" fill="none"/><path d="M4.5 8.5 H7.5 M4.5 11.5 H7.5 M4.5 14.5 H7.5" stroke="#fff" stroke-width="1.5"/><circle cx="15.7" cy="13.6" r="5.7" stroke="#fff" stroke-width="1.8" fill="#121212"/><circle cx="15.7" cy="13.6" r="2.9" fill="#fff"/></svg>
<svg style="left:145px;top:1723px" width="25" height="24" viewBox="0 0 25 24"><circle cx="10.5" cy="4.8" r="2.7" stroke="#fff" stroke-width="1.6" fill="none"/><path d="M2.2 8 C3 6.5 4.5 6.8 6 7.8 C8.5 9.3 12.5 9.3 15 7.8 C16.5 6.8 18 6.5 18.8 8 C19.3 9.2 18 10 16.5 10.8 L13.8 12 L13.5 14.5 M7.2 12 L4.5 10.8 C3 10 1.7 9.2 2.2 8 M7.2 12 L7.8 16 L6.5 21 C6.2 22.3 8 22.8 8.6 21.5 L10.5 16.5 L11.5 18" stroke="#fff" stroke-width="1.5" fill="none" stroke-linejoin="round"/><path d="M13.5 13.5 L22 22 M22 13.5 L13.5 22" stroke="#fff" stroke-width="1.4"/></svg>
<div class="t" style="left:172.7px;top:1728.0px;font-size:15.9px;font-weight:700;color:#fff;font-family:'Liberation Sans', sans-serif;transform:scaleX(0.9912);transform-origin:0 0;">Accessibility: Investigate</div>
<div style="left:2445px;top:1719px;width:60px;height:32px;background:#262626;"></div>
<svg style="left:2464px;top:1724px" width="22" height="22" viewBox="0 0 22 22"><path d="M1 1 H21 V21 H1 Z M1 7.7 H21 M1 14.3 H21 M7.7 1 V21 M14.3 1 V21" stroke="#fff" stroke-width="1.6" fill="none"/></svg>
<svg style="left:2523px;top:1724px" width="24" height="22" viewBox="0 0 24 22"><rect x="1" y="1" width="22" height="20" stroke="#fff" stroke-width="1.6" fill="none"/><rect x="5" y="4" width="14" height="14" stroke="#fff" stroke-width="1.4" fill="none"/><path d="M8 8 H16 M8 11 H16 M8 14 H16" stroke="#fff" stroke-width="1.3"/></svg>
<svg style="left:2583px;top:1724px" width="23" height="22" viewBox="0 0 23 22"><path d="M1 1 H22 V21 H1 Z M6.5 1 V12 M1 12 H15 V1" stroke="#fff" stroke-width="1.6" fill="none"/></svg>
<div style="left:2633px;top:1734.5px;width:12px;height:1.5px;background:#ddd;"></div>
<div style="left:2653px;top:1734px;width:147px;height:2px;background:#b4b4b4;"></div>
<div style="left:2723px;top:1726px;width:8px;height:17px;background:#c4c4c4;border-radius:1px"></div>
<div style="left:2808px;top:1734.5px;width:13px;height:1.5px;background:#ddd;"></div>
<div style="left:2813.8px;top:1728.5px;width:1.5px;height:13.0px;background:#ddd;"></div>
<div class="t" style="left:2840.0px;top:1728.0px;font-size:15.5px;font-weight:400;color:#fff;font-family:'Liberation Sans', sans-serif;">100%</div>
</body></html>
